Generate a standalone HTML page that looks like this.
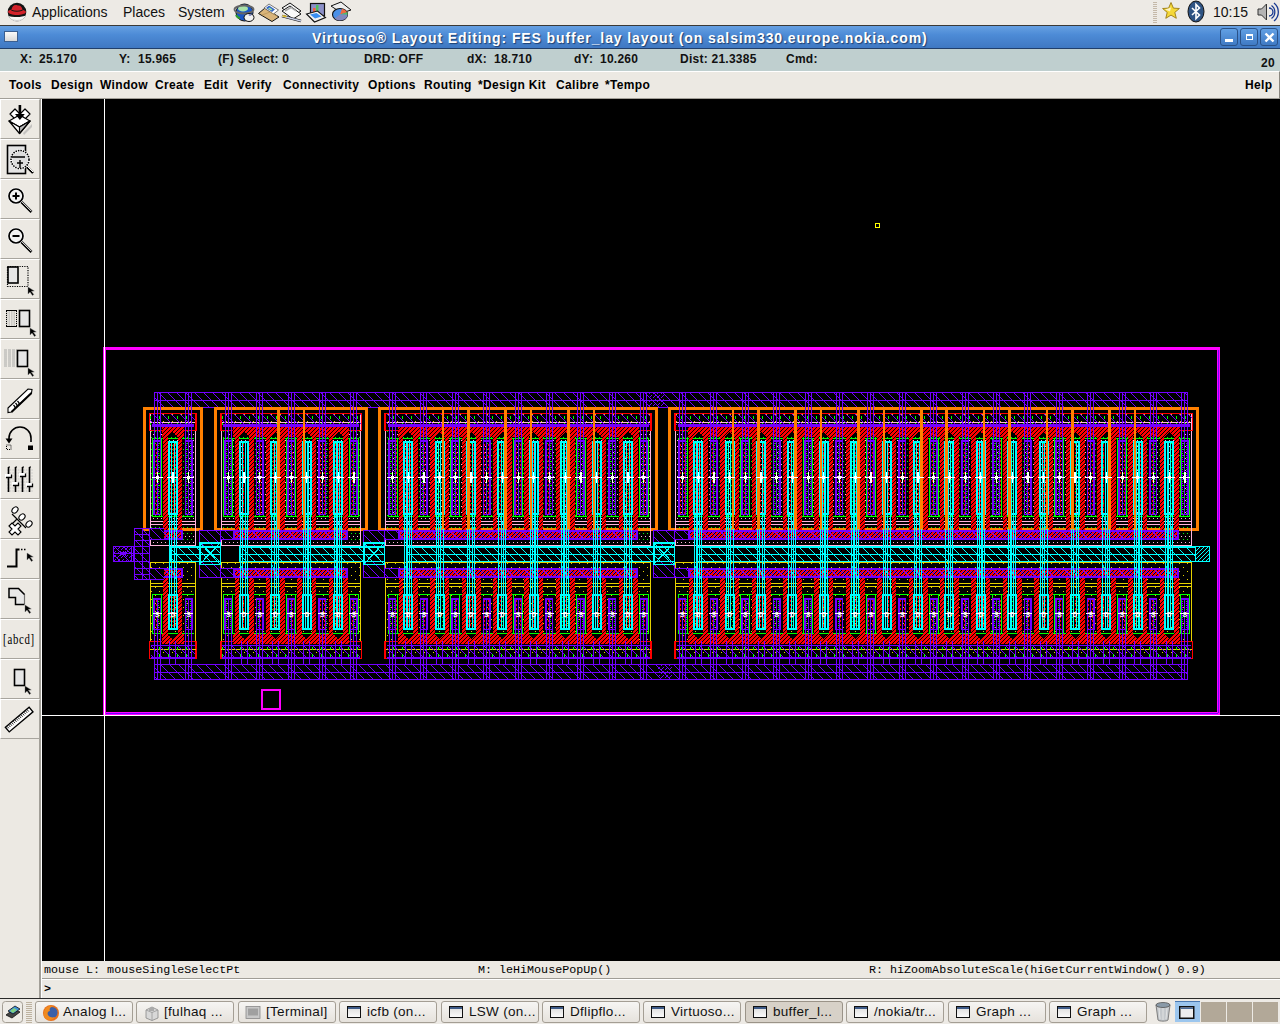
<!DOCTYPE html><html><head><meta charset="utf-8"><style>*{margin:0;padding:0;box-sizing:border-box}
html,body{width:1280px;height:1024px;overflow:hidden;background:#000;font-family:"Liberation Sans",sans-serif}
.a{position:absolute;white-space:pre}
#panel{position:absolute;left:0;top:0;width:1280px;height:26px;background:#edeae5;border-bottom:1px solid #3a3936}
#title{position:absolute;left:0;top:26px;width:1280px;height:23px;background:linear-gradient(#66a0e2,#4d8bd6 40%,#3f78c2);border-bottom:1px solid #213f6a}
#status{position:absolute;left:0;top:49px;width:1280px;height:22px;background:#bfcfcf}
#menu{position:absolute;left:0;top:71px;width:1280px;height:28px;background:#ece9e3;border-top:1px solid #fff;border-bottom:1px solid #a29f98;border-right:1px solid #8a8780}
.st{font:bold 12px "Liberation Sans",sans-serif;color:#111;top:3px;letter-spacing:0.25px}
.mn{font:bold 12px "Liberation Sans",sans-serif;color:#000;top:6px;letter-spacing:0.35px}
#tools{position:absolute;left:0;top:99px;width:42px;height:899px;background:#ece9e3;border-right:1px solid #fff;box-shadow:inset -2px 0 0 #a29f98}
.tb{position:absolute;left:0;width:40px;height:40px;border-top:1px solid #fff;border-left:1px solid #fff;border-right:1px solid #a8a59e;border-bottom:1px solid #a8a59e}
.tb svg{position:absolute;left:0;top:0}
#canvas{position:absolute;left:42px;top:99px;width:1238px;height:862px;background:#000;overflow:hidden}
#minfo{position:absolute;left:42px;top:961px;width:1238px;height:18px;background:#ece9e3;border-bottom:1px solid #a09d96}
#cmdl{position:absolute;left:42px;top:979px;width:1238px;height:19px;background:#ece9e3;border-top:1px solid #fff}
.mono{font:11.7px "Liberation Mono",monospace;color:#000}
#task{position:absolute;left:0;top:998px;width:1280px;height:26px;background:#edeae5;border-top:1px solid #2a2a2a}
.btn{position:absolute;top:2px;height:22px;width:98px;border:1px solid #a49e94;border-radius:3px;background:linear-gradient(#f6f5f3,#e6e2dc)}
.btn.act{background:#d7d1c8;border-color:#9a9388}
.btn span{position:absolute;left:27px;top:2px;font:13.5px "Liberation Sans",sans-serif;color:#111;white-space:pre;letter-spacing:0.3px}
.wi{position:absolute;left:7px;top:4px;width:14px;height:12px;border:1.5px solid #111;background:linear-gradient(#dcdcdc,#fafafa)}
.wi:before{content:"";position:absolute;left:0;top:0;right:0;height:2px;background:#3d5a88}
.tbtn{top:3px;width:18px;height:18px;border:1px solid #2a5288;border-radius:3px;background:linear-gradient(#62a0e4,#3f7ac4)}
</style></head><body><div id="panel">
<svg class="a" style="left:0;top:0" width="1280" height="25" viewBox="0 0 1280 25">
 <!-- red hat -->
 <defs><clipPath id="rhc"><circle cx="17" cy="12" r="9.3"/></clipPath></defs>
 <circle cx="17" cy="12" r="9.3" fill="#141414"/>
 <g clip-path="url(#rhc)">
 <path d="M5 14.5c3 2 8 2.5 12 2.5s8-0.8 12-3V24H5z" fill="#f6f6f6"/>
 <path d="M9 18.5c3 1.5 6 2 8 2s5.5-0.5 8-2" stroke="#cfcfcf" stroke-width="1.2" fill="none"/>
 </g>
 <path d="M11.5 9.5c0.5-2.6 2-4.5 4.2-4.5c1.3 0 1.8 0.6 3 0.6c2 0 3.3 1.6 3.8 4.2c1.8 0.5 3.3 1.3 3.5 2.2c-0.3 1.6-4.5 3-9 3c-4.5 0-8.8-1.4-9-3.3c0-0.9 1.3-1.7 3.5-2.2z" fill="#d3222b"/>
 <path d="M11.3 10.2c3.5 1.4 8 1.4 11.5-0.2" stroke="#141414" stroke-width="1" fill="none"/>
 <!-- globe + mouse -->
 <ellipse cx="244.5" cy="12.5" rx="8.5" ry="8.5" fill="#1a56c4" stroke="#111" stroke-width="1"/>
 <ellipse cx="243" cy="8.5" rx="5" ry="3" fill="#a8e0a8"/>
 <path d="M236 15c1 2 3 3 4 3" stroke="#2e9a2e" stroke-width="2" fill="none"/>
 <ellipse cx="244" cy="9.5" rx="9.5" ry="4" fill="none" stroke="#666" stroke-width="1.8"/>
 <ellipse cx="249" cy="17.5" rx="5" ry="4" fill="#f2f2f2" stroke="#111" stroke-width="1"/>
 <ellipse cx="250" cy="15" rx="1.5" ry="0.7" fill="#5560b0"/>
 <!-- envelope -->
 <path d="M258.5 13.5l6.5 -5.5l14 9l-7 4.5z" fill="#d9b47a" stroke="#111" stroke-width="1"/>
 <path d="M264 8l5 -4l9.5 6l-5 4z" fill="#fff" stroke="#555" stroke-width="0.8"/>
 <path d="M266 8l3 -2.5l6 4l-3 2.5z" fill="#3466c4"/>
 <path d="M268 8.5l1.5 -1l3 2l-1.5 1z" fill="#a0e0a0"/>
 <path d="M262 15l8 -3l7 4" stroke="#b8965a" stroke-width="0.8" fill="none"/>
 <!-- document + pen -->
 <path d="M282 8l8 -5l11 8l-8 5z" fill="#f4f4f4" stroke="#111" stroke-width="1"/>
 <path d="M282 11l8 -5l11 8l-8 5z" fill="#fafafa" stroke="#111" stroke-width="1"/>
 <path d="M285 11l6 -3.5l5 3.5" stroke="#aaa" stroke-width="1.5" fill="none"/>
 <path d="M282 16l19 5" stroke="#111" stroke-width="2.6"/>
 <path d="M282 16l19 5" stroke="#c8d0e8" stroke-width="1.4"/>
 <path d="M282.5 15.8l4 1" stroke="#e8c020" stroke-width="1.6"/>
 <!-- chart -->
 <rect x="310.5" y="3.5" width="14" height="12" fill="#8c90c8" stroke="#111" stroke-width="1.2"/>
 <rect x="313" y="8" width="2.5" height="4" fill="#f06040"/>
 <rect x="316" y="5" width="2.5" height="7" fill="#50c060"/>
 <path d="M306.5 14l11 -3l8 6.5l-11 4.5z" fill="#f2f2f2" stroke="#111" stroke-width="1.1"/>
 <path d="M310 14.5l6.5 -1.5l5 3.5l-6.5 2z" fill="#3a8ef0"/>
 <!-- pie -->
 <path d="M331 6l10 -4l10 8l-9.5 3z" fill="#eee" stroke="#111" stroke-width="1"/>
 <ellipse cx="340" cy="14.5" rx="7.5" ry="6" fill="#4a90e8" stroke="#111" stroke-width="1.1"/>
 <path d="M340 14.5l2-5.8a7.5 6 0 0 1 5.2 3.5z" fill="#f06a40"/>
 <path d="M340 14.5l7.2-2.3a7.5 6 0 0 1 0.3 2.8z" fill="#50c060"/>
 <path d="M340 14.5h7.5a7.5 6 0 0 1-13 4z" fill="#8088c0"/>
 <!-- handle -->
 <path d="M1153 2.5h4M1153 4.5h4M1153 6.5h4M1153 8.5h4M1153 10.5h4M1153 12.5h4M1153 14.5h4M1153 16.5h4M1153 18.5h4M1153 20.5h4M1153 22.5h4" stroke="#c4b8a8" stroke-width="1"/>
 <!-- star -->
 <path d="M1171 2.5l2.4 5.6l6 0.4l-4.6 3.9l1.5 5.9l-5.3-3.2l-5.2 3.2l1.4-5.9l-4.6-3.9l6-0.4z" fill="#f5d838" stroke="#9a7a10" stroke-width="0.9"/>
 <path d="M1165 9.5l5 2l1 -4" fill="#fff" opacity="0.7"/>
 <!-- bluetooth -->
 <ellipse cx="1196" cy="11.5" rx="8" ry="10.5" fill="#2e5383" stroke="#111" stroke-width="1"/>
 <path d="M1192 8l7.5 7l-3.5 3.5v-14l3.5 3.5l-7.5 7" stroke="#fff" stroke-width="1.6" fill="none"/>
 <!-- speaker -->
 <path d="M1258 9h3.5l5-5v16l-5-5h-3.5z" fill="#b4b4b4" stroke="#333" stroke-width="1"/>
 <path d="M1269 8a4 4 0 0 1 0 8M1271.5 5.5a8 8 0 0 1 0 13M1274 3a11.5 11.5 0 0 1 0 18" stroke="#1a3a90" stroke-width="1.3" fill="none"/>
</svg>
 <span class="a" style="left:32px;top:4px;font:14px 'Liberation Sans',sans-serif;color:#111">Applications</span>
 <span class="a" style="left:123px;top:4px;font:14px 'Liberation Sans',sans-serif;color:#111">Places</span>
 <span class="a" style="left:178px;top:4px;font:14px 'Liberation Sans',sans-serif;color:#111">System</span>
 <span class="a" style="left:1213px;top:4px;font:14px 'Liberation Sans',sans-serif;color:#111">10:15</span>
</div>
<div id="title">
 <div class="a" style="left:4px;top:5px;width:14px;height:11px;background:linear-gradient(#fafafa,#d8d8d8);border:1px solid #3b5f90"></div>
 <div class="a tbtn" style="left:1220px;top:2px"><div style="position:absolute;left:4px;top:10px;width:8px;height:3px;background:#fff"></div></div>
 <div class="a tbtn" style="left:1240px;top:2px"><div style="position:absolute;left:5px;top:5px;width:7px;height:6px;border:1.5px solid #fff;border-top-width:2.5px"></div></div>
 <div class="a tbtn" style="left:1260px;top:2px"><svg width="17" height="17" style="position:absolute;left:0;top:0"><path d="M4.5 4.5l8 8M12.5 4.5l-8 8" stroke="#fff" stroke-width="2.4"/></svg></div>
 <span class="a" style="left:312px;top:4px;font:bold 14px 'Liberation Sans',sans-serif;color:#fff;letter-spacing:0.9px;text-shadow:1px 1px 1px #1d3f70">Virtuoso® Layout Editing: FES buffer_lay layout (on salsim330.europe.nokia.com)</span>
</div>
<div id="status">
 <span class="a st" style="left:20px">X:</span><span class="a st" style="left:39px">25.170</span>
 <span class="a st" style="left:119px">Y:</span><span class="a st" style="left:138px">15.965</span>
 <span class="a st" style="left:218px">(F) Select: 0</span>
 <span class="a st" style="left:364px">DRD: OFF</span>
 <span class="a st" style="left:467px">dX:</span><span class="a st" style="left:494px">18.710</span>
 <span class="a st" style="left:574px">dY:</span><span class="a st" style="left:600px">10.260</span>
 <span class="a st" style="left:680px">Dist: 21.3385</span>
 <span class="a st" style="left:786px">Cmd:</span>
 <span class="a st" style="left:1261px;top:7px">20</span>
</div>
<div id="menu">
 <span class="a mn" style="left:9px">Tools</span>
 <span class="a mn" style="left:51px">Design</span>
 <span class="a mn" style="left:100px">Window</span>
 <span class="a mn" style="left:155px">Create</span>
 <span class="a mn" style="left:204px">Edit</span>
 <span class="a mn" style="left:237px">Verify</span>
 <span class="a mn" style="left:283px">Connectivity</span>
 <span class="a mn" style="left:368px">Options</span>
 <span class="a mn" style="left:424px">Routing</span>
 <span class="a mn" style="left:478px">*Design Kit</span>
 <span class="a mn" style="left:556px">Calibre</span>
 <span class="a mn" style="left:605px">*Tempo</span>
 <span class="a mn" style="left:1245px">Help</span>
</div>
<div id="tools"></div>
<div id="minfo">
 <span class="a mono" style="left:2px;top:2px">mouse L: mouseSingleSelectPt</span>
 <span class="a mono" style="left:436px;top:2px">M: leHiMousePopUp()</span>
 <span class="a mono" style="left:827px;top:2px">R: hiZoomAbsoluteScale(hiGetCurrentWindow() 0.9)</span>
</div>
<div id="cmdl"><span class="a mono" style="left:2px;top:2px;font-weight:bold">&gt;</span></div>
<div id="task">
 <svg class="a" style="left:0;top:0" width="35" height="26"><rect x="2.5" y="2.5" width="20" height="21" rx="3" fill="#efece7" stroke="#a49e94"/>
<path d="M6 16l8 -6l6 3l-8 6z" fill="#444" stroke="#111" stroke-width="0.8"/><path d="M8 12l7 -5l5 3l-7 5z" fill="#3c8ed8" stroke="#111" stroke-width="0.8"/><path d="M10 12l4 -3l3 2l-4 3z" fill="#80d080"/>
<path d="M26 3.5h6M26 5.5h6M26 7.5h6M26 9.5h6M26 11.5h6M26 13.5h6M26 15.5h6M26 17.5h6M26 19.5h6M26 21.5h6M26 23.5h6" stroke="#bdb2a0" stroke-width="1"/></svg>
 <div class="btn" style="left:35px"><svg class="a" style="left:6px;top:2px" width="18" height="18"><circle cx="9" cy="9" r="8" fill="#e8701a"/><circle cx="10" cy="8.5" r="5.5" fill="#3a5fa8"/><path d="M2 8c1-5 5-7 9-6c-3 1-4 3-3 5c-2 0-3 2-2 4c1 2 4 3 7 2c-2 3-6 4-9 2c-1.5-1-2.5-3-2-7z" fill="#f08a20"/></svg><span>Analog l...</span></div>
 <div class="btn" style="left:136px"><svg class="a" style="left:7px;top:3px" width="16" height="16"><path d="M2 5l6 -3l6 3v8l-6 2.5l-6 -2.5z" fill="#d8d8d8" stroke="#888" stroke-width="0.8"/><path d="M8 7v8.5M2 5l6 2.5l6 -2.5" stroke="#999" stroke-width="0.8" fill="none"/><rect x="5" y="3" width="5" height="3" fill="#aaa"/></svg><span>[fulhaq ...</span></div>
 <div class="btn" style="left:238px"><svg class="a" style="left:6px;top:3px" width="16" height="16"><rect x="1" y="1.5" width="14" height="12" fill="#c8c8c8" stroke="#888" stroke-width="0.8"/><rect x="3" y="3.5" width="10" height="7" fill="#a0a0a0"/></svg><span>[Terminal]</span></div>
 <div class="btn" style="left:339px"><div class="wi"></div><span>icfb (on...</span></div>
 <div class="btn" style="left:441px"><div class="wi"></div><span>LSW (on...</span></div>
 <div class="btn" style="left:542px"><div class="wi"></div><span>Dflipflo...</span></div>
 <div class="btn" style="left:643px"><div class="wi"></div><span>Virtuoso...</span></div>
 <div class="btn act" style="left:745px"><div class="wi"></div><span>buffer_l...</span></div>
 <div class="btn" style="left:846px"><div class="wi"></div><span>/nokia/tr...</span></div>
 <div class="btn" style="left:948px"><div class="wi"></div><span>Graph ...</span></div>
 <div class="btn" style="left:1049px"><div class="wi"></div><span>Graph ...</span></div>
<svg class="a" style="left:1150px;top:0" width="130" height="26">
<path d="M6 6h14l-2 15c-1 1.5-9 1.5-10 0z" fill="#c4c8cc" stroke="#666" stroke-width="0.8"/>
<ellipse cx="13" cy="6" rx="7" ry="2.5" fill="#8a9aa8" stroke="#555" stroke-width="0.8"/>
<path d="M9 9l1 11M13 9v12M17 9l-1 11" stroke="#e8e8e8" stroke-width="0.8"/>
<rect x="25" y="3" width="25" height="20" fill="#9cc6ee"/><rect x="25" y="2" width="25" height="1" fill="#4a78b0"/>
<rect x="29.75" y="7.75" width="14" height="11.5" fill="#eee" stroke="#111" stroke-width="1.5"/><rect x="30.5" y="8.5" width="12.5" height="1.5" fill="#4a6a98"/>
<rect x="51" y="3" width="25" height="20" fill="#b2a898"/><rect x="77" y="3" width="25" height="20" fill="#b2a898"/><rect x="103" y="3" width="25" height="20" fill="#b2a898"/>
</svg>
</div>
<div class="tb" style="top:99px"><svg width="40" height="40" viewBox="0 0 40 40"><g stroke="#000" stroke-width="1.2" fill="#fff" stroke-linejoin="round">
<path d="M9 14l5 -5l5 5l-5 5z"/><path d="M19 14l5 -5l5 5l-5 5z"/>
<path d="M8 21l10.5 -6l10.5 6l-10.5 6z"/>
<path d="M8 21l10.5 12.5l10.5 -12.5l-10.5 6z" fill="#fff"/>
<path d="M18.5 27v6.5l10.5 -12.5z" fill="#bbb"/>
</g>
<path d="M22 33l9 -9v3l-8 8z" fill="#aaa" opacity="0.6"/>
<path d="M17.6 5h2.6v9h3.6l-4.9 6l-4.9 -6h3.6z" fill="#000"/></svg></div><div class="tb" style="top:139px"><svg width="40" height="40" viewBox="0 0 40 40"><rect x="6.5" y="5.5" width="18" height="28" fill="#e4e4e4" stroke="#000" stroke-width="1.6"/>
<circle cx="19" cy="19.5" r="9" fill="#ddd" stroke="#fff" stroke-width="2.5"/>
<circle cx="19" cy="19.5" r="9" fill="none" stroke="#000" stroke-width="1.6" stroke-dasharray="1.5 1"/>
<path d="M11 17h13M19 20v8M16 23h6" stroke="#000" stroke-width="1.4"/>
<path d="M26 27l6 6" stroke="#000" stroke-width="2.4"/><path d="M26 26l6 6" stroke="#fff" stroke-width="1"/></svg></div><div class="tb" style="top:179px"><svg width="40" height="40" viewBox="0 0 40 40"><circle cx="15" cy="16" r="7" fill="#f2f2f2" stroke="#fff" stroke-width="3"/>
<circle cx="15" cy="16" r="7" fill="none" stroke="#000" stroke-width="1.7"/>
<path d="M11.5 16h7M15 12.5v7" stroke="#000" stroke-width="2"/>
<path d="M20.5 22l10 10" stroke="#000" stroke-width="2.6"/><path d="M20.5 21.3l10 10" stroke="#fff" stroke-width="1"/></svg></div><div class="tb" style="top:219px"><svg width="40" height="40" viewBox="0 0 40 40"><circle cx="15" cy="16" r="7" fill="#f2f2f2" stroke="#fff" stroke-width="3"/>
<circle cx="15" cy="16" r="7" fill="none" stroke="#000" stroke-width="1.7"/>
<path d="M11.5 16h7" stroke="#000" stroke-width="2"/>
<path d="M20.5 22l10 10" stroke="#000" stroke-width="2.6"/><path d="M20.5 21.3l10 10" stroke="#fff" stroke-width="1"/></svg></div><div class="tb" style="top:259px"><svg width="40" height="40" viewBox="0 0 40 40"><rect x="7" y="7" width="10" height="16" fill="#e6e6e6" stroke="#000" stroke-width="1.6"/>
<rect x="6.5" y="6.5" width="20.5" height="20" fill="none" stroke="#000" stroke-width="1.2" stroke-dasharray="1.2 1.2"/><path d="M27 27l0 7l2 -2l2.5 3.5l1.3 -1l-2.5 -3.3l3 -0.3z" fill="#000" stroke="#777" stroke-width="0.4"/></svg></div><div class="tb" style="top:299px"><svg width="40" height="40" viewBox="0 0 40 40"><path d="M5 11h11M5 13h11M5 15h11M5 17h11M5 19h11M5 21h11M5 23h11M5 25h11" stroke="#888" stroke-width="0.6" stroke-dasharray="1.5 1"/>
<path d="M5 10.5h11M5 26.5h11" stroke="#000" stroke-width="1.2"/><path d="M5.5 11v15M15.5 11v15" stroke="#000" stroke-width="1" stroke-dasharray="1 1"/>
<rect x="18.5" y="10.5" width="10" height="16" fill="#e6e6e6" stroke="#000" stroke-width="1.6"/><path d="M29 28l0 7l2 -2l2.5 3.5l1.3 -1l-2.5 -3.3l3 -0.3z" fill="#000" stroke="#777" stroke-width="0.4"/></svg></div><div class="tb" style="top:339px"><svg width="40" height="40" viewBox="0 0 40 40"><path d="M3 10h13M3 12h13M3 14h13M3 16h13M3 18h13M3 20h13M3 22h13M3 24h13M3 26h13" stroke="#999" stroke-width="0.8" stroke-dasharray="3 1"/>
<rect x="16.5" y="10.5" width="10" height="16" fill="#e6e6e6" stroke="#000" stroke-width="1.6"/><path d="M27 28l0 7l2 -2l2.5 3.5l1.3 -1l-2.5 -3.3l3 -0.3z" fill="#000" stroke="#777" stroke-width="0.4"/></svg></div><div class="tb" style="top:379px"><svg width="40" height="40" viewBox="0 0 40 40"><path d="M7 28l20 -19l4 0.5l-0.5 3.5l-20 19l-3.5 0.5z" fill="#fff" stroke="#000" stroke-width="1.1"/>
<path d="M10.5 32l20 -19" stroke="#000" stroke-width="2"/>
<path d="M12.5 25c1 1 2 2 1.5 3M14.5 23c1 1 2 2 1.5 3M16.5 21c1 1 2 2 1.5 3" stroke="#000" stroke-width="1.4" fill="none"/></svg></div><div class="tb" style="top:419px"><svg width="40" height="40" viewBox="0 0 40 40"><path d="M30 22V18A10.5 10.5 0 0 0 8 18v2" fill="none" stroke="#000" stroke-width="1.6"/>
<path d="M4.5 18.5h7l-3.5 5z" fill="#000"/>
<rect x="5.5" y="25" width="4.5" height="4.5" fill="none" stroke="#000" stroke-width="1" stroke-dasharray="1 1"/>
<rect x="27" y="25.5" width="5" height="4.5" fill="#000"/></svg></div><div class="tb" style="top:459px"><svg width="40" height="40" viewBox="0 0 40 40"><path d="M6 10h27M6 13h27M6 16h27M6 19h27M6 22h27M6 25h27M6 28h27M6 31h27" stroke="#b8b8b8" stroke-width="0.7" stroke-dasharray="1.5 1.2"/>
<path d="M7.5 7v25M14.5 7v25M21.5 7v25M28.5 7v25" stroke="#000" stroke-width="1.6"/>
<path d="M7.5 7h1.5M14.5 7h1.5M21.5 7h1.5M28.5 7h1.5" stroke="#000" stroke-width="1.2"/>
<g fill="#fff"><rect x="4" y="14" width="6" height="3"/><rect x="11" y="22" width="6" height="3"/><rect x="18" y="13" width="6" height="3"/><rect x="25" y="23" width="6" height="3"/></g>
<path d="M5 17.5h5.5v-3M12 25.5h5.5v-3M19 16.5h5.5v-3M26 26.5h5.5v-3" stroke="#000" stroke-width="1.3" fill="none"/></svg></div><div class="tb" style="top:499px"><svg width="40" height="40" viewBox="0 0 40 40"><path d="M11 14l14 14M16 19l-7 7" stroke="#000" stroke-width="1.2"/>
<g fill="#fff" stroke="#000" stroke-width="1.1"><ellipse cx="14" cy="10" rx="3.5" ry="2.5" transform="rotate(-45 14 10)"/><ellipse cx="21" cy="17" rx="3.5" ry="2.5" transform="rotate(-45 21 17)"/><ellipse cx="28" cy="24" rx="3.5" ry="2.5" transform="rotate(-45 28 24)"/>
<path d="M8 26l3 -3l3 3l3 -3l3 3l-3 3l3 3l-3 3l-3 -3l-3 3l-3 -3l3 -3z"/></g></svg></div><div class="tb" style="top:539px"><svg width="40" height="40" viewBox="0 0 40 40"><path d="M6 26.5h9.5v-17h3" fill="none" stroke="#000" stroke-width="2"/>
<path d="M20 9.5h6" stroke="#000" stroke-width="1.6" stroke-dasharray="1.5 1.5"/><path d="M26 13l0 7l2 -2l2.5 3.5l1.3 -1l-2.5 -3.3l3 -0.3z" fill="#000" stroke="#777" stroke-width="0.4"/></svg></div><div class="tb" style="top:579px"><svg width="40" height="40" viewBox="0 0 40 40"><path d="M23.5 14.5l-6 -6h-9.5v9h6.5v7h9" fill="#e8e8e8" stroke="#000" stroke-width="1.5"/>
<path d="M23.5 14.5v10" stroke="#000" stroke-width="1.2" stroke-dasharray="1 1"/><path d="M24 25l0 7l2 -2l2.5 3.5l1.3 -1l-2.5 -3.3l3 -0.3z" fill="#000" stroke="#777" stroke-width="0.4"/></svg></div><div class="tb" style="top:619px"><svg width="40" height="40" viewBox="0 0 40 40"><text x="18" y="24.5" font-family="Liberation Serif" font-size="15" text-anchor="middle" transform="translate(18 0) scale(0.72 1) translate(-18 0)" fill="#000" letter-spacing="1">[abcd]</text></svg></div><div class="tb" style="top:659px"><svg width="40" height="40" viewBox="0 0 40 40"><rect x="13.5" y="9.5" width="10" height="16" fill="#e6e6e6" stroke="#000" stroke-width="1.6"/><path d="M24 26l0 7l2 -2l2.5 3.5l1.3 -1l-2.5 -3.3l3 -0.3z" fill="#000" stroke="#777" stroke-width="0.4"/></svg></div><div class="tb" style="top:699px"><svg width="40" height="40" viewBox="0 0 40 40"><g transform="rotate(-40 18.5 20)"><rect x="3" y="16.5" width="31" height="6" fill="#fff" stroke="#000" stroke-width="1.4"/>
<path d="M5 17v2.5M7 17v2.5M9 17v2.5M11 17v2.5M13 17v2.5M15 17v2.5M17 17v2.5M19 17v2.5M21 17v2.5M23 17v2.5M25 17v2.5M27 17v2.5M29 17v2.5M31 17v2.5" stroke="#000" stroke-width="0.8"/></g></svg></div><div id="canvas"><svg width="1238" height="862" viewBox="42 99 1238 862" style="position:absolute;left:0;top:0" shape-rendering="crispEdges">
<defs>
<pattern id="hp" patternUnits="userSpaceOnUse" width="9" height="9"><rect x="0" y="0" width="1" height="1" fill="#7300ff"/><rect x="1" y="1" width="1" height="1" fill="#7300ff"/><rect x="2" y="2" width="1" height="1" fill="#7300ff"/><rect x="3" y="3" width="1" height="1" fill="#7300ff"/><rect x="4" y="4" width="1" height="1" fill="#7300ff"/><rect x="5" y="5" width="1" height="1" fill="#7300ff"/><rect x="6" y="6" width="1" height="1" fill="#7300ff"/><rect x="7" y="7" width="1" height="1" fill="#7300ff"/><rect x="8" y="8" width="1" height="1" fill="#7300ff"/></pattern>
<pattern id="hc" patternUnits="userSpaceOnUse" width="9" height="9"><rect x="0" y="0" width="1" height="1" fill="#00ffff"/><rect x="1" y="1" width="1" height="1" fill="#00ffff"/><rect x="2" y="2" width="1" height="1" fill="#00ffff"/><rect x="3" y="3" width="1" height="1" fill="#00ffff"/><rect x="4" y="4" width="1" height="1" fill="#00ffff"/><rect x="5" y="5" width="1" height="1" fill="#00ffff"/><rect x="6" y="6" width="1" height="1" fill="#00ffff"/><rect x="7" y="7" width="1" height="1" fill="#00ffff"/><rect x="8" y="8" width="1" height="1" fill="#00ffff"/></pattern>
<pattern id="hr" patternUnits="userSpaceOnUse" width="4" height="4"><rect width="4" height="4" fill="#ff0000"/><rect x="3" y="0" width="1" height="1" fill="#000"/><rect x="2" y="1" width="1" height="1" fill="#000"/><rect x="1" y="2" width="1" height="1" fill="#000"/><rect x="0" y="3" width="1" height="1" fill="#000"/></pattern>
<pattern id="ty" patternUnits="userSpaceOnUse" width="9" height="7"><rect x="1" y="1" width="1" height="1" fill="#e6d200"/><rect x="6" y="3" width="1" height="1" fill="#00ff00"/><rect x="6" y="4" width="1" height="1" fill="#00ff00"/><rect x="6" y="5" width="1" height="1" fill="#00ff00"/></pattern>
<pattern id="pp" patternUnits="userSpaceOnUse" width="4" height="4"><rect width="4" height="4" fill="#ff0000"/><rect x="0" y="0" width="1" height="1" fill="#7300ff"/><rect x="1" y="0" width="1" height="1" fill="#7300ff"/><rect x="2" y="0" width="1" height="1" fill="#7300ff"/><rect x="3" y="0" width="1" height="1" fill="#7300ff"/><rect x="2" y="1" width="1" height="1" fill="#000"/><rect x="1" y="2" width="1" height="1" fill="#000"/><rect x="0" y="3" width="1" height="1" fill="#000"/></pattern>
<pattern id="dpu" patternUnits="userSpaceOnUse" width="4" height="4"><rect x="2" y="0" width="1" height="1" fill="#7300ff"/><rect x="1" y="1" width="1" height="1" fill="#7300ff"/><rect x="3" y="3" width="1" height="1" fill="#7300ff"/></pattern>
<pattern id="dcy" patternUnits="userSpaceOnUse" width="4" height="4"><rect x="2" y="0" width="1" height="1" fill="#00ffff"/><rect x="1" y="1" width="1" height="1" fill="#00ffff"/><rect x="0" y="2" width="1" height="1" fill="#00ffff"/><rect x="3" y="3" width="1" height="1" fill="#00ffff"/></pattern>
<pattern id="dw" patternUnits="userSpaceOnUse" width="8" height="8"><rect x="3" y="3" width="1" height="1" fill="#ffffff"/><rect x="7" y="7" width="1" height="1" fill="#ffffff"/></pattern>
<pattern id="dy" patternUnits="userSpaceOnUse" width="8" height="8"><rect x="3" y="3" width="1" height="1" fill="#e6d200"/><rect x="7" y="7" width="1" height="1" fill="#e6d200"/></pattern>
<pattern id="pd" patternUnits="userSpaceOnUse" width="4" height="6"><rect x="1" y="2" width="1" height="1" fill="#ffb4dc"/><rect x="3" y="5" width="1" height="1" fill="#00ff00"/></pattern>
<pattern id="fi" patternUnits="userSpaceOnUse" width="4" height="4"><rect x="0" y="0" width="1" height="1" fill="#ff0000"/><rect x="0" y="1" width="1" height="1" fill="#ff0000"/><rect x="2" y="1" width="1" height="1" fill="#00ff00"/><rect x="2" y="3" width="1" height="1" fill="#7300ff"/></pattern>
<pattern id="fd" patternUnits="userSpaceOnUse" width="5" height="4"><rect x="0" y="0" width="1" height="1" fill="#ff0000"/><rect x="3" y="0" width="1" height="1" fill="#ff0000"/><rect x="0" y="1" width="1" height="1" fill="#ff0000"/><rect x="2" y="1" width="1" height="1" fill="#00ff00"/><rect x="3" y="1" width="1" height="1" fill="#ff0000"/><rect x="3" y="2" width="1" height="1" fill="#ff0000"/></pattern>
</defs>
<line x1="42" y1="715.5" x2="1280" y2="715.5" stroke="#ffffff" stroke-width="1"/>
<rect x="104.5" y="348.5" width="1114" height="365" fill="none" stroke="#ff00ff" stroke-width="3"/>
<line x1="106" y1="713.5" x2="1218" y2="713.5" stroke="#7300ff" stroke-width="1"/>
<line x1="1218.5" y1="350" x2="1218.5" y2="713" stroke="#7300ff" stroke-width="1"/>
<line x1="104.5" y1="99" x2="104.5" y2="961" stroke="#ffffff" stroke-width="1"/>
<rect x="262.0" y="690.0" width="18" height="19" fill="none" stroke="#ff00ff" stroke-width="2"/>
<rect x="875.6" y="223.6" width="3.8" height="3.8" fill="none" stroke="#ffff00" stroke-width="1.2"/>
<rect x="154" y="392" width="1034" height="16" fill="url(#hp)"/>
<rect x="154.6" y="392.6" width="1032.8" height="14.8" fill="none" stroke="#7300ff" stroke-width="1.2"/>
<line x1="154" y1="400.0" x2="1188" y2="400.0" stroke="#7300ff" stroke-width="1"/>
<rect x="154" y="664" width="1034" height="16" fill="url(#hp)"/>
<rect x="154.6" y="664.6" width="1032.8" height="14.8" fill="none" stroke="#7300ff" stroke-width="1.2"/>
<line x1="154" y1="672.0" x2="1188" y2="672.0" stroke="#7300ff" stroke-width="1"/>
<rect x="648" y="393" width="16" height="14" fill="url(#dpu)"/>
<rect x="658" y="665" width="14" height="14" fill="url(#dpu)"/>
<rect x="150.2" y="431" width="45.4" height="115" fill="url(#pd)"/>
<rect x="150.2" y="563" width="45.4" height="78" fill="url(#dy)"/>
<rect x="144.5" y="408.5" width="56.6" height="121" fill="none" stroke="#ff8000" stroke-width="3"/>
<rect x="150.2" y="413.5" width="45.4" height="132" fill="none" stroke="#ffb4dc" stroke-width="1"/>
<line x1="150.2" y1="422.5" x2="195.6" y2="422.5" stroke="#ffb4dc" stroke-width="1"/>
<line x1="150.2" y1="521.5" x2="195.6" y2="521.5" stroke="#ffb4dc" stroke-width="1"/>
<line x1="150.2" y1="524.5" x2="195.6" y2="524.5" stroke="#ffb4dc" stroke-width="1"/>
<rect x="150.2" y="414" width="45.4" height="11" fill="url(#hp)"/>
<rect x="150.2" y="414" width="45.4" height="11" fill="url(#ty)"/>
<rect x="149.8" y="413.6" width="46.1" height="16.7" fill="none" stroke="#ff0000" stroke-width="1.3"/>
<line x1="152.2" y1="425.5" x2="193.6" y2="425.5" stroke="#7300ff" stroke-width="3"/>
<rect x="150.2" y="562.5" width="45.4" height="79" fill="none" stroke="#e6d200" stroke-width="1"/>
<line x1="150.2" y1="583.5" x2="195.6" y2="583.5" stroke="#e6d200" stroke-width="1"/>
<line x1="150.2" y1="586.5" x2="195.6" y2="586.5" stroke="#e6d200" stroke-width="1"/>
<rect x="149.8" y="641.6" width="46.1" height="16.7" fill="none" stroke="#ff0000" stroke-width="1.3"/>
<line x1="150.2" y1="649.5" x2="195.6" y2="649.5" stroke="#e6d200" stroke-width="1"/>
<rect x="151.2" y="645" width="43.4" height="14" fill="url(#hp)"/>
<rect x="151.2" y="645" width="43.4" height="14" fill="url(#ty)"/>
<line x1="151.2" y1="645.5" x2="194.6" y2="645.5" stroke="#7300ff" stroke-width="1.5"/>
<line x1="151.2" y1="658" x2="194.6" y2="658" stroke="#7300ff" stroke-width="1.2"/>
<line x1="152.2" y1="438.5" x2="193.6" y2="438.5" stroke="#00ff00" stroke-width="1"/>
<line x1="152.2" y1="516.5" x2="193.6" y2="516.5" stroke="#00ff00" stroke-width="1"/>
<line x1="152.2" y1="594.5" x2="193.6" y2="594.5" stroke="#00ff00" stroke-width="1"/>
<line x1="152.2" y1="633.5" x2="193.6" y2="633.5" stroke="#00ff00" stroke-width="1"/>
<line x1="164.0" y1="431" x2="164.0" y2="528" stroke="#ffb4dc" stroke-width="0.8"/>
<line x1="164.0" y1="578" x2="164.0" y2="641" stroke="#e6d200" stroke-width="0.8"/>
<line x1="179.8" y1="431" x2="179.8" y2="528" stroke="#ffb4dc" stroke-width="0.8"/>
<line x1="179.8" y1="578" x2="179.8" y2="641" stroke="#e6d200" stroke-width="0.8"/>
<rect x="162.2" y="427" width="21.4" height="10" fill="url(#hr)"/>
<rect x="162.2" y="634" width="21.4" height="10" fill="url(#hr)"/>
<path d="M163.4 540V427H182.4V540H177.9V437H167.9V540Z" fill="url(#hr)"/>
<path d="M167.9 437L172.9 432L177.9 437Z" fill="#000"/>
<path d="M163.4 568V644H182.4V568H177.9V634H167.9V568Z" fill="url(#hr)"/>
<path d="M167.9 634L172.9 639L177.9 634Z" fill="#000"/>
<rect x="162.2" y="530" width="20.4" height="10" fill="url(#hr)"/>
<rect x="162.2" y="530" width="20.4" height="10" fill="url(#hp)"/>
<rect x="162.2" y="530" width="20.4" height="10" fill="url(#dpu)"/>
<rect x="163.2" y="531.0" width="18.4" height="8" fill="none" stroke="#7300ff" stroke-width="2"/>
<rect x="162.2" y="568" width="20.4" height="10" fill="url(#hr)"/>
<rect x="162.2" y="568" width="20.4" height="10" fill="url(#hp)"/>
<rect x="162.2" y="568" width="20.4" height="10" fill="url(#dpu)"/>
<rect x="163.2" y="569.0" width="18.4" height="8" fill="none" stroke="#7300ff" stroke-width="2"/>
<rect x="134" y="528" width="16" height="52" fill="url(#hp)"/>
<rect x="134.7" y="528.6" width="14.7" height="50.7" fill="none" stroke="#7300ff" stroke-width="1.3"/>
<line x1="134" y1="534" x2="150" y2="534" stroke="#7300ff" stroke-width="1"/>
<line x1="134" y1="540" x2="150" y2="540" stroke="#7300ff" stroke-width="1"/>
<line x1="134" y1="546" x2="150" y2="546" stroke="#7300ff" stroke-width="1"/>
<line x1="134" y1="553.5" x2="150" y2="553.5" stroke="#7300ff" stroke-width="1"/>
<line x1="134" y1="561" x2="150" y2="561" stroke="#7300ff" stroke-width="1"/>
<line x1="134" y1="568" x2="150" y2="568" stroke="#7300ff" stroke-width="1"/>
<line x1="134" y1="574" x2="150" y2="574" stroke="#7300ff" stroke-width="1"/>
<line x1="142" y1="528" x2="142" y2="580" stroke="#7300ff" stroke-width="1"/>
<rect x="150" y="528" width="14" height="12" fill="#000"/>
<rect x="150" y="528" width="14" height="12" fill="url(#hp)"/>
<line x1="150" y1="528.5" x2="164" y2="528.5" stroke="#7300ff" stroke-width="1"/>
<line x1="150" y1="539.5" x2="164" y2="539.5" stroke="#7300ff" stroke-width="1"/>
<rect x="150" y="568" width="14" height="12" fill="#000"/>
<rect x="150" y="568" width="14" height="12" fill="url(#hp)"/>
<line x1="150" y1="568.5" x2="164" y2="568.5" stroke="#7300ff" stroke-width="1"/>
<line x1="150" y1="579.5" x2="164" y2="579.5" stroke="#7300ff" stroke-width="1"/>
<rect x="152.7" y="438.5" width="9.0" height="78" fill="none" stroke="#00ff00" stroke-width="1"/>
<rect x="152.7" y="594.5" width="9.0" height="39" fill="none" stroke="#00ff00" stroke-width="1"/>
<rect x="153.2" y="440" width="8.0" height="75" fill="url(#fi)"/>
<rect x="153.9" y="440.8" width="6.5" height="73.5" fill="none" stroke="#7300ff" stroke-width="1.5"/>
<line x1="157.2" y1="440" x2="157.2" y2="515" stroke="#7300ff" stroke-width="1"/>
<line x1="154.2" y1="392" x2="154.2" y2="440" stroke="#7300ff" stroke-width="1.1"/>
<line x1="157.2" y1="392" x2="157.2" y2="440" stroke="#7300ff" stroke-width="1.1"/>
<line x1="160.2" y1="392" x2="160.2" y2="440" stroke="#7300ff" stroke-width="1.1"/>
<rect x="153.2" y="598" width="8.0" height="32" fill="url(#fi)"/>
<rect x="153.9" y="598.8" width="6.5" height="30.5" fill="none" stroke="#7300ff" stroke-width="1.5"/>
<line x1="157.2" y1="598" x2="157.2" y2="630" stroke="#7300ff" stroke-width="1"/>
<line x1="154.2" y1="630" x2="154.2" y2="680" stroke="#7300ff" stroke-width="1.1"/>
<line x1="157.2" y1="630" x2="157.2" y2="680" stroke="#7300ff" stroke-width="1.1"/>
<line x1="160.2" y1="630" x2="160.2" y2="680" stroke="#7300ff" stroke-width="1.1"/>
<rect x="167.9" y="441" width="10.0" height="74" fill="url(#fd)"/>
<rect x="168.9" y="442.0" width="8.0" height="72" fill="none" stroke="#00ffff" stroke-width="2"/>
<rect x="167.9" y="594" width="10.0" height="36" fill="url(#fd)"/>
<rect x="168.9" y="595.0" width="8.0" height="34" fill="none" stroke="#00ffff" stroke-width="2"/>
<line x1="169.4" y1="441" x2="169.4" y2="630" stroke="#00ffff" stroke-width="1.1"/>
<line x1="171.7" y1="441" x2="171.7" y2="630" stroke="#00ffff" stroke-width="1.1"/>
<line x1="174.1" y1="441" x2="174.1" y2="630" stroke="#00ffff" stroke-width="1.1"/>
<line x1="176.4" y1="441" x2="176.4" y2="630" stroke="#00ffff" stroke-width="1.1"/>
<line x1="169.4" y1="515" x2="176.4" y2="530" stroke="#00ffff" stroke-width="0.8"/>
<line x1="169.4" y1="565" x2="176.4" y2="580" stroke="#00ffff" stroke-width="0.8"/>
<line x1="169.9" y1="641" x2="169.9" y2="664" stroke="#7300ff" stroke-width="1"/>
<line x1="175.9" y1="641" x2="175.9" y2="664" stroke="#7300ff" stroke-width="1"/>
<rect x="184.6" y="440" width="8.0" height="75" fill="url(#fi)"/>
<rect x="185.3" y="440.8" width="6.5" height="73.5" fill="none" stroke="#7300ff" stroke-width="1.5"/>
<line x1="188.6" y1="440" x2="188.6" y2="515" stroke="#7300ff" stroke-width="1"/>
<line x1="185.6" y1="392" x2="185.6" y2="440" stroke="#7300ff" stroke-width="1.1"/>
<line x1="188.6" y1="392" x2="188.6" y2="440" stroke="#7300ff" stroke-width="1.1"/>
<line x1="191.6" y1="392" x2="191.6" y2="440" stroke="#7300ff" stroke-width="1.1"/>
<rect x="184.6" y="598" width="8.0" height="32" fill="url(#fi)"/>
<rect x="185.3" y="598.8" width="6.5" height="30.5" fill="none" stroke="#7300ff" stroke-width="1.5"/>
<line x1="188.6" y1="598" x2="188.6" y2="630" stroke="#7300ff" stroke-width="1"/>
<line x1="185.6" y1="630" x2="185.6" y2="680" stroke="#7300ff" stroke-width="1.1"/>
<line x1="188.6" y1="630" x2="188.6" y2="680" stroke="#7300ff" stroke-width="1.1"/>
<line x1="191.6" y1="630" x2="191.6" y2="680" stroke="#7300ff" stroke-width="1.1"/>
<line x1="151.7" y1="477.5" x2="162.7" y2="477.5" stroke="#ffffff" stroke-width="1.2"/>
<line x1="157.2" y1="472.0" x2="157.2" y2="483.0" stroke="#ffffff" stroke-width="1.2"/>
<rect x="155.7" y="476.0" width="3.0" height="3.0" fill="#ffffff"/>
<line x1="152.7" y1="613.5" x2="161.7" y2="613.5" stroke="#ffffff" stroke-width="1.2"/>
<text x="157.2" y="616.5" font-family="Liberation Mono" font-weight="bold" font-size="8" fill="#fff" text-anchor="middle">S</text>
<line x1="167.4" y1="477.5" x2="178.4" y2="477.5" stroke="#ffffff" stroke-width="1.2"/>
<line x1="172.9" y1="472.0" x2="172.9" y2="483.0" stroke="#ffffff" stroke-width="1.2"/>
<rect x="171.4" y="476.0" width="3.0" height="3.0" fill="#ffffff"/>
<line x1="168.4" y1="613.5" x2="177.4" y2="613.5" stroke="#ffffff" stroke-width="1.2"/>
<text x="172.9" y="616.5" font-family="Liberation Mono" font-weight="bold" font-size="8" fill="#fff" text-anchor="middle">D</text>
<line x1="183.1" y1="477.5" x2="194.1" y2="477.5" stroke="#ffffff" stroke-width="1.2"/>
<line x1="188.6" y1="472.0" x2="188.6" y2="483.0" stroke="#ffffff" stroke-width="1.2"/>
<rect x="187.1" y="476.0" width="3.0" height="3.0" fill="#ffffff"/>
<line x1="184.1" y1="613.5" x2="193.1" y2="613.5" stroke="#ffffff" stroke-width="1.2"/>
<text x="188.6" y="616.5" font-family="Liberation Mono" font-weight="bold" font-size="8" fill="#fff" text-anchor="middle">S</text>
<rect x="221.3" y="431" width="139.6" height="115" fill="url(#pd)"/>
<rect x="221.3" y="563" width="139.6" height="78" fill="url(#dy)"/>
<rect x="215.6" y="408.5" width="150.8" height="121" fill="none" stroke="#ff8000" stroke-width="3"/>
<rect x="221.3" y="413.5" width="139.6" height="132" fill="none" stroke="#ffb4dc" stroke-width="1"/>
<line x1="221.3" y1="422.5" x2="360.9" y2="422.5" stroke="#ffb4dc" stroke-width="1"/>
<line x1="221.3" y1="521.5" x2="360.9" y2="521.5" stroke="#ffb4dc" stroke-width="1"/>
<line x1="221.3" y1="524.5" x2="360.9" y2="524.5" stroke="#ffb4dc" stroke-width="1"/>
<rect x="221.3" y="414" width="139.6" height="11" fill="url(#hp)"/>
<rect x="221.3" y="414" width="139.6" height="11" fill="url(#ty)"/>
<rect x="221.0" y="413.6" width="140.3" height="16.7" fill="none" stroke="#ff0000" stroke-width="1.3"/>
<line x1="223.3" y1="425.5" x2="358.9" y2="425.5" stroke="#7300ff" stroke-width="3"/>
<rect x="221.3" y="562.5" width="139.6" height="79" fill="none" stroke="#e6d200" stroke-width="1"/>
<line x1="221.3" y1="583.5" x2="360.9" y2="583.5" stroke="#e6d200" stroke-width="1"/>
<line x1="221.3" y1="586.5" x2="360.9" y2="586.5" stroke="#e6d200" stroke-width="1"/>
<rect x="221.0" y="641.6" width="140.3" height="16.7" fill="none" stroke="#ff0000" stroke-width="1.3"/>
<line x1="221.3" y1="649.5" x2="360.9" y2="649.5" stroke="#e6d200" stroke-width="1"/>
<rect x="222.3" y="645" width="137.6" height="14" fill="url(#hp)"/>
<rect x="222.3" y="645" width="137.6" height="14" fill="url(#ty)"/>
<line x1="222.3" y1="645.5" x2="359.9" y2="645.5" stroke="#7300ff" stroke-width="1.5"/>
<line x1="222.3" y1="658" x2="359.9" y2="658" stroke="#7300ff" stroke-width="1.2"/>
<line x1="223.3" y1="438.5" x2="358.9" y2="438.5" stroke="#00ff00" stroke-width="1"/>
<line x1="223.3" y1="516.5" x2="358.9" y2="516.5" stroke="#00ff00" stroke-width="1"/>
<line x1="223.3" y1="594.5" x2="358.9" y2="594.5" stroke="#00ff00" stroke-width="1"/>
<line x1="223.3" y1="633.5" x2="358.9" y2="633.5" stroke="#00ff00" stroke-width="1"/>
<line x1="235.2" y1="431" x2="235.2" y2="528" stroke="#ffb4dc" stroke-width="0.8"/>
<line x1="235.2" y1="578" x2="235.2" y2="641" stroke="#e6d200" stroke-width="0.8"/>
<line x1="250.9" y1="431" x2="250.9" y2="528" stroke="#ffb4dc" stroke-width="0.8"/>
<line x1="250.9" y1="578" x2="250.9" y2="641" stroke="#e6d200" stroke-width="0.8"/>
<line x1="266.6" y1="431" x2="266.6" y2="528" stroke="#ffb4dc" stroke-width="0.8"/>
<line x1="266.6" y1="578" x2="266.6" y2="641" stroke="#e6d200" stroke-width="0.8"/>
<line x1="282.2" y1="431" x2="282.2" y2="528" stroke="#ffb4dc" stroke-width="0.8"/>
<line x1="282.2" y1="578" x2="282.2" y2="641" stroke="#e6d200" stroke-width="0.8"/>
<line x1="297.9" y1="431" x2="297.9" y2="528" stroke="#ffb4dc" stroke-width="0.8"/>
<line x1="297.9" y1="578" x2="297.9" y2="641" stroke="#e6d200" stroke-width="0.8"/>
<line x1="313.6" y1="431" x2="313.6" y2="528" stroke="#ffb4dc" stroke-width="0.8"/>
<line x1="313.6" y1="578" x2="313.6" y2="641" stroke="#e6d200" stroke-width="0.8"/>
<line x1="329.4" y1="431" x2="329.4" y2="528" stroke="#ffb4dc" stroke-width="0.8"/>
<line x1="329.4" y1="578" x2="329.4" y2="641" stroke="#e6d200" stroke-width="0.8"/>
<line x1="345.1" y1="431" x2="345.1" y2="528" stroke="#ffb4dc" stroke-width="0.8"/>
<line x1="345.1" y1="578" x2="345.1" y2="641" stroke="#e6d200" stroke-width="0.8"/>
<rect x="233.3" y="427" width="115.6" height="10" fill="url(#hr)"/>
<rect x="233.3" y="634" width="115.6" height="10" fill="url(#hr)"/>
<path d="M234.5 540V427H253.5V540H249.0V437H239.0V540Z" fill="url(#hr)"/>
<path d="M239.0 437L244.0 432L249.0 437Z" fill="#000"/>
<path d="M234.5 568V644H253.5V568H249.0V634H239.0V568Z" fill="url(#hr)"/>
<path d="M239.0 634L244.0 639L249.0 634Z" fill="#000"/>
<path d="M265.9 540V427H284.9V540H280.4V437H270.4V540Z" fill="url(#hr)"/>
<path d="M270.4 437L275.4 432L280.4 437Z" fill="#000"/>
<path d="M265.9 568V644H284.9V568H280.4V634H270.4V568Z" fill="url(#hr)"/>
<path d="M270.4 634L275.4 639L280.4 634Z" fill="#000"/>
<path d="M297.3 540V427H316.3V540H311.8V437H301.8V540Z" fill="url(#hr)"/>
<path d="M301.8 437L306.8 432L311.8 437Z" fill="#000"/>
<path d="M297.3 568V644H316.3V568H311.8V634H301.8V568Z" fill="url(#hr)"/>
<path d="M301.8 634L306.8 639L311.8 634Z" fill="#000"/>
<path d="M328.7 540V427H347.7V540H343.2V437H333.2V540Z" fill="url(#hr)"/>
<path d="M333.2 437L338.2 432L343.2 437Z" fill="#000"/>
<path d="M328.7 568V644H347.7V568H343.2V634H333.2V568Z" fill="url(#hr)"/>
<path d="M333.2 634L338.2 639L343.2 634Z" fill="#000"/>
<rect x="221" y="530" width="12.3" height="10" fill="#000"/>
<rect x="221" y="530" width="12.3" height="10" fill="url(#hp)"/>
<line x1="221" y1="530.5" x2="233.3" y2="530.5" stroke="#7300ff" stroke-width="1"/>
<line x1="221" y1="539.5" x2="233.3" y2="539.5" stroke="#7300ff" stroke-width="1"/>
<rect x="233.3" y="530" width="114.6" height="10" fill="url(#hr)"/>
<rect x="233.3" y="530" width="114.6" height="10" fill="url(#hp)"/>
<rect x="233.3" y="530" width="114.6" height="10" fill="url(#dpu)"/>
<rect x="234.3" y="531.0" width="112.6" height="8" fill="none" stroke="#7300ff" stroke-width="2"/>
<rect x="221" y="568" width="12.3" height="10" fill="#000"/>
<rect x="221" y="568" width="12.3" height="10" fill="url(#hp)"/>
<line x1="221" y1="568.5" x2="233.3" y2="568.5" stroke="#7300ff" stroke-width="1"/>
<line x1="221" y1="577.5" x2="233.3" y2="577.5" stroke="#7300ff" stroke-width="1"/>
<rect x="233.3" y="568" width="114.6" height="10" fill="url(#hr)"/>
<rect x="233.3" y="568" width="114.6" height="10" fill="url(#hp)"/>
<rect x="233.3" y="568" width="114.6" height="10" fill="url(#dpu)"/>
<rect x="234.3" y="569.0" width="112.6" height="8" fill="none" stroke="#7300ff" stroke-width="2"/>
<rect x="199" y="530" width="22" height="48" fill="url(#hp)"/>
<rect x="199.7" y="530.6" width="20.7" height="46.7" fill="none" stroke="#7300ff" stroke-width="1.3"/>
<rect x="223.8" y="438.5" width="9.0" height="78" fill="none" stroke="#00ff00" stroke-width="1"/>
<rect x="223.8" y="594.5" width="9.0" height="39" fill="none" stroke="#00ff00" stroke-width="1"/>
<rect x="224.3" y="440" width="8.0" height="75" fill="url(#fi)"/>
<rect x="225.1" y="440.8" width="6.5" height="73.5" fill="none" stroke="#7300ff" stroke-width="1.5"/>
<line x1="228.3" y1="440" x2="228.3" y2="515" stroke="#7300ff" stroke-width="1"/>
<line x1="225.3" y1="392" x2="225.3" y2="440" stroke="#7300ff" stroke-width="1.1"/>
<line x1="228.3" y1="392" x2="228.3" y2="440" stroke="#7300ff" stroke-width="1.1"/>
<line x1="231.3" y1="392" x2="231.3" y2="440" stroke="#7300ff" stroke-width="1.1"/>
<rect x="224.3" y="598" width="8.0" height="32" fill="url(#fi)"/>
<rect x="225.1" y="598.8" width="6.5" height="30.5" fill="none" stroke="#7300ff" stroke-width="1.5"/>
<line x1="228.3" y1="598" x2="228.3" y2="630" stroke="#7300ff" stroke-width="1"/>
<line x1="225.3" y1="630" x2="225.3" y2="680" stroke="#7300ff" stroke-width="1.1"/>
<line x1="228.3" y1="630" x2="228.3" y2="680" stroke="#7300ff" stroke-width="1.1"/>
<line x1="231.3" y1="630" x2="231.3" y2="680" stroke="#7300ff" stroke-width="1.1"/>
<rect x="239.0" y="441" width="10.0" height="74" fill="url(#fd)"/>
<rect x="240.0" y="442.0" width="8.0" height="72" fill="none" stroke="#00ffff" stroke-width="2"/>
<rect x="239.0" y="594" width="10.0" height="36" fill="url(#fd)"/>
<rect x="240.0" y="595.0" width="8.0" height="34" fill="none" stroke="#00ffff" stroke-width="2"/>
<line x1="240.5" y1="441" x2="240.5" y2="630" stroke="#00ffff" stroke-width="1.1"/>
<line x1="242.8" y1="441" x2="242.8" y2="630" stroke="#00ffff" stroke-width="1.1"/>
<line x1="245.2" y1="441" x2="245.2" y2="630" stroke="#00ffff" stroke-width="1.1"/>
<line x1="247.5" y1="441" x2="247.5" y2="630" stroke="#00ffff" stroke-width="1.1"/>
<line x1="240.5" y1="515" x2="247.5" y2="530" stroke="#00ffff" stroke-width="0.8"/>
<line x1="240.5" y1="565" x2="247.5" y2="580" stroke="#00ffff" stroke-width="0.8"/>
<line x1="241.0" y1="641" x2="241.0" y2="664" stroke="#7300ff" stroke-width="1"/>
<line x1="247.0" y1="641" x2="247.0" y2="664" stroke="#7300ff" stroke-width="1"/>
<rect x="255.7" y="440" width="8.0" height="75" fill="url(#fi)"/>
<rect x="256.4" y="440.8" width="6.5" height="73.5" fill="none" stroke="#7300ff" stroke-width="1.5"/>
<line x1="259.7" y1="440" x2="259.7" y2="515" stroke="#7300ff" stroke-width="1"/>
<line x1="256.7" y1="392" x2="256.7" y2="440" stroke="#7300ff" stroke-width="1.1"/>
<line x1="259.7" y1="392" x2="259.7" y2="440" stroke="#7300ff" stroke-width="1.1"/>
<line x1="262.7" y1="392" x2="262.7" y2="440" stroke="#7300ff" stroke-width="1.1"/>
<rect x="255.7" y="598" width="8.0" height="32" fill="url(#fi)"/>
<rect x="256.4" y="598.8" width="6.5" height="30.5" fill="none" stroke="#7300ff" stroke-width="1.5"/>
<line x1="259.7" y1="598" x2="259.7" y2="630" stroke="#7300ff" stroke-width="1"/>
<line x1="256.7" y1="630" x2="256.7" y2="680" stroke="#7300ff" stroke-width="1.1"/>
<line x1="259.7" y1="630" x2="259.7" y2="680" stroke="#7300ff" stroke-width="1.1"/>
<line x1="262.7" y1="630" x2="262.7" y2="680" stroke="#7300ff" stroke-width="1.1"/>
<rect x="270.4" y="441" width="10.0" height="74" fill="url(#fd)"/>
<rect x="271.4" y="442.0" width="8.0" height="72" fill="none" stroke="#00ffff" stroke-width="2"/>
<rect x="270.4" y="594" width="10.0" height="36" fill="url(#fd)"/>
<rect x="271.4" y="595.0" width="8.0" height="34" fill="none" stroke="#00ffff" stroke-width="2"/>
<line x1="271.9" y1="441" x2="271.9" y2="630" stroke="#00ffff" stroke-width="1.1"/>
<line x1="274.2" y1="441" x2="274.2" y2="630" stroke="#00ffff" stroke-width="1.1"/>
<line x1="276.6" y1="441" x2="276.6" y2="630" stroke="#00ffff" stroke-width="1.1"/>
<line x1="278.9" y1="441" x2="278.9" y2="630" stroke="#00ffff" stroke-width="1.1"/>
<line x1="271.9" y1="515" x2="278.9" y2="530" stroke="#00ffff" stroke-width="0.8"/>
<line x1="271.9" y1="565" x2="278.9" y2="580" stroke="#00ffff" stroke-width="0.8"/>
<line x1="272.4" y1="641" x2="272.4" y2="664" stroke="#7300ff" stroke-width="1"/>
<line x1="278.4" y1="641" x2="278.4" y2="664" stroke="#7300ff" stroke-width="1"/>
<rect x="286.6" y="438.5" width="9.0" height="78" fill="none" stroke="#00ff00" stroke-width="1"/>
<rect x="286.6" y="594.5" width="9.0" height="39" fill="none" stroke="#00ff00" stroke-width="1"/>
<rect x="287.1" y="440" width="8.0" height="75" fill="url(#fi)"/>
<rect x="287.9" y="440.8" width="6.5" height="73.5" fill="none" stroke="#7300ff" stroke-width="1.5"/>
<line x1="291.1" y1="440" x2="291.1" y2="515" stroke="#7300ff" stroke-width="1"/>
<line x1="288.1" y1="392" x2="288.1" y2="440" stroke="#7300ff" stroke-width="1.1"/>
<line x1="291.1" y1="392" x2="291.1" y2="440" stroke="#7300ff" stroke-width="1.1"/>
<line x1="294.1" y1="392" x2="294.1" y2="440" stroke="#7300ff" stroke-width="1.1"/>
<rect x="287.1" y="598" width="8.0" height="32" fill="url(#fi)"/>
<rect x="287.9" y="598.8" width="6.5" height="30.5" fill="none" stroke="#7300ff" stroke-width="1.5"/>
<line x1="291.1" y1="598" x2="291.1" y2="630" stroke="#7300ff" stroke-width="1"/>
<line x1="288.1" y1="630" x2="288.1" y2="680" stroke="#7300ff" stroke-width="1.1"/>
<line x1="291.1" y1="630" x2="291.1" y2="680" stroke="#7300ff" stroke-width="1.1"/>
<line x1="294.1" y1="630" x2="294.1" y2="680" stroke="#7300ff" stroke-width="1.1"/>
<rect x="301.8" y="441" width="10.0" height="74" fill="url(#fd)"/>
<rect x="302.8" y="442.0" width="8.0" height="72" fill="none" stroke="#00ffff" stroke-width="2"/>
<rect x="301.8" y="594" width="10.0" height="36" fill="url(#fd)"/>
<rect x="302.8" y="595.0" width="8.0" height="34" fill="none" stroke="#00ffff" stroke-width="2"/>
<line x1="303.3" y1="441" x2="303.3" y2="630" stroke="#00ffff" stroke-width="1.1"/>
<line x1="305.6" y1="441" x2="305.6" y2="630" stroke="#00ffff" stroke-width="1.1"/>
<line x1="308.0" y1="441" x2="308.0" y2="630" stroke="#00ffff" stroke-width="1.1"/>
<line x1="310.3" y1="441" x2="310.3" y2="630" stroke="#00ffff" stroke-width="1.1"/>
<line x1="303.3" y1="515" x2="310.3" y2="530" stroke="#00ffff" stroke-width="0.8"/>
<line x1="303.3" y1="565" x2="310.3" y2="580" stroke="#00ffff" stroke-width="0.8"/>
<line x1="303.8" y1="641" x2="303.8" y2="664" stroke="#7300ff" stroke-width="1"/>
<line x1="309.8" y1="641" x2="309.8" y2="664" stroke="#7300ff" stroke-width="1"/>
<rect x="318.5" y="440" width="8.0" height="75" fill="url(#fi)"/>
<rect x="319.2" y="440.8" width="6.5" height="73.5" fill="none" stroke="#7300ff" stroke-width="1.5"/>
<line x1="322.5" y1="440" x2="322.5" y2="515" stroke="#7300ff" stroke-width="1"/>
<line x1="319.5" y1="392" x2="319.5" y2="440" stroke="#7300ff" stroke-width="1.1"/>
<line x1="322.5" y1="392" x2="322.5" y2="440" stroke="#7300ff" stroke-width="1.1"/>
<line x1="325.5" y1="392" x2="325.5" y2="440" stroke="#7300ff" stroke-width="1.1"/>
<rect x="318.5" y="598" width="8.0" height="32" fill="url(#fi)"/>
<rect x="319.2" y="598.8" width="6.5" height="30.5" fill="none" stroke="#7300ff" stroke-width="1.5"/>
<line x1="322.5" y1="598" x2="322.5" y2="630" stroke="#7300ff" stroke-width="1"/>
<line x1="319.5" y1="630" x2="319.5" y2="680" stroke="#7300ff" stroke-width="1.1"/>
<line x1="322.5" y1="630" x2="322.5" y2="680" stroke="#7300ff" stroke-width="1.1"/>
<line x1="325.5" y1="630" x2="325.5" y2="680" stroke="#7300ff" stroke-width="1.1"/>
<rect x="333.2" y="441" width="10.0" height="74" fill="url(#fd)"/>
<rect x="334.2" y="442.0" width="8.0" height="72" fill="none" stroke="#00ffff" stroke-width="2"/>
<rect x="333.2" y="594" width="10.0" height="36" fill="url(#fd)"/>
<rect x="334.2" y="595.0" width="8.0" height="34" fill="none" stroke="#00ffff" stroke-width="2"/>
<line x1="334.7" y1="441" x2="334.7" y2="630" stroke="#00ffff" stroke-width="1.1"/>
<line x1="337.0" y1="441" x2="337.0" y2="630" stroke="#00ffff" stroke-width="1.1"/>
<line x1="339.4" y1="441" x2="339.4" y2="630" stroke="#00ffff" stroke-width="1.1"/>
<line x1="341.7" y1="441" x2="341.7" y2="630" stroke="#00ffff" stroke-width="1.1"/>
<line x1="334.7" y1="515" x2="341.7" y2="530" stroke="#00ffff" stroke-width="0.8"/>
<line x1="334.7" y1="565" x2="341.7" y2="580" stroke="#00ffff" stroke-width="0.8"/>
<line x1="335.2" y1="641" x2="335.2" y2="664" stroke="#7300ff" stroke-width="1"/>
<line x1="341.2" y1="641" x2="341.2" y2="664" stroke="#7300ff" stroke-width="1"/>
<rect x="349.4" y="438.5" width="9.0" height="78" fill="none" stroke="#00ff00" stroke-width="1"/>
<rect x="349.4" y="594.5" width="9.0" height="39" fill="none" stroke="#00ff00" stroke-width="1"/>
<rect x="349.9" y="440" width="8.0" height="75" fill="url(#fi)"/>
<rect x="350.6" y="440.8" width="6.5" height="73.5" fill="none" stroke="#7300ff" stroke-width="1.5"/>
<line x1="353.9" y1="440" x2="353.9" y2="515" stroke="#7300ff" stroke-width="1"/>
<line x1="350.9" y1="392" x2="350.9" y2="440" stroke="#7300ff" stroke-width="1.1"/>
<line x1="353.9" y1="392" x2="353.9" y2="440" stroke="#7300ff" stroke-width="1.1"/>
<line x1="356.9" y1="392" x2="356.9" y2="440" stroke="#7300ff" stroke-width="1.1"/>
<rect x="349.9" y="598" width="8.0" height="32" fill="url(#fi)"/>
<rect x="350.6" y="598.8" width="6.5" height="30.5" fill="none" stroke="#7300ff" stroke-width="1.5"/>
<line x1="353.9" y1="598" x2="353.9" y2="630" stroke="#7300ff" stroke-width="1"/>
<line x1="350.9" y1="630" x2="350.9" y2="680" stroke="#7300ff" stroke-width="1.1"/>
<line x1="353.9" y1="630" x2="353.9" y2="680" stroke="#7300ff" stroke-width="1.1"/>
<line x1="356.9" y1="630" x2="356.9" y2="680" stroke="#7300ff" stroke-width="1.1"/>
<rect x="277.4" y="408" width="2.5" height="121" fill="#ff8000"/>
<rect x="302.8" y="408" width="2.5" height="121" fill="#ff8000"/>
<line x1="222.8" y1="477.5" x2="233.8" y2="477.5" stroke="#ffffff" stroke-width="1.2"/>
<line x1="228.3" y1="472.0" x2="228.3" y2="483.0" stroke="#ffffff" stroke-width="1.2"/>
<rect x="226.8" y="476.0" width="3.0" height="3.0" fill="#ffffff"/>
<line x1="223.8" y1="613.5" x2="232.8" y2="613.5" stroke="#ffffff" stroke-width="1.2"/>
<text x="228.3" y="616.5" font-family="Liberation Mono" font-weight="bold" font-size="8" fill="#fff" text-anchor="middle">S</text>
<line x1="238.5" y1="477.5" x2="249.5" y2="477.5" stroke="#ffffff" stroke-width="1.2"/>
<line x1="244.0" y1="472.0" x2="244.0" y2="483.0" stroke="#ffffff" stroke-width="1.2"/>
<rect x="242.5" y="476.0" width="3.0" height="3.0" fill="#ffffff"/>
<line x1="239.5" y1="613.5" x2="248.5" y2="613.5" stroke="#ffffff" stroke-width="1.2"/>
<text x="244.0" y="616.5" font-family="Liberation Mono" font-weight="bold" font-size="8" fill="#fff" text-anchor="middle">D</text>
<line x1="254.2" y1="477.5" x2="265.2" y2="477.5" stroke="#ffffff" stroke-width="1.2"/>
<line x1="259.7" y1="472.0" x2="259.7" y2="483.0" stroke="#ffffff" stroke-width="1.2"/>
<rect x="258.2" y="476.0" width="3.0" height="3.0" fill="#ffffff"/>
<line x1="255.2" y1="613.5" x2="264.2" y2="613.5" stroke="#ffffff" stroke-width="1.2"/>
<text x="259.7" y="616.5" font-family="Liberation Mono" font-weight="bold" font-size="8" fill="#fff" text-anchor="middle">S</text>
<line x1="269.9" y1="477.5" x2="280.9" y2="477.5" stroke="#ffffff" stroke-width="1.2"/>
<line x1="275.4" y1="472.0" x2="275.4" y2="483.0" stroke="#ffffff" stroke-width="1.2"/>
<rect x="273.9" y="476.0" width="3.0" height="3.0" fill="#ffffff"/>
<line x1="270.9" y1="613.5" x2="279.9" y2="613.5" stroke="#ffffff" stroke-width="1.2"/>
<text x="275.4" y="616.5" font-family="Liberation Mono" font-weight="bold" font-size="8" fill="#fff" text-anchor="middle">D</text>
<line x1="285.6" y1="477.5" x2="296.6" y2="477.5" stroke="#ffffff" stroke-width="1.2"/>
<line x1="291.1" y1="472.0" x2="291.1" y2="483.0" stroke="#ffffff" stroke-width="1.2"/>
<rect x="289.6" y="476.0" width="3.0" height="3.0" fill="#ffffff"/>
<line x1="286.6" y1="613.5" x2="295.6" y2="613.5" stroke="#ffffff" stroke-width="1.2"/>
<text x="291.1" y="616.5" font-family="Liberation Mono" font-weight="bold" font-size="8" fill="#fff" text-anchor="middle">S</text>
<line x1="301.3" y1="477.5" x2="312.3" y2="477.5" stroke="#ffffff" stroke-width="1.2"/>
<line x1="306.8" y1="472.0" x2="306.8" y2="483.0" stroke="#ffffff" stroke-width="1.2"/>
<rect x="305.3" y="476.0" width="3.0" height="3.0" fill="#ffffff"/>
<line x1="302.3" y1="613.5" x2="311.3" y2="613.5" stroke="#ffffff" stroke-width="1.2"/>
<text x="306.8" y="616.5" font-family="Liberation Mono" font-weight="bold" font-size="8" fill="#fff" text-anchor="middle">D</text>
<line x1="317.0" y1="477.5" x2="328.0" y2="477.5" stroke="#ffffff" stroke-width="1.2"/>
<line x1="322.5" y1="472.0" x2="322.5" y2="483.0" stroke="#ffffff" stroke-width="1.2"/>
<rect x="321.0" y="476.0" width="3.0" height="3.0" fill="#ffffff"/>
<line x1="318.0" y1="613.5" x2="327.0" y2="613.5" stroke="#ffffff" stroke-width="1.2"/>
<text x="322.5" y="616.5" font-family="Liberation Mono" font-weight="bold" font-size="8" fill="#fff" text-anchor="middle">S</text>
<line x1="332.7" y1="477.5" x2="343.7" y2="477.5" stroke="#ffffff" stroke-width="1.2"/>
<line x1="338.2" y1="472.0" x2="338.2" y2="483.0" stroke="#ffffff" stroke-width="1.2"/>
<rect x="336.7" y="476.0" width="3.0" height="3.0" fill="#ffffff"/>
<line x1="333.7" y1="613.5" x2="342.7" y2="613.5" stroke="#ffffff" stroke-width="1.2"/>
<text x="338.2" y="616.5" font-family="Liberation Mono" font-weight="bold" font-size="8" fill="#fff" text-anchor="middle">D</text>
<line x1="348.4" y1="477.5" x2="359.4" y2="477.5" stroke="#ffffff" stroke-width="1.2"/>
<line x1="353.9" y1="472.0" x2="353.9" y2="483.0" stroke="#ffffff" stroke-width="1.2"/>
<rect x="352.4" y="476.0" width="3.0" height="3.0" fill="#ffffff"/>
<line x1="349.4" y1="613.5" x2="358.4" y2="613.5" stroke="#ffffff" stroke-width="1.2"/>
<text x="353.9" y="616.5" font-family="Liberation Mono" font-weight="bold" font-size="8" fill="#fff" text-anchor="middle">S</text>
<rect x="385.5" y="431" width="265.2" height="115" fill="url(#pd)"/>
<rect x="385.5" y="563" width="265.2" height="78" fill="url(#dy)"/>
<rect x="379.8" y="408.5" width="276.4" height="121" fill="none" stroke="#ff8000" stroke-width="3"/>
<rect x="385.5" y="413.5" width="265.2" height="132" fill="none" stroke="#ffb4dc" stroke-width="1"/>
<line x1="385.5" y1="422.5" x2="650.7" y2="422.5" stroke="#ffb4dc" stroke-width="1"/>
<line x1="385.5" y1="521.5" x2="650.7" y2="521.5" stroke="#ffb4dc" stroke-width="1"/>
<line x1="385.5" y1="524.5" x2="650.7" y2="524.5" stroke="#ffb4dc" stroke-width="1"/>
<rect x="385.5" y="414" width="265.2" height="11" fill="url(#hp)"/>
<rect x="385.5" y="414" width="265.2" height="11" fill="url(#ty)"/>
<rect x="385.1" y="413.6" width="265.9" height="16.7" fill="none" stroke="#ff0000" stroke-width="1.3"/>
<line x1="387.5" y1="425.5" x2="648.7" y2="425.5" stroke="#7300ff" stroke-width="3"/>
<rect x="385.5" y="562.5" width="265.2" height="79" fill="none" stroke="#e6d200" stroke-width="1"/>
<line x1="385.5" y1="583.5" x2="650.7" y2="583.5" stroke="#e6d200" stroke-width="1"/>
<line x1="385.5" y1="586.5" x2="650.7" y2="586.5" stroke="#e6d200" stroke-width="1"/>
<rect x="385.1" y="641.6" width="265.9" height="16.7" fill="none" stroke="#ff0000" stroke-width="1.3"/>
<line x1="385.5" y1="649.5" x2="650.7" y2="649.5" stroke="#e6d200" stroke-width="1"/>
<rect x="386.5" y="645" width="263.2" height="14" fill="url(#hp)"/>
<rect x="386.5" y="645" width="263.2" height="14" fill="url(#ty)"/>
<line x1="386.5" y1="645.5" x2="649.7" y2="645.5" stroke="#7300ff" stroke-width="1.5"/>
<line x1="386.5" y1="658" x2="649.7" y2="658" stroke="#7300ff" stroke-width="1.2"/>
<line x1="387.5" y1="438.5" x2="648.7" y2="438.5" stroke="#00ff00" stroke-width="1"/>
<line x1="387.5" y1="516.5" x2="648.7" y2="516.5" stroke="#00ff00" stroke-width="1"/>
<line x1="387.5" y1="594.5" x2="648.7" y2="594.5" stroke="#00ff00" stroke-width="1"/>
<line x1="387.5" y1="633.5" x2="648.7" y2="633.5" stroke="#00ff00" stroke-width="1"/>
<line x1="399.4" y1="431" x2="399.4" y2="528" stroke="#ffb4dc" stroke-width="0.8"/>
<line x1="399.4" y1="578" x2="399.4" y2="641" stroke="#e6d200" stroke-width="0.8"/>
<line x1="415.1" y1="431" x2="415.1" y2="528" stroke="#ffb4dc" stroke-width="0.8"/>
<line x1="415.1" y1="578" x2="415.1" y2="641" stroke="#e6d200" stroke-width="0.8"/>
<line x1="430.8" y1="431" x2="430.8" y2="528" stroke="#ffb4dc" stroke-width="0.8"/>
<line x1="430.8" y1="578" x2="430.8" y2="641" stroke="#e6d200" stroke-width="0.8"/>
<line x1="446.4" y1="431" x2="446.4" y2="528" stroke="#ffb4dc" stroke-width="0.8"/>
<line x1="446.4" y1="578" x2="446.4" y2="641" stroke="#e6d200" stroke-width="0.8"/>
<line x1="462.1" y1="431" x2="462.1" y2="528" stroke="#ffb4dc" stroke-width="0.8"/>
<line x1="462.1" y1="578" x2="462.1" y2="641" stroke="#e6d200" stroke-width="0.8"/>
<line x1="477.9" y1="431" x2="477.9" y2="528" stroke="#ffb4dc" stroke-width="0.8"/>
<line x1="477.9" y1="578" x2="477.9" y2="641" stroke="#e6d200" stroke-width="0.8"/>
<line x1="493.6" y1="431" x2="493.6" y2="528" stroke="#ffb4dc" stroke-width="0.8"/>
<line x1="493.6" y1="578" x2="493.6" y2="641" stroke="#e6d200" stroke-width="0.8"/>
<line x1="509.2" y1="431" x2="509.2" y2="528" stroke="#ffb4dc" stroke-width="0.8"/>
<line x1="509.2" y1="578" x2="509.2" y2="641" stroke="#e6d200" stroke-width="0.8"/>
<line x1="525.0" y1="431" x2="525.0" y2="528" stroke="#ffb4dc" stroke-width="0.8"/>
<line x1="525.0" y1="578" x2="525.0" y2="641" stroke="#e6d200" stroke-width="0.8"/>
<line x1="540.6" y1="431" x2="540.6" y2="528" stroke="#ffb4dc" stroke-width="0.8"/>
<line x1="540.6" y1="578" x2="540.6" y2="641" stroke="#e6d200" stroke-width="0.8"/>
<line x1="556.4" y1="431" x2="556.4" y2="528" stroke="#ffb4dc" stroke-width="0.8"/>
<line x1="556.4" y1="578" x2="556.4" y2="641" stroke="#e6d200" stroke-width="0.8"/>
<line x1="572.0" y1="431" x2="572.0" y2="528" stroke="#ffb4dc" stroke-width="0.8"/>
<line x1="572.0" y1="578" x2="572.0" y2="641" stroke="#e6d200" stroke-width="0.8"/>
<line x1="587.8" y1="431" x2="587.8" y2="528" stroke="#ffb4dc" stroke-width="0.8"/>
<line x1="587.8" y1="578" x2="587.8" y2="641" stroke="#e6d200" stroke-width="0.8"/>
<line x1="603.5" y1="431" x2="603.5" y2="528" stroke="#ffb4dc" stroke-width="0.8"/>
<line x1="603.5" y1="578" x2="603.5" y2="641" stroke="#e6d200" stroke-width="0.8"/>
<line x1="619.1" y1="431" x2="619.1" y2="528" stroke="#ffb4dc" stroke-width="0.8"/>
<line x1="619.1" y1="578" x2="619.1" y2="641" stroke="#e6d200" stroke-width="0.8"/>
<line x1="634.9" y1="431" x2="634.9" y2="528" stroke="#ffb4dc" stroke-width="0.8"/>
<line x1="634.9" y1="578" x2="634.9" y2="641" stroke="#e6d200" stroke-width="0.8"/>
<rect x="397.5" y="427" width="241.2" height="10" fill="url(#hr)"/>
<rect x="397.5" y="634" width="241.2" height="10" fill="url(#hr)"/>
<path d="M398.7 540V427H417.7V540H413.2V437H403.2V540Z" fill="url(#hr)"/>
<path d="M403.2 437L408.2 432L413.2 437Z" fill="#000"/>
<path d="M398.7 568V644H417.7V568H413.2V634H403.2V568Z" fill="url(#hr)"/>
<path d="M403.2 634L408.2 639L413.2 634Z" fill="#000"/>
<path d="M430.1 540V427H449.1V540H444.6V437H434.6V540Z" fill="url(#hr)"/>
<path d="M434.6 437L439.6 432L444.6 437Z" fill="#000"/>
<path d="M430.1 568V644H449.1V568H444.6V634H434.6V568Z" fill="url(#hr)"/>
<path d="M434.6 634L439.6 639L444.6 634Z" fill="#000"/>
<path d="M461.5 540V427H480.5V540H476.0V437H466.0V540Z" fill="url(#hr)"/>
<path d="M466.0 437L471.0 432L476.0 437Z" fill="#000"/>
<path d="M461.5 568V644H480.5V568H476.0V634H466.0V568Z" fill="url(#hr)"/>
<path d="M466.0 634L471.0 639L476.0 634Z" fill="#000"/>
<path d="M492.9 540V427H511.9V540H507.4V437H497.4V540Z" fill="url(#hr)"/>
<path d="M497.4 437L502.4 432L507.4 437Z" fill="#000"/>
<path d="M492.9 568V644H511.9V568H507.4V634H497.4V568Z" fill="url(#hr)"/>
<path d="M497.4 634L502.4 639L507.4 634Z" fill="#000"/>
<path d="M524.3 540V427H543.3V540H538.8V437H528.8V540Z" fill="url(#hr)"/>
<path d="M528.8 437L533.8 432L538.8 437Z" fill="#000"/>
<path d="M524.3 568V644H543.3V568H538.8V634H528.8V568Z" fill="url(#hr)"/>
<path d="M528.8 634L533.8 639L538.8 634Z" fill="#000"/>
<path d="M555.7 540V427H574.7V540H570.2V437H560.2V540Z" fill="url(#hr)"/>
<path d="M560.2 437L565.2 432L570.2 437Z" fill="#000"/>
<path d="M555.7 568V644H574.7V568H570.2V634H560.2V568Z" fill="url(#hr)"/>
<path d="M560.2 634L565.2 639L570.2 634Z" fill="#000"/>
<path d="M587.1 540V427H606.1V540H601.6V437H591.6V540Z" fill="url(#hr)"/>
<path d="M591.6 437L596.6 432L601.6 437Z" fill="#000"/>
<path d="M587.1 568V644H606.1V568H601.6V634H591.6V568Z" fill="url(#hr)"/>
<path d="M591.6 634L596.6 639L601.6 634Z" fill="#000"/>
<path d="M618.5 540V427H637.5V540H633.0V437H623.0V540Z" fill="url(#hr)"/>
<path d="M623.0 437L628.0 432L633.0 437Z" fill="#000"/>
<path d="M618.5 568V644H637.5V568H633.0V634H623.0V568Z" fill="url(#hr)"/>
<path d="M623.0 634L628.0 639L633.0 634Z" fill="#000"/>
<rect x="385" y="530" width="12.5" height="10" fill="#000"/>
<rect x="385" y="530" width="12.5" height="10" fill="url(#hp)"/>
<line x1="385" y1="530.5" x2="397.5" y2="530.5" stroke="#7300ff" stroke-width="1"/>
<line x1="385" y1="539.5" x2="397.5" y2="539.5" stroke="#7300ff" stroke-width="1"/>
<rect x="397.5" y="530" width="240.2" height="10" fill="url(#hr)"/>
<rect x="397.5" y="530" width="240.2" height="10" fill="url(#hp)"/>
<rect x="397.5" y="530" width="240.2" height="10" fill="url(#dpu)"/>
<rect x="398.5" y="531.0" width="238.2" height="8" fill="none" stroke="#7300ff" stroke-width="2"/>
<rect x="385" y="568" width="12.5" height="10" fill="#000"/>
<rect x="385" y="568" width="12.5" height="10" fill="url(#hp)"/>
<line x1="385" y1="568.5" x2="397.5" y2="568.5" stroke="#7300ff" stroke-width="1"/>
<line x1="385" y1="577.5" x2="397.5" y2="577.5" stroke="#7300ff" stroke-width="1"/>
<rect x="397.5" y="568" width="240.2" height="10" fill="url(#hr)"/>
<rect x="397.5" y="568" width="240.2" height="10" fill="url(#hp)"/>
<rect x="397.5" y="568" width="240.2" height="10" fill="url(#dpu)"/>
<rect x="398.5" y="569.0" width="238.2" height="8" fill="none" stroke="#7300ff" stroke-width="2"/>
<rect x="363" y="530" width="22" height="48" fill="url(#hp)"/>
<rect x="363.6" y="530.6" width="20.7" height="46.7" fill="none" stroke="#7300ff" stroke-width="1.3"/>
<rect x="388.0" y="438.5" width="9.0" height="78" fill="none" stroke="#00ff00" stroke-width="1"/>
<rect x="388.0" y="594.5" width="9.0" height="39" fill="none" stroke="#00ff00" stroke-width="1"/>
<rect x="388.5" y="440" width="8.0" height="75" fill="url(#fi)"/>
<rect x="389.2" y="440.8" width="6.5" height="73.5" fill="none" stroke="#7300ff" stroke-width="1.5"/>
<line x1="392.5" y1="440" x2="392.5" y2="515" stroke="#7300ff" stroke-width="1"/>
<line x1="389.5" y1="392" x2="389.5" y2="440" stroke="#7300ff" stroke-width="1.1"/>
<line x1="392.5" y1="392" x2="392.5" y2="440" stroke="#7300ff" stroke-width="1.1"/>
<line x1="395.5" y1="392" x2="395.5" y2="440" stroke="#7300ff" stroke-width="1.1"/>
<rect x="388.5" y="598" width="8.0" height="32" fill="url(#fi)"/>
<rect x="389.2" y="598.8" width="6.5" height="30.5" fill="none" stroke="#7300ff" stroke-width="1.5"/>
<line x1="392.5" y1="598" x2="392.5" y2="630" stroke="#7300ff" stroke-width="1"/>
<line x1="389.5" y1="630" x2="389.5" y2="680" stroke="#7300ff" stroke-width="1.1"/>
<line x1="392.5" y1="630" x2="392.5" y2="680" stroke="#7300ff" stroke-width="1.1"/>
<line x1="395.5" y1="630" x2="395.5" y2="680" stroke="#7300ff" stroke-width="1.1"/>
<rect x="403.2" y="441" width="10.0" height="74" fill="url(#fd)"/>
<rect x="404.2" y="442.0" width="8.0" height="72" fill="none" stroke="#00ffff" stroke-width="2"/>
<rect x="403.2" y="594" width="10.0" height="36" fill="url(#fd)"/>
<rect x="404.2" y="595.0" width="8.0" height="34" fill="none" stroke="#00ffff" stroke-width="2"/>
<line x1="404.7" y1="441" x2="404.7" y2="630" stroke="#00ffff" stroke-width="1.1"/>
<line x1="407.0" y1="441" x2="407.0" y2="630" stroke="#00ffff" stroke-width="1.1"/>
<line x1="409.4" y1="441" x2="409.4" y2="630" stroke="#00ffff" stroke-width="1.1"/>
<line x1="411.7" y1="441" x2="411.7" y2="630" stroke="#00ffff" stroke-width="1.1"/>
<line x1="404.7" y1="515" x2="411.7" y2="530" stroke="#00ffff" stroke-width="0.8"/>
<line x1="404.7" y1="565" x2="411.7" y2="580" stroke="#00ffff" stroke-width="0.8"/>
<line x1="405.2" y1="641" x2="405.2" y2="664" stroke="#7300ff" stroke-width="1"/>
<line x1="411.2" y1="641" x2="411.2" y2="664" stroke="#7300ff" stroke-width="1"/>
<rect x="419.9" y="440" width="8.0" height="75" fill="url(#fi)"/>
<rect x="420.6" y="440.8" width="6.5" height="73.5" fill="none" stroke="#7300ff" stroke-width="1.5"/>
<line x1="423.9" y1="440" x2="423.9" y2="515" stroke="#7300ff" stroke-width="1"/>
<line x1="420.9" y1="392" x2="420.9" y2="440" stroke="#7300ff" stroke-width="1.1"/>
<line x1="423.9" y1="392" x2="423.9" y2="440" stroke="#7300ff" stroke-width="1.1"/>
<line x1="426.9" y1="392" x2="426.9" y2="440" stroke="#7300ff" stroke-width="1.1"/>
<rect x="419.9" y="598" width="8.0" height="32" fill="url(#fi)"/>
<rect x="420.6" y="598.8" width="6.5" height="30.5" fill="none" stroke="#7300ff" stroke-width="1.5"/>
<line x1="423.9" y1="598" x2="423.9" y2="630" stroke="#7300ff" stroke-width="1"/>
<line x1="420.9" y1="630" x2="420.9" y2="680" stroke="#7300ff" stroke-width="1.1"/>
<line x1="423.9" y1="630" x2="423.9" y2="680" stroke="#7300ff" stroke-width="1.1"/>
<line x1="426.9" y1="630" x2="426.9" y2="680" stroke="#7300ff" stroke-width="1.1"/>
<rect x="434.6" y="441" width="10.0" height="74" fill="url(#fd)"/>
<rect x="435.6" y="442.0" width="8.0" height="72" fill="none" stroke="#00ffff" stroke-width="2"/>
<rect x="434.6" y="594" width="10.0" height="36" fill="url(#fd)"/>
<rect x="435.6" y="595.0" width="8.0" height="34" fill="none" stroke="#00ffff" stroke-width="2"/>
<line x1="436.1" y1="441" x2="436.1" y2="630" stroke="#00ffff" stroke-width="1.1"/>
<line x1="438.4" y1="441" x2="438.4" y2="630" stroke="#00ffff" stroke-width="1.1"/>
<line x1="440.8" y1="441" x2="440.8" y2="630" stroke="#00ffff" stroke-width="1.1"/>
<line x1="443.1" y1="441" x2="443.1" y2="630" stroke="#00ffff" stroke-width="1.1"/>
<line x1="436.1" y1="515" x2="443.1" y2="530" stroke="#00ffff" stroke-width="0.8"/>
<line x1="436.1" y1="565" x2="443.1" y2="580" stroke="#00ffff" stroke-width="0.8"/>
<line x1="436.6" y1="641" x2="436.6" y2="664" stroke="#7300ff" stroke-width="1"/>
<line x1="442.6" y1="641" x2="442.6" y2="664" stroke="#7300ff" stroke-width="1"/>
<rect x="450.8" y="438.5" width="9.0" height="78" fill="none" stroke="#00ff00" stroke-width="1"/>
<rect x="450.8" y="594.5" width="9.0" height="39" fill="none" stroke="#00ff00" stroke-width="1"/>
<rect x="451.3" y="440" width="8.0" height="75" fill="url(#fi)"/>
<rect x="452.1" y="440.8" width="6.5" height="73.5" fill="none" stroke="#7300ff" stroke-width="1.5"/>
<line x1="455.3" y1="440" x2="455.3" y2="515" stroke="#7300ff" stroke-width="1"/>
<line x1="452.3" y1="392" x2="452.3" y2="440" stroke="#7300ff" stroke-width="1.1"/>
<line x1="455.3" y1="392" x2="455.3" y2="440" stroke="#7300ff" stroke-width="1.1"/>
<line x1="458.3" y1="392" x2="458.3" y2="440" stroke="#7300ff" stroke-width="1.1"/>
<rect x="451.3" y="598" width="8.0" height="32" fill="url(#fi)"/>
<rect x="452.1" y="598.8" width="6.5" height="30.5" fill="none" stroke="#7300ff" stroke-width="1.5"/>
<line x1="455.3" y1="598" x2="455.3" y2="630" stroke="#7300ff" stroke-width="1"/>
<line x1="452.3" y1="630" x2="452.3" y2="680" stroke="#7300ff" stroke-width="1.1"/>
<line x1="455.3" y1="630" x2="455.3" y2="680" stroke="#7300ff" stroke-width="1.1"/>
<line x1="458.3" y1="630" x2="458.3" y2="680" stroke="#7300ff" stroke-width="1.1"/>
<rect x="466.0" y="441" width="10.0" height="74" fill="url(#fd)"/>
<rect x="467.0" y="442.0" width="8.0" height="72" fill="none" stroke="#00ffff" stroke-width="2"/>
<rect x="466.0" y="594" width="10.0" height="36" fill="url(#fd)"/>
<rect x="467.0" y="595.0" width="8.0" height="34" fill="none" stroke="#00ffff" stroke-width="2"/>
<line x1="467.5" y1="441" x2="467.5" y2="630" stroke="#00ffff" stroke-width="1.1"/>
<line x1="469.8" y1="441" x2="469.8" y2="630" stroke="#00ffff" stroke-width="1.1"/>
<line x1="472.2" y1="441" x2="472.2" y2="630" stroke="#00ffff" stroke-width="1.1"/>
<line x1="474.5" y1="441" x2="474.5" y2="630" stroke="#00ffff" stroke-width="1.1"/>
<line x1="467.5" y1="515" x2="474.5" y2="530" stroke="#00ffff" stroke-width="0.8"/>
<line x1="467.5" y1="565" x2="474.5" y2="580" stroke="#00ffff" stroke-width="0.8"/>
<line x1="468.0" y1="641" x2="468.0" y2="664" stroke="#7300ff" stroke-width="1"/>
<line x1="474.0" y1="641" x2="474.0" y2="664" stroke="#7300ff" stroke-width="1"/>
<rect x="482.7" y="440" width="8.0" height="75" fill="url(#fi)"/>
<rect x="483.4" y="440.8" width="6.5" height="73.5" fill="none" stroke="#7300ff" stroke-width="1.5"/>
<line x1="486.7" y1="440" x2="486.7" y2="515" stroke="#7300ff" stroke-width="1"/>
<line x1="483.7" y1="392" x2="483.7" y2="440" stroke="#7300ff" stroke-width="1.1"/>
<line x1="486.7" y1="392" x2="486.7" y2="440" stroke="#7300ff" stroke-width="1.1"/>
<line x1="489.7" y1="392" x2="489.7" y2="440" stroke="#7300ff" stroke-width="1.1"/>
<rect x="482.7" y="598" width="8.0" height="32" fill="url(#fi)"/>
<rect x="483.4" y="598.8" width="6.5" height="30.5" fill="none" stroke="#7300ff" stroke-width="1.5"/>
<line x1="486.7" y1="598" x2="486.7" y2="630" stroke="#7300ff" stroke-width="1"/>
<line x1="483.7" y1="630" x2="483.7" y2="680" stroke="#7300ff" stroke-width="1.1"/>
<line x1="486.7" y1="630" x2="486.7" y2="680" stroke="#7300ff" stroke-width="1.1"/>
<line x1="489.7" y1="630" x2="489.7" y2="680" stroke="#7300ff" stroke-width="1.1"/>
<rect x="497.4" y="441" width="10.0" height="74" fill="url(#fd)"/>
<rect x="498.4" y="442.0" width="8.0" height="72" fill="none" stroke="#00ffff" stroke-width="2"/>
<rect x="497.4" y="594" width="10.0" height="36" fill="url(#fd)"/>
<rect x="498.4" y="595.0" width="8.0" height="34" fill="none" stroke="#00ffff" stroke-width="2"/>
<line x1="498.9" y1="441" x2="498.9" y2="630" stroke="#00ffff" stroke-width="1.1"/>
<line x1="501.2" y1="441" x2="501.2" y2="630" stroke="#00ffff" stroke-width="1.1"/>
<line x1="503.6" y1="441" x2="503.6" y2="630" stroke="#00ffff" stroke-width="1.1"/>
<line x1="505.9" y1="441" x2="505.9" y2="630" stroke="#00ffff" stroke-width="1.1"/>
<line x1="498.9" y1="515" x2="505.9" y2="530" stroke="#00ffff" stroke-width="0.8"/>
<line x1="498.9" y1="565" x2="505.9" y2="580" stroke="#00ffff" stroke-width="0.8"/>
<line x1="499.4" y1="641" x2="499.4" y2="664" stroke="#7300ff" stroke-width="1"/>
<line x1="505.4" y1="641" x2="505.4" y2="664" stroke="#7300ff" stroke-width="1"/>
<rect x="513.6" y="438.5" width="9.0" height="78" fill="none" stroke="#00ff00" stroke-width="1"/>
<rect x="513.6" y="594.5" width="9.0" height="39" fill="none" stroke="#00ff00" stroke-width="1"/>
<rect x="514.1" y="440" width="8.0" height="75" fill="url(#fi)"/>
<rect x="514.9" y="440.8" width="6.5" height="73.5" fill="none" stroke="#7300ff" stroke-width="1.5"/>
<line x1="518.1" y1="440" x2="518.1" y2="515" stroke="#7300ff" stroke-width="1"/>
<line x1="515.1" y1="392" x2="515.1" y2="440" stroke="#7300ff" stroke-width="1.1"/>
<line x1="518.1" y1="392" x2="518.1" y2="440" stroke="#7300ff" stroke-width="1.1"/>
<line x1="521.1" y1="392" x2="521.1" y2="440" stroke="#7300ff" stroke-width="1.1"/>
<rect x="514.1" y="598" width="8.0" height="32" fill="url(#fi)"/>
<rect x="514.9" y="598.8" width="6.5" height="30.5" fill="none" stroke="#7300ff" stroke-width="1.5"/>
<line x1="518.1" y1="598" x2="518.1" y2="630" stroke="#7300ff" stroke-width="1"/>
<line x1="515.1" y1="630" x2="515.1" y2="680" stroke="#7300ff" stroke-width="1.1"/>
<line x1="518.1" y1="630" x2="518.1" y2="680" stroke="#7300ff" stroke-width="1.1"/>
<line x1="521.1" y1="630" x2="521.1" y2="680" stroke="#7300ff" stroke-width="1.1"/>
<rect x="528.8" y="441" width="10.0" height="74" fill="url(#fd)"/>
<rect x="529.8" y="442.0" width="8.0" height="72" fill="none" stroke="#00ffff" stroke-width="2"/>
<rect x="528.8" y="594" width="10.0" height="36" fill="url(#fd)"/>
<rect x="529.8" y="595.0" width="8.0" height="34" fill="none" stroke="#00ffff" stroke-width="2"/>
<line x1="530.3" y1="441" x2="530.3" y2="630" stroke="#00ffff" stroke-width="1.1"/>
<line x1="532.6" y1="441" x2="532.6" y2="630" stroke="#00ffff" stroke-width="1.1"/>
<line x1="535.0" y1="441" x2="535.0" y2="630" stroke="#00ffff" stroke-width="1.1"/>
<line x1="537.3" y1="441" x2="537.3" y2="630" stroke="#00ffff" stroke-width="1.1"/>
<line x1="530.3" y1="515" x2="537.3" y2="530" stroke="#00ffff" stroke-width="0.8"/>
<line x1="530.3" y1="565" x2="537.3" y2="580" stroke="#00ffff" stroke-width="0.8"/>
<line x1="530.8" y1="641" x2="530.8" y2="664" stroke="#7300ff" stroke-width="1"/>
<line x1="536.8" y1="641" x2="536.8" y2="664" stroke="#7300ff" stroke-width="1"/>
<rect x="545.5" y="440" width="8.0" height="75" fill="url(#fi)"/>
<rect x="546.2" y="440.8" width="6.5" height="73.5" fill="none" stroke="#7300ff" stroke-width="1.5"/>
<line x1="549.5" y1="440" x2="549.5" y2="515" stroke="#7300ff" stroke-width="1"/>
<line x1="546.5" y1="392" x2="546.5" y2="440" stroke="#7300ff" stroke-width="1.1"/>
<line x1="549.5" y1="392" x2="549.5" y2="440" stroke="#7300ff" stroke-width="1.1"/>
<line x1="552.5" y1="392" x2="552.5" y2="440" stroke="#7300ff" stroke-width="1.1"/>
<rect x="545.5" y="598" width="8.0" height="32" fill="url(#fi)"/>
<rect x="546.2" y="598.8" width="6.5" height="30.5" fill="none" stroke="#7300ff" stroke-width="1.5"/>
<line x1="549.5" y1="598" x2="549.5" y2="630" stroke="#7300ff" stroke-width="1"/>
<line x1="546.5" y1="630" x2="546.5" y2="680" stroke="#7300ff" stroke-width="1.1"/>
<line x1="549.5" y1="630" x2="549.5" y2="680" stroke="#7300ff" stroke-width="1.1"/>
<line x1="552.5" y1="630" x2="552.5" y2="680" stroke="#7300ff" stroke-width="1.1"/>
<rect x="560.2" y="441" width="10.0" height="74" fill="url(#fd)"/>
<rect x="561.2" y="442.0" width="8.0" height="72" fill="none" stroke="#00ffff" stroke-width="2"/>
<rect x="560.2" y="594" width="10.0" height="36" fill="url(#fd)"/>
<rect x="561.2" y="595.0" width="8.0" height="34" fill="none" stroke="#00ffff" stroke-width="2"/>
<line x1="561.7" y1="441" x2="561.7" y2="630" stroke="#00ffff" stroke-width="1.1"/>
<line x1="564.0" y1="441" x2="564.0" y2="630" stroke="#00ffff" stroke-width="1.1"/>
<line x1="566.4" y1="441" x2="566.4" y2="630" stroke="#00ffff" stroke-width="1.1"/>
<line x1="568.7" y1="441" x2="568.7" y2="630" stroke="#00ffff" stroke-width="1.1"/>
<line x1="561.7" y1="515" x2="568.7" y2="530" stroke="#00ffff" stroke-width="0.8"/>
<line x1="561.7" y1="565" x2="568.7" y2="580" stroke="#00ffff" stroke-width="0.8"/>
<line x1="562.2" y1="641" x2="562.2" y2="664" stroke="#7300ff" stroke-width="1"/>
<line x1="568.2" y1="641" x2="568.2" y2="664" stroke="#7300ff" stroke-width="1"/>
<rect x="576.4" y="438.5" width="9.0" height="78" fill="none" stroke="#00ff00" stroke-width="1"/>
<rect x="576.4" y="594.5" width="9.0" height="39" fill="none" stroke="#00ff00" stroke-width="1"/>
<rect x="576.9" y="440" width="8.0" height="75" fill="url(#fi)"/>
<rect x="577.6" y="440.8" width="6.5" height="73.5" fill="none" stroke="#7300ff" stroke-width="1.5"/>
<line x1="580.9" y1="440" x2="580.9" y2="515" stroke="#7300ff" stroke-width="1"/>
<line x1="577.9" y1="392" x2="577.9" y2="440" stroke="#7300ff" stroke-width="1.1"/>
<line x1="580.9" y1="392" x2="580.9" y2="440" stroke="#7300ff" stroke-width="1.1"/>
<line x1="583.9" y1="392" x2="583.9" y2="440" stroke="#7300ff" stroke-width="1.1"/>
<rect x="576.9" y="598" width="8.0" height="32" fill="url(#fi)"/>
<rect x="577.6" y="598.8" width="6.5" height="30.5" fill="none" stroke="#7300ff" stroke-width="1.5"/>
<line x1="580.9" y1="598" x2="580.9" y2="630" stroke="#7300ff" stroke-width="1"/>
<line x1="577.9" y1="630" x2="577.9" y2="680" stroke="#7300ff" stroke-width="1.1"/>
<line x1="580.9" y1="630" x2="580.9" y2="680" stroke="#7300ff" stroke-width="1.1"/>
<line x1="583.9" y1="630" x2="583.9" y2="680" stroke="#7300ff" stroke-width="1.1"/>
<rect x="591.6" y="441" width="10.0" height="74" fill="url(#fd)"/>
<rect x="592.6" y="442.0" width="8.0" height="72" fill="none" stroke="#00ffff" stroke-width="2"/>
<rect x="591.6" y="594" width="10.0" height="36" fill="url(#fd)"/>
<rect x="592.6" y="595.0" width="8.0" height="34" fill="none" stroke="#00ffff" stroke-width="2"/>
<line x1="593.1" y1="441" x2="593.1" y2="630" stroke="#00ffff" stroke-width="1.1"/>
<line x1="595.4" y1="441" x2="595.4" y2="630" stroke="#00ffff" stroke-width="1.1"/>
<line x1="597.8" y1="441" x2="597.8" y2="630" stroke="#00ffff" stroke-width="1.1"/>
<line x1="600.1" y1="441" x2="600.1" y2="630" stroke="#00ffff" stroke-width="1.1"/>
<line x1="593.1" y1="515" x2="600.1" y2="530" stroke="#00ffff" stroke-width="0.8"/>
<line x1="593.1" y1="565" x2="600.1" y2="580" stroke="#00ffff" stroke-width="0.8"/>
<line x1="593.6" y1="641" x2="593.6" y2="664" stroke="#7300ff" stroke-width="1"/>
<line x1="599.6" y1="641" x2="599.6" y2="664" stroke="#7300ff" stroke-width="1"/>
<rect x="608.3" y="440" width="8.0" height="75" fill="url(#fi)"/>
<rect x="609.0" y="440.8" width="6.5" height="73.5" fill="none" stroke="#7300ff" stroke-width="1.5"/>
<line x1="612.3" y1="440" x2="612.3" y2="515" stroke="#7300ff" stroke-width="1"/>
<line x1="609.3" y1="392" x2="609.3" y2="440" stroke="#7300ff" stroke-width="1.1"/>
<line x1="612.3" y1="392" x2="612.3" y2="440" stroke="#7300ff" stroke-width="1.1"/>
<line x1="615.3" y1="392" x2="615.3" y2="440" stroke="#7300ff" stroke-width="1.1"/>
<rect x="608.3" y="598" width="8.0" height="32" fill="url(#fi)"/>
<rect x="609.0" y="598.8" width="6.5" height="30.5" fill="none" stroke="#7300ff" stroke-width="1.5"/>
<line x1="612.3" y1="598" x2="612.3" y2="630" stroke="#7300ff" stroke-width="1"/>
<line x1="609.3" y1="630" x2="609.3" y2="680" stroke="#7300ff" stroke-width="1.1"/>
<line x1="612.3" y1="630" x2="612.3" y2="680" stroke="#7300ff" stroke-width="1.1"/>
<line x1="615.3" y1="630" x2="615.3" y2="680" stroke="#7300ff" stroke-width="1.1"/>
<rect x="623.0" y="441" width="10.0" height="74" fill="url(#fd)"/>
<rect x="624.0" y="442.0" width="8.0" height="72" fill="none" stroke="#00ffff" stroke-width="2"/>
<rect x="623.0" y="594" width="10.0" height="36" fill="url(#fd)"/>
<rect x="624.0" y="595.0" width="8.0" height="34" fill="none" stroke="#00ffff" stroke-width="2"/>
<line x1="624.5" y1="441" x2="624.5" y2="630" stroke="#00ffff" stroke-width="1.1"/>
<line x1="626.8" y1="441" x2="626.8" y2="630" stroke="#00ffff" stroke-width="1.1"/>
<line x1="629.2" y1="441" x2="629.2" y2="630" stroke="#00ffff" stroke-width="1.1"/>
<line x1="631.5" y1="441" x2="631.5" y2="630" stroke="#00ffff" stroke-width="1.1"/>
<line x1="624.5" y1="515" x2="631.5" y2="530" stroke="#00ffff" stroke-width="0.8"/>
<line x1="624.5" y1="565" x2="631.5" y2="580" stroke="#00ffff" stroke-width="0.8"/>
<line x1="625.0" y1="641" x2="625.0" y2="664" stroke="#7300ff" stroke-width="1"/>
<line x1="631.0" y1="641" x2="631.0" y2="664" stroke="#7300ff" stroke-width="1"/>
<rect x="639.2" y="438.5" width="9.0" height="78" fill="none" stroke="#00ff00" stroke-width="1"/>
<rect x="639.2" y="594.5" width="9.0" height="39" fill="none" stroke="#00ff00" stroke-width="1"/>
<rect x="639.7" y="440" width="8.0" height="75" fill="url(#fi)"/>
<rect x="640.5" y="440.8" width="6.5" height="73.5" fill="none" stroke="#7300ff" stroke-width="1.5"/>
<line x1="643.7" y1="440" x2="643.7" y2="515" stroke="#7300ff" stroke-width="1"/>
<line x1="640.7" y1="392" x2="640.7" y2="440" stroke="#7300ff" stroke-width="1.1"/>
<line x1="643.7" y1="392" x2="643.7" y2="440" stroke="#7300ff" stroke-width="1.1"/>
<line x1="646.7" y1="392" x2="646.7" y2="440" stroke="#7300ff" stroke-width="1.1"/>
<rect x="639.7" y="598" width="8.0" height="32" fill="url(#fi)"/>
<rect x="640.5" y="598.8" width="6.5" height="30.5" fill="none" stroke="#7300ff" stroke-width="1.5"/>
<line x1="643.7" y1="598" x2="643.7" y2="630" stroke="#7300ff" stroke-width="1"/>
<line x1="640.7" y1="630" x2="640.7" y2="680" stroke="#7300ff" stroke-width="1.1"/>
<line x1="643.7" y1="630" x2="643.7" y2="680" stroke="#7300ff" stroke-width="1.1"/>
<line x1="646.7" y1="630" x2="646.7" y2="680" stroke="#7300ff" stroke-width="1.1"/>
<rect x="441.6" y="408" width="2.5" height="121" fill="#ff8000"/>
<rect x="467.0" y="408" width="2.5" height="121" fill="#ff8000"/>
<rect x="504.4" y="408" width="2.5" height="121" fill="#ff8000"/>
<rect x="529.8" y="408" width="2.5" height="121" fill="#ff8000"/>
<rect x="567.2" y="408" width="2.5" height="121" fill="#ff8000"/>
<rect x="592.6" y="408" width="2.5" height="121" fill="#ff8000"/>
<line x1="387.0" y1="477.5" x2="398.0" y2="477.5" stroke="#ffffff" stroke-width="1.2"/>
<line x1="392.5" y1="472.0" x2="392.5" y2="483.0" stroke="#ffffff" stroke-width="1.2"/>
<rect x="391.0" y="476.0" width="3.0" height="3.0" fill="#ffffff"/>
<line x1="388.0" y1="613.5" x2="397.0" y2="613.5" stroke="#ffffff" stroke-width="1.2"/>
<text x="392.5" y="616.5" font-family="Liberation Mono" font-weight="bold" font-size="8" fill="#fff" text-anchor="middle">S</text>
<line x1="402.7" y1="477.5" x2="413.7" y2="477.5" stroke="#ffffff" stroke-width="1.2"/>
<line x1="408.2" y1="472.0" x2="408.2" y2="483.0" stroke="#ffffff" stroke-width="1.2"/>
<rect x="406.7" y="476.0" width="3.0" height="3.0" fill="#ffffff"/>
<line x1="403.7" y1="613.5" x2="412.7" y2="613.5" stroke="#ffffff" stroke-width="1.2"/>
<text x="408.2" y="616.5" font-family="Liberation Mono" font-weight="bold" font-size="8" fill="#fff" text-anchor="middle">D</text>
<line x1="418.4" y1="477.5" x2="429.4" y2="477.5" stroke="#ffffff" stroke-width="1.2"/>
<line x1="423.9" y1="472.0" x2="423.9" y2="483.0" stroke="#ffffff" stroke-width="1.2"/>
<rect x="422.4" y="476.0" width="3.0" height="3.0" fill="#ffffff"/>
<line x1="419.4" y1="613.5" x2="428.4" y2="613.5" stroke="#ffffff" stroke-width="1.2"/>
<text x="423.9" y="616.5" font-family="Liberation Mono" font-weight="bold" font-size="8" fill="#fff" text-anchor="middle">S</text>
<line x1="434.1" y1="477.5" x2="445.1" y2="477.5" stroke="#ffffff" stroke-width="1.2"/>
<line x1="439.6" y1="472.0" x2="439.6" y2="483.0" stroke="#ffffff" stroke-width="1.2"/>
<rect x="438.1" y="476.0" width="3.0" height="3.0" fill="#ffffff"/>
<line x1="435.1" y1="613.5" x2="444.1" y2="613.5" stroke="#ffffff" stroke-width="1.2"/>
<text x="439.6" y="616.5" font-family="Liberation Mono" font-weight="bold" font-size="8" fill="#fff" text-anchor="middle">D</text>
<line x1="449.8" y1="477.5" x2="460.8" y2="477.5" stroke="#ffffff" stroke-width="1.2"/>
<line x1="455.3" y1="472.0" x2="455.3" y2="483.0" stroke="#ffffff" stroke-width="1.2"/>
<rect x="453.8" y="476.0" width="3.0" height="3.0" fill="#ffffff"/>
<line x1="450.8" y1="613.5" x2="459.8" y2="613.5" stroke="#ffffff" stroke-width="1.2"/>
<text x="455.3" y="616.5" font-family="Liberation Mono" font-weight="bold" font-size="8" fill="#fff" text-anchor="middle">S</text>
<line x1="465.5" y1="477.5" x2="476.5" y2="477.5" stroke="#ffffff" stroke-width="1.2"/>
<line x1="471.0" y1="472.0" x2="471.0" y2="483.0" stroke="#ffffff" stroke-width="1.2"/>
<rect x="469.5" y="476.0" width="3.0" height="3.0" fill="#ffffff"/>
<line x1="466.5" y1="613.5" x2="475.5" y2="613.5" stroke="#ffffff" stroke-width="1.2"/>
<text x="471.0" y="616.5" font-family="Liberation Mono" font-weight="bold" font-size="8" fill="#fff" text-anchor="middle">D</text>
<line x1="481.2" y1="477.5" x2="492.2" y2="477.5" stroke="#ffffff" stroke-width="1.2"/>
<line x1="486.7" y1="472.0" x2="486.7" y2="483.0" stroke="#ffffff" stroke-width="1.2"/>
<rect x="485.2" y="476.0" width="3.0" height="3.0" fill="#ffffff"/>
<line x1="482.2" y1="613.5" x2="491.2" y2="613.5" stroke="#ffffff" stroke-width="1.2"/>
<text x="486.7" y="616.5" font-family="Liberation Mono" font-weight="bold" font-size="8" fill="#fff" text-anchor="middle">S</text>
<line x1="496.9" y1="477.5" x2="507.9" y2="477.5" stroke="#ffffff" stroke-width="1.2"/>
<line x1="502.4" y1="472.0" x2="502.4" y2="483.0" stroke="#ffffff" stroke-width="1.2"/>
<rect x="500.9" y="476.0" width="3.0" height="3.0" fill="#ffffff"/>
<line x1="497.9" y1="613.5" x2="506.9" y2="613.5" stroke="#ffffff" stroke-width="1.2"/>
<text x="502.4" y="616.5" font-family="Liberation Mono" font-weight="bold" font-size="8" fill="#fff" text-anchor="middle">D</text>
<line x1="512.6" y1="477.5" x2="523.6" y2="477.5" stroke="#ffffff" stroke-width="1.2"/>
<line x1="518.1" y1="472.0" x2="518.1" y2="483.0" stroke="#ffffff" stroke-width="1.2"/>
<rect x="516.6" y="476.0" width="3.0" height="3.0" fill="#ffffff"/>
<line x1="513.6" y1="613.5" x2="522.6" y2="613.5" stroke="#ffffff" stroke-width="1.2"/>
<text x="518.1" y="616.5" font-family="Liberation Mono" font-weight="bold" font-size="8" fill="#fff" text-anchor="middle">S</text>
<line x1="528.3" y1="477.5" x2="539.3" y2="477.5" stroke="#ffffff" stroke-width="1.2"/>
<line x1="533.8" y1="472.0" x2="533.8" y2="483.0" stroke="#ffffff" stroke-width="1.2"/>
<rect x="532.3" y="476.0" width="3.0" height="3.0" fill="#ffffff"/>
<line x1="529.3" y1="613.5" x2="538.3" y2="613.5" stroke="#ffffff" stroke-width="1.2"/>
<text x="533.8" y="616.5" font-family="Liberation Mono" font-weight="bold" font-size="8" fill="#fff" text-anchor="middle">D</text>
<line x1="544.0" y1="477.5" x2="555.0" y2="477.5" stroke="#ffffff" stroke-width="1.2"/>
<line x1="549.5" y1="472.0" x2="549.5" y2="483.0" stroke="#ffffff" stroke-width="1.2"/>
<rect x="548.0" y="476.0" width="3.0" height="3.0" fill="#ffffff"/>
<line x1="545.0" y1="613.5" x2="554.0" y2="613.5" stroke="#ffffff" stroke-width="1.2"/>
<text x="549.5" y="616.5" font-family="Liberation Mono" font-weight="bold" font-size="8" fill="#fff" text-anchor="middle">S</text>
<line x1="559.7" y1="477.5" x2="570.7" y2="477.5" stroke="#ffffff" stroke-width="1.2"/>
<line x1="565.2" y1="472.0" x2="565.2" y2="483.0" stroke="#ffffff" stroke-width="1.2"/>
<rect x="563.7" y="476.0" width="3.0" height="3.0" fill="#ffffff"/>
<line x1="560.7" y1="613.5" x2="569.7" y2="613.5" stroke="#ffffff" stroke-width="1.2"/>
<text x="565.2" y="616.5" font-family="Liberation Mono" font-weight="bold" font-size="8" fill="#fff" text-anchor="middle">D</text>
<line x1="575.4" y1="477.5" x2="586.4" y2="477.5" stroke="#ffffff" stroke-width="1.2"/>
<line x1="580.9" y1="472.0" x2="580.9" y2="483.0" stroke="#ffffff" stroke-width="1.2"/>
<rect x="579.4" y="476.0" width="3.0" height="3.0" fill="#ffffff"/>
<line x1="576.4" y1="613.5" x2="585.4" y2="613.5" stroke="#ffffff" stroke-width="1.2"/>
<text x="580.9" y="616.5" font-family="Liberation Mono" font-weight="bold" font-size="8" fill="#fff" text-anchor="middle">S</text>
<line x1="591.1" y1="477.5" x2="602.1" y2="477.5" stroke="#ffffff" stroke-width="1.2"/>
<line x1="596.6" y1="472.0" x2="596.6" y2="483.0" stroke="#ffffff" stroke-width="1.2"/>
<rect x="595.1" y="476.0" width="3.0" height="3.0" fill="#ffffff"/>
<line x1="592.1" y1="613.5" x2="601.1" y2="613.5" stroke="#ffffff" stroke-width="1.2"/>
<text x="596.6" y="616.5" font-family="Liberation Mono" font-weight="bold" font-size="8" fill="#fff" text-anchor="middle">D</text>
<line x1="606.8" y1="477.5" x2="617.8" y2="477.5" stroke="#ffffff" stroke-width="1.2"/>
<line x1="612.3" y1="472.0" x2="612.3" y2="483.0" stroke="#ffffff" stroke-width="1.2"/>
<rect x="610.8" y="476.0" width="3.0" height="3.0" fill="#ffffff"/>
<line x1="607.8" y1="613.5" x2="616.8" y2="613.5" stroke="#ffffff" stroke-width="1.2"/>
<text x="612.3" y="616.5" font-family="Liberation Mono" font-weight="bold" font-size="8" fill="#fff" text-anchor="middle">S</text>
<line x1="622.5" y1="477.5" x2="633.5" y2="477.5" stroke="#ffffff" stroke-width="1.2"/>
<line x1="628.0" y1="472.0" x2="628.0" y2="483.0" stroke="#ffffff" stroke-width="1.2"/>
<rect x="626.5" y="476.0" width="3.0" height="3.0" fill="#ffffff"/>
<line x1="623.5" y1="613.5" x2="632.5" y2="613.5" stroke="#ffffff" stroke-width="1.2"/>
<text x="628.0" y="616.5" font-family="Liberation Mono" font-weight="bold" font-size="8" fill="#fff" text-anchor="middle">D</text>
<line x1="638.2" y1="477.5" x2="649.2" y2="477.5" stroke="#ffffff" stroke-width="1.2"/>
<line x1="643.7" y1="472.0" x2="643.7" y2="483.0" stroke="#ffffff" stroke-width="1.2"/>
<rect x="642.2" y="476.0" width="3.0" height="3.0" fill="#ffffff"/>
<line x1="639.2" y1="613.5" x2="648.2" y2="613.5" stroke="#ffffff" stroke-width="1.2"/>
<text x="643.7" y="616.5" font-family="Liberation Mono" font-weight="bold" font-size="8" fill="#fff" text-anchor="middle">S</text>
<rect x="675.5" y="431" width="516.4" height="115" fill="url(#pd)"/>
<rect x="675.5" y="563" width="516.4" height="78" fill="url(#dy)"/>
<rect x="669.8" y="408.5" width="527.6" height="121" fill="none" stroke="#ff8000" stroke-width="3"/>
<rect x="675.5" y="413.5" width="516.4" height="132" fill="none" stroke="#ffb4dc" stroke-width="1"/>
<line x1="675.5" y1="422.5" x2="1191.9" y2="422.5" stroke="#ffb4dc" stroke-width="1"/>
<line x1="675.5" y1="521.5" x2="1191.9" y2="521.5" stroke="#ffb4dc" stroke-width="1"/>
<line x1="675.5" y1="524.5" x2="1191.9" y2="524.5" stroke="#ffb4dc" stroke-width="1"/>
<rect x="675.5" y="414" width="516.4" height="11" fill="url(#hp)"/>
<rect x="675.5" y="414" width="516.4" height="11" fill="url(#ty)"/>
<rect x="675.1" y="413.6" width="517.1" height="16.7" fill="none" stroke="#ff0000" stroke-width="1.3"/>
<line x1="677.5" y1="425.5" x2="1189.9" y2="425.5" stroke="#7300ff" stroke-width="3"/>
<rect x="675.5" y="562.5" width="516.4" height="79" fill="none" stroke="#e6d200" stroke-width="1"/>
<line x1="675.5" y1="583.5" x2="1191.9" y2="583.5" stroke="#e6d200" stroke-width="1"/>
<line x1="675.5" y1="586.5" x2="1191.9" y2="586.5" stroke="#e6d200" stroke-width="1"/>
<rect x="675.1" y="641.6" width="517.1" height="16.7" fill="none" stroke="#ff0000" stroke-width="1.3"/>
<line x1="675.5" y1="649.5" x2="1191.9" y2="649.5" stroke="#e6d200" stroke-width="1"/>
<rect x="676.5" y="645" width="514.4" height="14" fill="url(#hp)"/>
<rect x="676.5" y="645" width="514.4" height="14" fill="url(#ty)"/>
<line x1="676.5" y1="645.5" x2="1190.9" y2="645.5" stroke="#7300ff" stroke-width="1.5"/>
<line x1="676.5" y1="658" x2="1190.9" y2="658" stroke="#7300ff" stroke-width="1.2"/>
<line x1="677.5" y1="438.5" x2="1189.9" y2="438.5" stroke="#00ff00" stroke-width="1"/>
<line x1="677.5" y1="516.5" x2="1189.9" y2="516.5" stroke="#00ff00" stroke-width="1"/>
<line x1="677.5" y1="594.5" x2="1189.9" y2="594.5" stroke="#00ff00" stroke-width="1"/>
<line x1="677.5" y1="633.5" x2="1189.9" y2="633.5" stroke="#00ff00" stroke-width="1"/>
<line x1="689.4" y1="431" x2="689.4" y2="528" stroke="#ffb4dc" stroke-width="0.8"/>
<line x1="689.4" y1="578" x2="689.4" y2="641" stroke="#e6d200" stroke-width="0.8"/>
<line x1="705.0" y1="431" x2="705.0" y2="528" stroke="#ffb4dc" stroke-width="0.8"/>
<line x1="705.0" y1="578" x2="705.0" y2="641" stroke="#e6d200" stroke-width="0.8"/>
<line x1="720.8" y1="431" x2="720.8" y2="528" stroke="#ffb4dc" stroke-width="0.8"/>
<line x1="720.8" y1="578" x2="720.8" y2="641" stroke="#e6d200" stroke-width="0.8"/>
<line x1="736.5" y1="431" x2="736.5" y2="528" stroke="#ffb4dc" stroke-width="0.8"/>
<line x1="736.5" y1="578" x2="736.5" y2="641" stroke="#e6d200" stroke-width="0.8"/>
<line x1="752.1" y1="431" x2="752.1" y2="528" stroke="#ffb4dc" stroke-width="0.8"/>
<line x1="752.1" y1="578" x2="752.1" y2="641" stroke="#e6d200" stroke-width="0.8"/>
<line x1="767.9" y1="431" x2="767.9" y2="528" stroke="#ffb4dc" stroke-width="0.8"/>
<line x1="767.9" y1="578" x2="767.9" y2="641" stroke="#e6d200" stroke-width="0.8"/>
<line x1="783.5" y1="431" x2="783.5" y2="528" stroke="#ffb4dc" stroke-width="0.8"/>
<line x1="783.5" y1="578" x2="783.5" y2="641" stroke="#e6d200" stroke-width="0.8"/>
<line x1="799.2" y1="431" x2="799.2" y2="528" stroke="#ffb4dc" stroke-width="0.8"/>
<line x1="799.2" y1="578" x2="799.2" y2="641" stroke="#e6d200" stroke-width="0.8"/>
<line x1="815.0" y1="431" x2="815.0" y2="528" stroke="#ffb4dc" stroke-width="0.8"/>
<line x1="815.0" y1="578" x2="815.0" y2="641" stroke="#e6d200" stroke-width="0.8"/>
<line x1="830.6" y1="431" x2="830.6" y2="528" stroke="#ffb4dc" stroke-width="0.8"/>
<line x1="830.6" y1="578" x2="830.6" y2="641" stroke="#e6d200" stroke-width="0.8"/>
<line x1="846.4" y1="431" x2="846.4" y2="528" stroke="#ffb4dc" stroke-width="0.8"/>
<line x1="846.4" y1="578" x2="846.4" y2="641" stroke="#e6d200" stroke-width="0.8"/>
<line x1="862.0" y1="431" x2="862.0" y2="528" stroke="#ffb4dc" stroke-width="0.8"/>
<line x1="862.0" y1="578" x2="862.0" y2="641" stroke="#e6d200" stroke-width="0.8"/>
<line x1="877.8" y1="431" x2="877.8" y2="528" stroke="#ffb4dc" stroke-width="0.8"/>
<line x1="877.8" y1="578" x2="877.8" y2="641" stroke="#e6d200" stroke-width="0.8"/>
<line x1="893.5" y1="431" x2="893.5" y2="528" stroke="#ffb4dc" stroke-width="0.8"/>
<line x1="893.5" y1="578" x2="893.5" y2="641" stroke="#e6d200" stroke-width="0.8"/>
<line x1="909.1" y1="431" x2="909.1" y2="528" stroke="#ffb4dc" stroke-width="0.8"/>
<line x1="909.1" y1="578" x2="909.1" y2="641" stroke="#e6d200" stroke-width="0.8"/>
<line x1="924.9" y1="431" x2="924.9" y2="528" stroke="#ffb4dc" stroke-width="0.8"/>
<line x1="924.9" y1="578" x2="924.9" y2="641" stroke="#e6d200" stroke-width="0.8"/>
<line x1="940.5" y1="431" x2="940.5" y2="528" stroke="#ffb4dc" stroke-width="0.8"/>
<line x1="940.5" y1="578" x2="940.5" y2="641" stroke="#e6d200" stroke-width="0.8"/>
<line x1="956.2" y1="431" x2="956.2" y2="528" stroke="#ffb4dc" stroke-width="0.8"/>
<line x1="956.2" y1="578" x2="956.2" y2="641" stroke="#e6d200" stroke-width="0.8"/>
<line x1="972.0" y1="431" x2="972.0" y2="528" stroke="#ffb4dc" stroke-width="0.8"/>
<line x1="972.0" y1="578" x2="972.0" y2="641" stroke="#e6d200" stroke-width="0.8"/>
<line x1="987.6" y1="431" x2="987.6" y2="528" stroke="#ffb4dc" stroke-width="0.8"/>
<line x1="987.6" y1="578" x2="987.6" y2="641" stroke="#e6d200" stroke-width="0.8"/>
<line x1="1003.3" y1="431" x2="1003.3" y2="528" stroke="#ffb4dc" stroke-width="0.8"/>
<line x1="1003.3" y1="578" x2="1003.3" y2="641" stroke="#e6d200" stroke-width="0.8"/>
<line x1="1019.0" y1="431" x2="1019.0" y2="528" stroke="#ffb4dc" stroke-width="0.8"/>
<line x1="1019.0" y1="578" x2="1019.0" y2="641" stroke="#e6d200" stroke-width="0.8"/>
<line x1="1034.8" y1="431" x2="1034.8" y2="528" stroke="#ffb4dc" stroke-width="0.8"/>
<line x1="1034.8" y1="578" x2="1034.8" y2="641" stroke="#e6d200" stroke-width="0.8"/>
<line x1="1050.5" y1="431" x2="1050.5" y2="528" stroke="#ffb4dc" stroke-width="0.8"/>
<line x1="1050.5" y1="578" x2="1050.5" y2="641" stroke="#e6d200" stroke-width="0.8"/>
<line x1="1066.2" y1="431" x2="1066.2" y2="528" stroke="#ffb4dc" stroke-width="0.8"/>
<line x1="1066.2" y1="578" x2="1066.2" y2="641" stroke="#e6d200" stroke-width="0.8"/>
<line x1="1081.8" y1="431" x2="1081.8" y2="528" stroke="#ffb4dc" stroke-width="0.8"/>
<line x1="1081.8" y1="578" x2="1081.8" y2="641" stroke="#e6d200" stroke-width="0.8"/>
<line x1="1097.5" y1="431" x2="1097.5" y2="528" stroke="#ffb4dc" stroke-width="0.8"/>
<line x1="1097.5" y1="578" x2="1097.5" y2="641" stroke="#e6d200" stroke-width="0.8"/>
<line x1="1113.2" y1="431" x2="1113.2" y2="528" stroke="#ffb4dc" stroke-width="0.8"/>
<line x1="1113.2" y1="578" x2="1113.2" y2="641" stroke="#e6d200" stroke-width="0.8"/>
<line x1="1129.0" y1="431" x2="1129.0" y2="528" stroke="#ffb4dc" stroke-width="0.8"/>
<line x1="1129.0" y1="578" x2="1129.0" y2="641" stroke="#e6d200" stroke-width="0.8"/>
<line x1="1144.7" y1="431" x2="1144.7" y2="528" stroke="#ffb4dc" stroke-width="0.8"/>
<line x1="1144.7" y1="578" x2="1144.7" y2="641" stroke="#e6d200" stroke-width="0.8"/>
<line x1="1160.3" y1="431" x2="1160.3" y2="528" stroke="#ffb4dc" stroke-width="0.8"/>
<line x1="1160.3" y1="578" x2="1160.3" y2="641" stroke="#e6d200" stroke-width="0.8"/>
<line x1="1176.0" y1="431" x2="1176.0" y2="528" stroke="#ffb4dc" stroke-width="0.8"/>
<line x1="1176.0" y1="578" x2="1176.0" y2="641" stroke="#e6d200" stroke-width="0.8"/>
<rect x="687.5" y="427" width="492.4" height="10" fill="url(#hr)"/>
<rect x="687.5" y="634" width="492.4" height="10" fill="url(#hr)"/>
<path d="M688.7 540V427H707.7V540H703.2V437H693.2V540Z" fill="url(#hr)"/>
<path d="M693.2 437L698.2 432L703.2 437Z" fill="#000"/>
<path d="M688.7 568V644H707.7V568H703.2V634H693.2V568Z" fill="url(#hr)"/>
<path d="M693.2 634L698.2 639L703.2 634Z" fill="#000"/>
<path d="M720.1 540V427H739.1V540H734.6V437H724.6V540Z" fill="url(#hr)"/>
<path d="M724.6 437L729.6 432L734.6 437Z" fill="#000"/>
<path d="M720.1 568V644H739.1V568H734.6V634H724.6V568Z" fill="url(#hr)"/>
<path d="M724.6 634L729.6 639L734.6 634Z" fill="#000"/>
<path d="M751.5 540V427H770.5V540H766.0V437H756.0V540Z" fill="url(#hr)"/>
<path d="M756.0 437L761.0 432L766.0 437Z" fill="#000"/>
<path d="M751.5 568V644H770.5V568H766.0V634H756.0V568Z" fill="url(#hr)"/>
<path d="M756.0 634L761.0 639L766.0 634Z" fill="#000"/>
<path d="M782.9 540V427H801.9V540H797.4V437H787.4V540Z" fill="url(#hr)"/>
<path d="M787.4 437L792.4 432L797.4 437Z" fill="#000"/>
<path d="M782.9 568V644H801.9V568H797.4V634H787.4V568Z" fill="url(#hr)"/>
<path d="M787.4 634L792.4 639L797.4 634Z" fill="#000"/>
<path d="M814.3 540V427H833.3V540H828.8V437H818.8V540Z" fill="url(#hr)"/>
<path d="M818.8 437L823.8 432L828.8 437Z" fill="#000"/>
<path d="M814.3 568V644H833.3V568H828.8V634H818.8V568Z" fill="url(#hr)"/>
<path d="M818.8 634L823.8 639L828.8 634Z" fill="#000"/>
<path d="M845.7 540V427H864.7V540H860.2V437H850.2V540Z" fill="url(#hr)"/>
<path d="M850.2 437L855.2 432L860.2 437Z" fill="#000"/>
<path d="M845.7 568V644H864.7V568H860.2V634H850.2V568Z" fill="url(#hr)"/>
<path d="M850.2 634L855.2 639L860.2 634Z" fill="#000"/>
<path d="M877.1 540V427H896.1V540H891.6V437H881.6V540Z" fill="url(#hr)"/>
<path d="M881.6 437L886.6 432L891.6 437Z" fill="#000"/>
<path d="M877.1 568V644H896.1V568H891.6V634H881.6V568Z" fill="url(#hr)"/>
<path d="M881.6 634L886.6 639L891.6 634Z" fill="#000"/>
<path d="M908.5 540V427H927.5V540H923.0V437H913.0V540Z" fill="url(#hr)"/>
<path d="M913.0 437L918.0 432L923.0 437Z" fill="#000"/>
<path d="M908.5 568V644H927.5V568H923.0V634H913.0V568Z" fill="url(#hr)"/>
<path d="M913.0 634L918.0 639L923.0 634Z" fill="#000"/>
<path d="M939.9 540V427H958.9V540H954.4V437H944.4V540Z" fill="url(#hr)"/>
<path d="M944.4 437L949.4 432L954.4 437Z" fill="#000"/>
<path d="M939.9 568V644H958.9V568H954.4V634H944.4V568Z" fill="url(#hr)"/>
<path d="M944.4 634L949.4 639L954.4 634Z" fill="#000"/>
<path d="M971.3 540V427H990.3V540H985.8V437H975.8V540Z" fill="url(#hr)"/>
<path d="M975.8 437L980.8 432L985.8 437Z" fill="#000"/>
<path d="M971.3 568V644H990.3V568H985.8V634H975.8V568Z" fill="url(#hr)"/>
<path d="M975.8 634L980.8 639L985.8 634Z" fill="#000"/>
<path d="M1002.7 540V427H1021.7V540H1017.2V437H1007.2V540Z" fill="url(#hr)"/>
<path d="M1007.2 437L1012.2 432L1017.2 437Z" fill="#000"/>
<path d="M1002.7 568V644H1021.7V568H1017.2V634H1007.2V568Z" fill="url(#hr)"/>
<path d="M1007.2 634L1012.2 639L1017.2 634Z" fill="#000"/>
<path d="M1034.1 540V427H1053.1V540H1048.6V437H1038.6V540Z" fill="url(#hr)"/>
<path d="M1038.6 437L1043.6 432L1048.6 437Z" fill="#000"/>
<path d="M1034.1 568V644H1053.1V568H1048.6V634H1038.6V568Z" fill="url(#hr)"/>
<path d="M1038.6 634L1043.6 639L1048.6 634Z" fill="#000"/>
<path d="M1065.5 540V427H1084.5V540H1080.0V437H1070.0V540Z" fill="url(#hr)"/>
<path d="M1070.0 437L1075.0 432L1080.0 437Z" fill="#000"/>
<path d="M1065.5 568V644H1084.5V568H1080.0V634H1070.0V568Z" fill="url(#hr)"/>
<path d="M1070.0 634L1075.0 639L1080.0 634Z" fill="#000"/>
<path d="M1096.9 540V427H1115.9V540H1111.4V437H1101.4V540Z" fill="url(#hr)"/>
<path d="M1101.4 437L1106.4 432L1111.4 437Z" fill="#000"/>
<path d="M1096.9 568V644H1115.9V568H1111.4V634H1101.4V568Z" fill="url(#hr)"/>
<path d="M1101.4 634L1106.4 639L1111.4 634Z" fill="#000"/>
<path d="M1128.3 540V427H1147.3V540H1142.8V437H1132.8V540Z" fill="url(#hr)"/>
<path d="M1132.8 437L1137.8 432L1142.8 437Z" fill="#000"/>
<path d="M1128.3 568V644H1147.3V568H1142.8V634H1132.8V568Z" fill="url(#hr)"/>
<path d="M1132.8 634L1137.8 639L1142.8 634Z" fill="#000"/>
<path d="M1159.7 540V427H1178.7V540H1174.2V437H1164.2V540Z" fill="url(#hr)"/>
<path d="M1164.2 437L1169.2 432L1174.2 437Z" fill="#000"/>
<path d="M1159.7 568V644H1178.7V568H1174.2V634H1164.2V568Z" fill="url(#hr)"/>
<path d="M1164.2 634L1169.2 639L1174.2 634Z" fill="#000"/>
<rect x="675" y="530" width="12.5" height="10" fill="#000"/>
<rect x="675" y="530" width="12.5" height="10" fill="url(#hp)"/>
<line x1="675" y1="530.5" x2="687.5" y2="530.5" stroke="#7300ff" stroke-width="1"/>
<line x1="675" y1="539.5" x2="687.5" y2="539.5" stroke="#7300ff" stroke-width="1"/>
<rect x="687.5" y="530" width="491.4" height="10" fill="url(#hr)"/>
<rect x="687.5" y="530" width="491.4" height="10" fill="url(#hp)"/>
<rect x="687.5" y="530" width="491.4" height="10" fill="url(#dpu)"/>
<rect x="688.5" y="531.0" width="489.4" height="8" fill="none" stroke="#7300ff" stroke-width="2"/>
<rect x="675" y="568" width="12.5" height="10" fill="#000"/>
<rect x="675" y="568" width="12.5" height="10" fill="url(#hp)"/>
<line x1="675" y1="568.5" x2="687.5" y2="568.5" stroke="#7300ff" stroke-width="1"/>
<line x1="675" y1="577.5" x2="687.5" y2="577.5" stroke="#7300ff" stroke-width="1"/>
<rect x="687.5" y="568" width="491.4" height="10" fill="url(#hr)"/>
<rect x="687.5" y="568" width="491.4" height="10" fill="url(#hp)"/>
<rect x="687.5" y="568" width="491.4" height="10" fill="url(#dpu)"/>
<rect x="688.5" y="569.0" width="489.4" height="8" fill="none" stroke="#7300ff" stroke-width="2"/>
<rect x="653" y="530" width="22" height="48" fill="url(#hp)"/>
<rect x="653.6" y="530.6" width="20.7" height="46.7" fill="none" stroke="#7300ff" stroke-width="1.3"/>
<rect x="678.0" y="438.5" width="9.0" height="78" fill="none" stroke="#00ff00" stroke-width="1"/>
<rect x="678.0" y="594.5" width="9.0" height="39" fill="none" stroke="#00ff00" stroke-width="1"/>
<rect x="678.5" y="440" width="8.0" height="75" fill="url(#fi)"/>
<rect x="679.2" y="440.8" width="6.5" height="73.5" fill="none" stroke="#7300ff" stroke-width="1.5"/>
<line x1="682.5" y1="440" x2="682.5" y2="515" stroke="#7300ff" stroke-width="1"/>
<line x1="679.5" y1="392" x2="679.5" y2="440" stroke="#7300ff" stroke-width="1.1"/>
<line x1="682.5" y1="392" x2="682.5" y2="440" stroke="#7300ff" stroke-width="1.1"/>
<line x1="685.5" y1="392" x2="685.5" y2="440" stroke="#7300ff" stroke-width="1.1"/>
<rect x="678.5" y="598" width="8.0" height="32" fill="url(#fi)"/>
<rect x="679.2" y="598.8" width="6.5" height="30.5" fill="none" stroke="#7300ff" stroke-width="1.5"/>
<line x1="682.5" y1="598" x2="682.5" y2="630" stroke="#7300ff" stroke-width="1"/>
<line x1="679.5" y1="630" x2="679.5" y2="680" stroke="#7300ff" stroke-width="1.1"/>
<line x1="682.5" y1="630" x2="682.5" y2="680" stroke="#7300ff" stroke-width="1.1"/>
<line x1="685.5" y1="630" x2="685.5" y2="680" stroke="#7300ff" stroke-width="1.1"/>
<rect x="693.2" y="441" width="10.0" height="74" fill="url(#fd)"/>
<rect x="694.2" y="442.0" width="8.0" height="72" fill="none" stroke="#00ffff" stroke-width="2"/>
<rect x="693.2" y="594" width="10.0" height="36" fill="url(#fd)"/>
<rect x="694.2" y="595.0" width="8.0" height="34" fill="none" stroke="#00ffff" stroke-width="2"/>
<line x1="694.7" y1="441" x2="694.7" y2="630" stroke="#00ffff" stroke-width="1.1"/>
<line x1="697.0" y1="441" x2="697.0" y2="630" stroke="#00ffff" stroke-width="1.1"/>
<line x1="699.4" y1="441" x2="699.4" y2="630" stroke="#00ffff" stroke-width="1.1"/>
<line x1="701.7" y1="441" x2="701.7" y2="630" stroke="#00ffff" stroke-width="1.1"/>
<line x1="694.7" y1="515" x2="701.7" y2="530" stroke="#00ffff" stroke-width="0.8"/>
<line x1="694.7" y1="565" x2="701.7" y2="580" stroke="#00ffff" stroke-width="0.8"/>
<line x1="695.2" y1="641" x2="695.2" y2="664" stroke="#7300ff" stroke-width="1"/>
<line x1="701.2" y1="641" x2="701.2" y2="664" stroke="#7300ff" stroke-width="1"/>
<rect x="709.9" y="440" width="8.0" height="75" fill="url(#fi)"/>
<rect x="710.6" y="440.8" width="6.5" height="73.5" fill="none" stroke="#7300ff" stroke-width="1.5"/>
<line x1="713.9" y1="440" x2="713.9" y2="515" stroke="#7300ff" stroke-width="1"/>
<line x1="710.9" y1="392" x2="710.9" y2="440" stroke="#7300ff" stroke-width="1.1"/>
<line x1="713.9" y1="392" x2="713.9" y2="440" stroke="#7300ff" stroke-width="1.1"/>
<line x1="716.9" y1="392" x2="716.9" y2="440" stroke="#7300ff" stroke-width="1.1"/>
<rect x="709.9" y="598" width="8.0" height="32" fill="url(#fi)"/>
<rect x="710.6" y="598.8" width="6.5" height="30.5" fill="none" stroke="#7300ff" stroke-width="1.5"/>
<line x1="713.9" y1="598" x2="713.9" y2="630" stroke="#7300ff" stroke-width="1"/>
<line x1="710.9" y1="630" x2="710.9" y2="680" stroke="#7300ff" stroke-width="1.1"/>
<line x1="713.9" y1="630" x2="713.9" y2="680" stroke="#7300ff" stroke-width="1.1"/>
<line x1="716.9" y1="630" x2="716.9" y2="680" stroke="#7300ff" stroke-width="1.1"/>
<rect x="724.6" y="441" width="10.0" height="74" fill="url(#fd)"/>
<rect x="725.6" y="442.0" width="8.0" height="72" fill="none" stroke="#00ffff" stroke-width="2"/>
<rect x="724.6" y="594" width="10.0" height="36" fill="url(#fd)"/>
<rect x="725.6" y="595.0" width="8.0" height="34" fill="none" stroke="#00ffff" stroke-width="2"/>
<line x1="726.1" y1="441" x2="726.1" y2="630" stroke="#00ffff" stroke-width="1.1"/>
<line x1="728.4" y1="441" x2="728.4" y2="630" stroke="#00ffff" stroke-width="1.1"/>
<line x1="730.8" y1="441" x2="730.8" y2="630" stroke="#00ffff" stroke-width="1.1"/>
<line x1="733.1" y1="441" x2="733.1" y2="630" stroke="#00ffff" stroke-width="1.1"/>
<line x1="726.1" y1="515" x2="733.1" y2="530" stroke="#00ffff" stroke-width="0.8"/>
<line x1="726.1" y1="565" x2="733.1" y2="580" stroke="#00ffff" stroke-width="0.8"/>
<line x1="726.6" y1="641" x2="726.6" y2="664" stroke="#7300ff" stroke-width="1"/>
<line x1="732.6" y1="641" x2="732.6" y2="664" stroke="#7300ff" stroke-width="1"/>
<rect x="740.8" y="438.5" width="9.0" height="78" fill="none" stroke="#00ff00" stroke-width="1"/>
<rect x="740.8" y="594.5" width="9.0" height="39" fill="none" stroke="#00ff00" stroke-width="1"/>
<rect x="741.3" y="440" width="8.0" height="75" fill="url(#fi)"/>
<rect x="742.0" y="440.8" width="6.5" height="73.5" fill="none" stroke="#7300ff" stroke-width="1.5"/>
<line x1="745.3" y1="440" x2="745.3" y2="515" stroke="#7300ff" stroke-width="1"/>
<line x1="742.3" y1="392" x2="742.3" y2="440" stroke="#7300ff" stroke-width="1.1"/>
<line x1="745.3" y1="392" x2="745.3" y2="440" stroke="#7300ff" stroke-width="1.1"/>
<line x1="748.3" y1="392" x2="748.3" y2="440" stroke="#7300ff" stroke-width="1.1"/>
<rect x="741.3" y="598" width="8.0" height="32" fill="url(#fi)"/>
<rect x="742.0" y="598.8" width="6.5" height="30.5" fill="none" stroke="#7300ff" stroke-width="1.5"/>
<line x1="745.3" y1="598" x2="745.3" y2="630" stroke="#7300ff" stroke-width="1"/>
<line x1="742.3" y1="630" x2="742.3" y2="680" stroke="#7300ff" stroke-width="1.1"/>
<line x1="745.3" y1="630" x2="745.3" y2="680" stroke="#7300ff" stroke-width="1.1"/>
<line x1="748.3" y1="630" x2="748.3" y2="680" stroke="#7300ff" stroke-width="1.1"/>
<rect x="756.0" y="441" width="10.0" height="74" fill="url(#fd)"/>
<rect x="757.0" y="442.0" width="8.0" height="72" fill="none" stroke="#00ffff" stroke-width="2"/>
<rect x="756.0" y="594" width="10.0" height="36" fill="url(#fd)"/>
<rect x="757.0" y="595.0" width="8.0" height="34" fill="none" stroke="#00ffff" stroke-width="2"/>
<line x1="757.5" y1="441" x2="757.5" y2="630" stroke="#00ffff" stroke-width="1.1"/>
<line x1="759.8" y1="441" x2="759.8" y2="630" stroke="#00ffff" stroke-width="1.1"/>
<line x1="762.2" y1="441" x2="762.2" y2="630" stroke="#00ffff" stroke-width="1.1"/>
<line x1="764.5" y1="441" x2="764.5" y2="630" stroke="#00ffff" stroke-width="1.1"/>
<line x1="757.5" y1="515" x2="764.5" y2="530" stroke="#00ffff" stroke-width="0.8"/>
<line x1="757.5" y1="565" x2="764.5" y2="580" stroke="#00ffff" stroke-width="0.8"/>
<line x1="758.0" y1="641" x2="758.0" y2="664" stroke="#7300ff" stroke-width="1"/>
<line x1="764.0" y1="641" x2="764.0" y2="664" stroke="#7300ff" stroke-width="1"/>
<rect x="772.7" y="440" width="8.0" height="75" fill="url(#fi)"/>
<rect x="773.5" y="440.8" width="6.5" height="73.5" fill="none" stroke="#7300ff" stroke-width="1.5"/>
<line x1="776.7" y1="440" x2="776.7" y2="515" stroke="#7300ff" stroke-width="1"/>
<line x1="773.7" y1="392" x2="773.7" y2="440" stroke="#7300ff" stroke-width="1.1"/>
<line x1="776.7" y1="392" x2="776.7" y2="440" stroke="#7300ff" stroke-width="1.1"/>
<line x1="779.7" y1="392" x2="779.7" y2="440" stroke="#7300ff" stroke-width="1.1"/>
<rect x="772.7" y="598" width="8.0" height="32" fill="url(#fi)"/>
<rect x="773.5" y="598.8" width="6.5" height="30.5" fill="none" stroke="#7300ff" stroke-width="1.5"/>
<line x1="776.7" y1="598" x2="776.7" y2="630" stroke="#7300ff" stroke-width="1"/>
<line x1="773.7" y1="630" x2="773.7" y2="680" stroke="#7300ff" stroke-width="1.1"/>
<line x1="776.7" y1="630" x2="776.7" y2="680" stroke="#7300ff" stroke-width="1.1"/>
<line x1="779.7" y1="630" x2="779.7" y2="680" stroke="#7300ff" stroke-width="1.1"/>
<rect x="787.4" y="441" width="10.0" height="74" fill="url(#fd)"/>
<rect x="788.4" y="442.0" width="8.0" height="72" fill="none" stroke="#00ffff" stroke-width="2"/>
<rect x="787.4" y="594" width="10.0" height="36" fill="url(#fd)"/>
<rect x="788.4" y="595.0" width="8.0" height="34" fill="none" stroke="#00ffff" stroke-width="2"/>
<line x1="788.9" y1="441" x2="788.9" y2="630" stroke="#00ffff" stroke-width="1.1"/>
<line x1="791.2" y1="441" x2="791.2" y2="630" stroke="#00ffff" stroke-width="1.1"/>
<line x1="793.6" y1="441" x2="793.6" y2="630" stroke="#00ffff" stroke-width="1.1"/>
<line x1="795.9" y1="441" x2="795.9" y2="630" stroke="#00ffff" stroke-width="1.1"/>
<line x1="788.9" y1="515" x2="795.9" y2="530" stroke="#00ffff" stroke-width="0.8"/>
<line x1="788.9" y1="565" x2="795.9" y2="580" stroke="#00ffff" stroke-width="0.8"/>
<line x1="789.4" y1="641" x2="789.4" y2="664" stroke="#7300ff" stroke-width="1"/>
<line x1="795.4" y1="641" x2="795.4" y2="664" stroke="#7300ff" stroke-width="1"/>
<rect x="803.6" y="438.5" width="9.0" height="78" fill="none" stroke="#00ff00" stroke-width="1"/>
<rect x="803.6" y="594.5" width="9.0" height="39" fill="none" stroke="#00ff00" stroke-width="1"/>
<rect x="804.1" y="440" width="8.0" height="75" fill="url(#fi)"/>
<rect x="804.9" y="440.8" width="6.5" height="73.5" fill="none" stroke="#7300ff" stroke-width="1.5"/>
<line x1="808.1" y1="440" x2="808.1" y2="515" stroke="#7300ff" stroke-width="1"/>
<line x1="805.1" y1="392" x2="805.1" y2="440" stroke="#7300ff" stroke-width="1.1"/>
<line x1="808.1" y1="392" x2="808.1" y2="440" stroke="#7300ff" stroke-width="1.1"/>
<line x1="811.1" y1="392" x2="811.1" y2="440" stroke="#7300ff" stroke-width="1.1"/>
<rect x="804.1" y="598" width="8.0" height="32" fill="url(#fi)"/>
<rect x="804.9" y="598.8" width="6.5" height="30.5" fill="none" stroke="#7300ff" stroke-width="1.5"/>
<line x1="808.1" y1="598" x2="808.1" y2="630" stroke="#7300ff" stroke-width="1"/>
<line x1="805.1" y1="630" x2="805.1" y2="680" stroke="#7300ff" stroke-width="1.1"/>
<line x1="808.1" y1="630" x2="808.1" y2="680" stroke="#7300ff" stroke-width="1.1"/>
<line x1="811.1" y1="630" x2="811.1" y2="680" stroke="#7300ff" stroke-width="1.1"/>
<rect x="818.8" y="441" width="10.0" height="74" fill="url(#fd)"/>
<rect x="819.8" y="442.0" width="8.0" height="72" fill="none" stroke="#00ffff" stroke-width="2"/>
<rect x="818.8" y="594" width="10.0" height="36" fill="url(#fd)"/>
<rect x="819.8" y="595.0" width="8.0" height="34" fill="none" stroke="#00ffff" stroke-width="2"/>
<line x1="820.3" y1="441" x2="820.3" y2="630" stroke="#00ffff" stroke-width="1.1"/>
<line x1="822.6" y1="441" x2="822.6" y2="630" stroke="#00ffff" stroke-width="1.1"/>
<line x1="825.0" y1="441" x2="825.0" y2="630" stroke="#00ffff" stroke-width="1.1"/>
<line x1="827.3" y1="441" x2="827.3" y2="630" stroke="#00ffff" stroke-width="1.1"/>
<line x1="820.3" y1="515" x2="827.3" y2="530" stroke="#00ffff" stroke-width="0.8"/>
<line x1="820.3" y1="565" x2="827.3" y2="580" stroke="#00ffff" stroke-width="0.8"/>
<line x1="820.8" y1="641" x2="820.8" y2="664" stroke="#7300ff" stroke-width="1"/>
<line x1="826.8" y1="641" x2="826.8" y2="664" stroke="#7300ff" stroke-width="1"/>
<rect x="835.5" y="440" width="8.0" height="75" fill="url(#fi)"/>
<rect x="836.2" y="440.8" width="6.5" height="73.5" fill="none" stroke="#7300ff" stroke-width="1.5"/>
<line x1="839.5" y1="440" x2="839.5" y2="515" stroke="#7300ff" stroke-width="1"/>
<line x1="836.5" y1="392" x2="836.5" y2="440" stroke="#7300ff" stroke-width="1.1"/>
<line x1="839.5" y1="392" x2="839.5" y2="440" stroke="#7300ff" stroke-width="1.1"/>
<line x1="842.5" y1="392" x2="842.5" y2="440" stroke="#7300ff" stroke-width="1.1"/>
<rect x="835.5" y="598" width="8.0" height="32" fill="url(#fi)"/>
<rect x="836.2" y="598.8" width="6.5" height="30.5" fill="none" stroke="#7300ff" stroke-width="1.5"/>
<line x1="839.5" y1="598" x2="839.5" y2="630" stroke="#7300ff" stroke-width="1"/>
<line x1="836.5" y1="630" x2="836.5" y2="680" stroke="#7300ff" stroke-width="1.1"/>
<line x1="839.5" y1="630" x2="839.5" y2="680" stroke="#7300ff" stroke-width="1.1"/>
<line x1="842.5" y1="630" x2="842.5" y2="680" stroke="#7300ff" stroke-width="1.1"/>
<rect x="850.2" y="441" width="10.0" height="74" fill="url(#fd)"/>
<rect x="851.2" y="442.0" width="8.0" height="72" fill="none" stroke="#00ffff" stroke-width="2"/>
<rect x="850.2" y="594" width="10.0" height="36" fill="url(#fd)"/>
<rect x="851.2" y="595.0" width="8.0" height="34" fill="none" stroke="#00ffff" stroke-width="2"/>
<line x1="851.7" y1="441" x2="851.7" y2="630" stroke="#00ffff" stroke-width="1.1"/>
<line x1="854.0" y1="441" x2="854.0" y2="630" stroke="#00ffff" stroke-width="1.1"/>
<line x1="856.4" y1="441" x2="856.4" y2="630" stroke="#00ffff" stroke-width="1.1"/>
<line x1="858.7" y1="441" x2="858.7" y2="630" stroke="#00ffff" stroke-width="1.1"/>
<line x1="851.7" y1="515" x2="858.7" y2="530" stroke="#00ffff" stroke-width="0.8"/>
<line x1="851.7" y1="565" x2="858.7" y2="580" stroke="#00ffff" stroke-width="0.8"/>
<line x1="852.2" y1="641" x2="852.2" y2="664" stroke="#7300ff" stroke-width="1"/>
<line x1="858.2" y1="641" x2="858.2" y2="664" stroke="#7300ff" stroke-width="1"/>
<rect x="866.4" y="438.5" width="9.0" height="78" fill="none" stroke="#00ff00" stroke-width="1"/>
<rect x="866.4" y="594.5" width="9.0" height="39" fill="none" stroke="#00ff00" stroke-width="1"/>
<rect x="866.9" y="440" width="8.0" height="75" fill="url(#fi)"/>
<rect x="867.6" y="440.8" width="6.5" height="73.5" fill="none" stroke="#7300ff" stroke-width="1.5"/>
<line x1="870.9" y1="440" x2="870.9" y2="515" stroke="#7300ff" stroke-width="1"/>
<line x1="867.9" y1="392" x2="867.9" y2="440" stroke="#7300ff" stroke-width="1.1"/>
<line x1="870.9" y1="392" x2="870.9" y2="440" stroke="#7300ff" stroke-width="1.1"/>
<line x1="873.9" y1="392" x2="873.9" y2="440" stroke="#7300ff" stroke-width="1.1"/>
<rect x="866.9" y="598" width="8.0" height="32" fill="url(#fi)"/>
<rect x="867.6" y="598.8" width="6.5" height="30.5" fill="none" stroke="#7300ff" stroke-width="1.5"/>
<line x1="870.9" y1="598" x2="870.9" y2="630" stroke="#7300ff" stroke-width="1"/>
<line x1="867.9" y1="630" x2="867.9" y2="680" stroke="#7300ff" stroke-width="1.1"/>
<line x1="870.9" y1="630" x2="870.9" y2="680" stroke="#7300ff" stroke-width="1.1"/>
<line x1="873.9" y1="630" x2="873.9" y2="680" stroke="#7300ff" stroke-width="1.1"/>
<rect x="881.6" y="441" width="10.0" height="74" fill="url(#fd)"/>
<rect x="882.6" y="442.0" width="8.0" height="72" fill="none" stroke="#00ffff" stroke-width="2"/>
<rect x="881.6" y="594" width="10.0" height="36" fill="url(#fd)"/>
<rect x="882.6" y="595.0" width="8.0" height="34" fill="none" stroke="#00ffff" stroke-width="2"/>
<line x1="883.1" y1="441" x2="883.1" y2="630" stroke="#00ffff" stroke-width="1.1"/>
<line x1="885.4" y1="441" x2="885.4" y2="630" stroke="#00ffff" stroke-width="1.1"/>
<line x1="887.8" y1="441" x2="887.8" y2="630" stroke="#00ffff" stroke-width="1.1"/>
<line x1="890.1" y1="441" x2="890.1" y2="630" stroke="#00ffff" stroke-width="1.1"/>
<line x1="883.1" y1="515" x2="890.1" y2="530" stroke="#00ffff" stroke-width="0.8"/>
<line x1="883.1" y1="565" x2="890.1" y2="580" stroke="#00ffff" stroke-width="0.8"/>
<line x1="883.6" y1="641" x2="883.6" y2="664" stroke="#7300ff" stroke-width="1"/>
<line x1="889.6" y1="641" x2="889.6" y2="664" stroke="#7300ff" stroke-width="1"/>
<rect x="898.3" y="440" width="8.0" height="75" fill="url(#fi)"/>
<rect x="899.0" y="440.8" width="6.5" height="73.5" fill="none" stroke="#7300ff" stroke-width="1.5"/>
<line x1="902.3" y1="440" x2="902.3" y2="515" stroke="#7300ff" stroke-width="1"/>
<line x1="899.3" y1="392" x2="899.3" y2="440" stroke="#7300ff" stroke-width="1.1"/>
<line x1="902.3" y1="392" x2="902.3" y2="440" stroke="#7300ff" stroke-width="1.1"/>
<line x1="905.3" y1="392" x2="905.3" y2="440" stroke="#7300ff" stroke-width="1.1"/>
<rect x="898.3" y="598" width="8.0" height="32" fill="url(#fi)"/>
<rect x="899.0" y="598.8" width="6.5" height="30.5" fill="none" stroke="#7300ff" stroke-width="1.5"/>
<line x1="902.3" y1="598" x2="902.3" y2="630" stroke="#7300ff" stroke-width="1"/>
<line x1="899.3" y1="630" x2="899.3" y2="680" stroke="#7300ff" stroke-width="1.1"/>
<line x1="902.3" y1="630" x2="902.3" y2="680" stroke="#7300ff" stroke-width="1.1"/>
<line x1="905.3" y1="630" x2="905.3" y2="680" stroke="#7300ff" stroke-width="1.1"/>
<rect x="913.0" y="441" width="10.0" height="74" fill="url(#fd)"/>
<rect x="914.0" y="442.0" width="8.0" height="72" fill="none" stroke="#00ffff" stroke-width="2"/>
<rect x="913.0" y="594" width="10.0" height="36" fill="url(#fd)"/>
<rect x="914.0" y="595.0" width="8.0" height="34" fill="none" stroke="#00ffff" stroke-width="2"/>
<line x1="914.5" y1="441" x2="914.5" y2="630" stroke="#00ffff" stroke-width="1.1"/>
<line x1="916.8" y1="441" x2="916.8" y2="630" stroke="#00ffff" stroke-width="1.1"/>
<line x1="919.2" y1="441" x2="919.2" y2="630" stroke="#00ffff" stroke-width="1.1"/>
<line x1="921.5" y1="441" x2="921.5" y2="630" stroke="#00ffff" stroke-width="1.1"/>
<line x1="914.5" y1="515" x2="921.5" y2="530" stroke="#00ffff" stroke-width="0.8"/>
<line x1="914.5" y1="565" x2="921.5" y2="580" stroke="#00ffff" stroke-width="0.8"/>
<line x1="915.0" y1="641" x2="915.0" y2="664" stroke="#7300ff" stroke-width="1"/>
<line x1="921.0" y1="641" x2="921.0" y2="664" stroke="#7300ff" stroke-width="1"/>
<rect x="929.2" y="438.5" width="9.0" height="78" fill="none" stroke="#00ff00" stroke-width="1"/>
<rect x="929.2" y="594.5" width="9.0" height="39" fill="none" stroke="#00ff00" stroke-width="1"/>
<rect x="929.7" y="440" width="8.0" height="75" fill="url(#fi)"/>
<rect x="930.5" y="440.8" width="6.5" height="73.5" fill="none" stroke="#7300ff" stroke-width="1.5"/>
<line x1="933.7" y1="440" x2="933.7" y2="515" stroke="#7300ff" stroke-width="1"/>
<line x1="930.7" y1="392" x2="930.7" y2="440" stroke="#7300ff" stroke-width="1.1"/>
<line x1="933.7" y1="392" x2="933.7" y2="440" stroke="#7300ff" stroke-width="1.1"/>
<line x1="936.7" y1="392" x2="936.7" y2="440" stroke="#7300ff" stroke-width="1.1"/>
<rect x="929.7" y="598" width="8.0" height="32" fill="url(#fi)"/>
<rect x="930.5" y="598.8" width="6.5" height="30.5" fill="none" stroke="#7300ff" stroke-width="1.5"/>
<line x1="933.7" y1="598" x2="933.7" y2="630" stroke="#7300ff" stroke-width="1"/>
<line x1="930.7" y1="630" x2="930.7" y2="680" stroke="#7300ff" stroke-width="1.1"/>
<line x1="933.7" y1="630" x2="933.7" y2="680" stroke="#7300ff" stroke-width="1.1"/>
<line x1="936.7" y1="630" x2="936.7" y2="680" stroke="#7300ff" stroke-width="1.1"/>
<rect x="944.4" y="441" width="10.0" height="74" fill="url(#fd)"/>
<rect x="945.4" y="442.0" width="8.0" height="72" fill="none" stroke="#00ffff" stroke-width="2"/>
<rect x="944.4" y="594" width="10.0" height="36" fill="url(#fd)"/>
<rect x="945.4" y="595.0" width="8.0" height="34" fill="none" stroke="#00ffff" stroke-width="2"/>
<line x1="945.9" y1="441" x2="945.9" y2="630" stroke="#00ffff" stroke-width="1.1"/>
<line x1="948.2" y1="441" x2="948.2" y2="630" stroke="#00ffff" stroke-width="1.1"/>
<line x1="950.6" y1="441" x2="950.6" y2="630" stroke="#00ffff" stroke-width="1.1"/>
<line x1="952.9" y1="441" x2="952.9" y2="630" stroke="#00ffff" stroke-width="1.1"/>
<line x1="945.9" y1="515" x2="952.9" y2="530" stroke="#00ffff" stroke-width="0.8"/>
<line x1="945.9" y1="565" x2="952.9" y2="580" stroke="#00ffff" stroke-width="0.8"/>
<line x1="946.4" y1="641" x2="946.4" y2="664" stroke="#7300ff" stroke-width="1"/>
<line x1="952.4" y1="641" x2="952.4" y2="664" stroke="#7300ff" stroke-width="1"/>
<rect x="961.1" y="440" width="8.0" height="75" fill="url(#fi)"/>
<rect x="961.8" y="440.8" width="6.5" height="73.5" fill="none" stroke="#7300ff" stroke-width="1.5"/>
<line x1="965.1" y1="440" x2="965.1" y2="515" stroke="#7300ff" stroke-width="1"/>
<line x1="962.1" y1="392" x2="962.1" y2="440" stroke="#7300ff" stroke-width="1.1"/>
<line x1="965.1" y1="392" x2="965.1" y2="440" stroke="#7300ff" stroke-width="1.1"/>
<line x1="968.1" y1="392" x2="968.1" y2="440" stroke="#7300ff" stroke-width="1.1"/>
<rect x="961.1" y="598" width="8.0" height="32" fill="url(#fi)"/>
<rect x="961.8" y="598.8" width="6.5" height="30.5" fill="none" stroke="#7300ff" stroke-width="1.5"/>
<line x1="965.1" y1="598" x2="965.1" y2="630" stroke="#7300ff" stroke-width="1"/>
<line x1="962.1" y1="630" x2="962.1" y2="680" stroke="#7300ff" stroke-width="1.1"/>
<line x1="965.1" y1="630" x2="965.1" y2="680" stroke="#7300ff" stroke-width="1.1"/>
<line x1="968.1" y1="630" x2="968.1" y2="680" stroke="#7300ff" stroke-width="1.1"/>
<rect x="975.8" y="441" width="10.0" height="74" fill="url(#fd)"/>
<rect x="976.8" y="442.0" width="8.0" height="72" fill="none" stroke="#00ffff" stroke-width="2"/>
<rect x="975.8" y="594" width="10.0" height="36" fill="url(#fd)"/>
<rect x="976.8" y="595.0" width="8.0" height="34" fill="none" stroke="#00ffff" stroke-width="2"/>
<line x1="977.3" y1="441" x2="977.3" y2="630" stroke="#00ffff" stroke-width="1.1"/>
<line x1="979.6" y1="441" x2="979.6" y2="630" stroke="#00ffff" stroke-width="1.1"/>
<line x1="982.0" y1="441" x2="982.0" y2="630" stroke="#00ffff" stroke-width="1.1"/>
<line x1="984.3" y1="441" x2="984.3" y2="630" stroke="#00ffff" stroke-width="1.1"/>
<line x1="977.3" y1="515" x2="984.3" y2="530" stroke="#00ffff" stroke-width="0.8"/>
<line x1="977.3" y1="565" x2="984.3" y2="580" stroke="#00ffff" stroke-width="0.8"/>
<line x1="977.8" y1="641" x2="977.8" y2="664" stroke="#7300ff" stroke-width="1"/>
<line x1="983.8" y1="641" x2="983.8" y2="664" stroke="#7300ff" stroke-width="1"/>
<rect x="992.0" y="438.5" width="9.0" height="78" fill="none" stroke="#00ff00" stroke-width="1"/>
<rect x="992.0" y="594.5" width="9.0" height="39" fill="none" stroke="#00ff00" stroke-width="1"/>
<rect x="992.5" y="440" width="8.0" height="75" fill="url(#fi)"/>
<rect x="993.2" y="440.8" width="6.5" height="73.5" fill="none" stroke="#7300ff" stroke-width="1.5"/>
<line x1="996.5" y1="440" x2="996.5" y2="515" stroke="#7300ff" stroke-width="1"/>
<line x1="993.5" y1="392" x2="993.5" y2="440" stroke="#7300ff" stroke-width="1.1"/>
<line x1="996.5" y1="392" x2="996.5" y2="440" stroke="#7300ff" stroke-width="1.1"/>
<line x1="999.5" y1="392" x2="999.5" y2="440" stroke="#7300ff" stroke-width="1.1"/>
<rect x="992.5" y="598" width="8.0" height="32" fill="url(#fi)"/>
<rect x="993.2" y="598.8" width="6.5" height="30.5" fill="none" stroke="#7300ff" stroke-width="1.5"/>
<line x1="996.5" y1="598" x2="996.5" y2="630" stroke="#7300ff" stroke-width="1"/>
<line x1="993.5" y1="630" x2="993.5" y2="680" stroke="#7300ff" stroke-width="1.1"/>
<line x1="996.5" y1="630" x2="996.5" y2="680" stroke="#7300ff" stroke-width="1.1"/>
<line x1="999.5" y1="630" x2="999.5" y2="680" stroke="#7300ff" stroke-width="1.1"/>
<rect x="1007.2" y="441" width="10.0" height="74" fill="url(#fd)"/>
<rect x="1008.2" y="442.0" width="8.0" height="72" fill="none" stroke="#00ffff" stroke-width="2"/>
<rect x="1007.2" y="594" width="10.0" height="36" fill="url(#fd)"/>
<rect x="1008.2" y="595.0" width="8.0" height="34" fill="none" stroke="#00ffff" stroke-width="2"/>
<line x1="1008.7" y1="441" x2="1008.7" y2="630" stroke="#00ffff" stroke-width="1.1"/>
<line x1="1011.0" y1="441" x2="1011.0" y2="630" stroke="#00ffff" stroke-width="1.1"/>
<line x1="1013.4" y1="441" x2="1013.4" y2="630" stroke="#00ffff" stroke-width="1.1"/>
<line x1="1015.7" y1="441" x2="1015.7" y2="630" stroke="#00ffff" stroke-width="1.1"/>
<line x1="1008.7" y1="515" x2="1015.7" y2="530" stroke="#00ffff" stroke-width="0.8"/>
<line x1="1008.7" y1="565" x2="1015.7" y2="580" stroke="#00ffff" stroke-width="0.8"/>
<line x1="1009.2" y1="641" x2="1009.2" y2="664" stroke="#7300ff" stroke-width="1"/>
<line x1="1015.2" y1="641" x2="1015.2" y2="664" stroke="#7300ff" stroke-width="1"/>
<rect x="1023.9" y="440" width="8.0" height="75" fill="url(#fi)"/>
<rect x="1024.7" y="440.8" width="6.5" height="73.5" fill="none" stroke="#7300ff" stroke-width="1.5"/>
<line x1="1027.9" y1="440" x2="1027.9" y2="515" stroke="#7300ff" stroke-width="1"/>
<line x1="1024.9" y1="392" x2="1024.9" y2="440" stroke="#7300ff" stroke-width="1.1"/>
<line x1="1027.9" y1="392" x2="1027.9" y2="440" stroke="#7300ff" stroke-width="1.1"/>
<line x1="1030.9" y1="392" x2="1030.9" y2="440" stroke="#7300ff" stroke-width="1.1"/>
<rect x="1023.9" y="598" width="8.0" height="32" fill="url(#fi)"/>
<rect x="1024.7" y="598.8" width="6.5" height="30.5" fill="none" stroke="#7300ff" stroke-width="1.5"/>
<line x1="1027.9" y1="598" x2="1027.9" y2="630" stroke="#7300ff" stroke-width="1"/>
<line x1="1024.9" y1="630" x2="1024.9" y2="680" stroke="#7300ff" stroke-width="1.1"/>
<line x1="1027.9" y1="630" x2="1027.9" y2="680" stroke="#7300ff" stroke-width="1.1"/>
<line x1="1030.9" y1="630" x2="1030.9" y2="680" stroke="#7300ff" stroke-width="1.1"/>
<rect x="1038.6" y="441" width="10.0" height="74" fill="url(#fd)"/>
<rect x="1039.6" y="442.0" width="8.0" height="72" fill="none" stroke="#00ffff" stroke-width="2"/>
<rect x="1038.6" y="594" width="10.0" height="36" fill="url(#fd)"/>
<rect x="1039.6" y="595.0" width="8.0" height="34" fill="none" stroke="#00ffff" stroke-width="2"/>
<line x1="1040.1" y1="441" x2="1040.1" y2="630" stroke="#00ffff" stroke-width="1.1"/>
<line x1="1042.4" y1="441" x2="1042.4" y2="630" stroke="#00ffff" stroke-width="1.1"/>
<line x1="1044.8" y1="441" x2="1044.8" y2="630" stroke="#00ffff" stroke-width="1.1"/>
<line x1="1047.1" y1="441" x2="1047.1" y2="630" stroke="#00ffff" stroke-width="1.1"/>
<line x1="1040.1" y1="515" x2="1047.1" y2="530" stroke="#00ffff" stroke-width="0.8"/>
<line x1="1040.1" y1="565" x2="1047.1" y2="580" stroke="#00ffff" stroke-width="0.8"/>
<line x1="1040.6" y1="641" x2="1040.6" y2="664" stroke="#7300ff" stroke-width="1"/>
<line x1="1046.6" y1="641" x2="1046.6" y2="664" stroke="#7300ff" stroke-width="1"/>
<rect x="1054.8" y="438.5" width="9.0" height="78" fill="none" stroke="#00ff00" stroke-width="1"/>
<rect x="1054.8" y="594.5" width="9.0" height="39" fill="none" stroke="#00ff00" stroke-width="1"/>
<rect x="1055.3" y="440" width="8.0" height="75" fill="url(#fi)"/>
<rect x="1056.0" y="440.8" width="6.5" height="73.5" fill="none" stroke="#7300ff" stroke-width="1.5"/>
<line x1="1059.3" y1="440" x2="1059.3" y2="515" stroke="#7300ff" stroke-width="1"/>
<line x1="1056.3" y1="392" x2="1056.3" y2="440" stroke="#7300ff" stroke-width="1.1"/>
<line x1="1059.3" y1="392" x2="1059.3" y2="440" stroke="#7300ff" stroke-width="1.1"/>
<line x1="1062.3" y1="392" x2="1062.3" y2="440" stroke="#7300ff" stroke-width="1.1"/>
<rect x="1055.3" y="598" width="8.0" height="32" fill="url(#fi)"/>
<rect x="1056.0" y="598.8" width="6.5" height="30.5" fill="none" stroke="#7300ff" stroke-width="1.5"/>
<line x1="1059.3" y1="598" x2="1059.3" y2="630" stroke="#7300ff" stroke-width="1"/>
<line x1="1056.3" y1="630" x2="1056.3" y2="680" stroke="#7300ff" stroke-width="1.1"/>
<line x1="1059.3" y1="630" x2="1059.3" y2="680" stroke="#7300ff" stroke-width="1.1"/>
<line x1="1062.3" y1="630" x2="1062.3" y2="680" stroke="#7300ff" stroke-width="1.1"/>
<rect x="1070.0" y="441" width="10.0" height="74" fill="url(#fd)"/>
<rect x="1071.0" y="442.0" width="8.0" height="72" fill="none" stroke="#00ffff" stroke-width="2"/>
<rect x="1070.0" y="594" width="10.0" height="36" fill="url(#fd)"/>
<rect x="1071.0" y="595.0" width="8.0" height="34" fill="none" stroke="#00ffff" stroke-width="2"/>
<line x1="1071.5" y1="441" x2="1071.5" y2="630" stroke="#00ffff" stroke-width="1.1"/>
<line x1="1073.8" y1="441" x2="1073.8" y2="630" stroke="#00ffff" stroke-width="1.1"/>
<line x1="1076.2" y1="441" x2="1076.2" y2="630" stroke="#00ffff" stroke-width="1.1"/>
<line x1="1078.5" y1="441" x2="1078.5" y2="630" stroke="#00ffff" stroke-width="1.1"/>
<line x1="1071.5" y1="515" x2="1078.5" y2="530" stroke="#00ffff" stroke-width="0.8"/>
<line x1="1071.5" y1="565" x2="1078.5" y2="580" stroke="#00ffff" stroke-width="0.8"/>
<line x1="1072.0" y1="641" x2="1072.0" y2="664" stroke="#7300ff" stroke-width="1"/>
<line x1="1078.0" y1="641" x2="1078.0" y2="664" stroke="#7300ff" stroke-width="1"/>
<rect x="1086.7" y="440" width="8.0" height="75" fill="url(#fi)"/>
<rect x="1087.5" y="440.8" width="6.5" height="73.5" fill="none" stroke="#7300ff" stroke-width="1.5"/>
<line x1="1090.7" y1="440" x2="1090.7" y2="515" stroke="#7300ff" stroke-width="1"/>
<line x1="1087.7" y1="392" x2="1087.7" y2="440" stroke="#7300ff" stroke-width="1.1"/>
<line x1="1090.7" y1="392" x2="1090.7" y2="440" stroke="#7300ff" stroke-width="1.1"/>
<line x1="1093.7" y1="392" x2="1093.7" y2="440" stroke="#7300ff" stroke-width="1.1"/>
<rect x="1086.7" y="598" width="8.0" height="32" fill="url(#fi)"/>
<rect x="1087.5" y="598.8" width="6.5" height="30.5" fill="none" stroke="#7300ff" stroke-width="1.5"/>
<line x1="1090.7" y1="598" x2="1090.7" y2="630" stroke="#7300ff" stroke-width="1"/>
<line x1="1087.7" y1="630" x2="1087.7" y2="680" stroke="#7300ff" stroke-width="1.1"/>
<line x1="1090.7" y1="630" x2="1090.7" y2="680" stroke="#7300ff" stroke-width="1.1"/>
<line x1="1093.7" y1="630" x2="1093.7" y2="680" stroke="#7300ff" stroke-width="1.1"/>
<rect x="1101.4" y="441" width="10.0" height="74" fill="url(#fd)"/>
<rect x="1102.4" y="442.0" width="8.0" height="72" fill="none" stroke="#00ffff" stroke-width="2"/>
<rect x="1101.4" y="594" width="10.0" height="36" fill="url(#fd)"/>
<rect x="1102.4" y="595.0" width="8.0" height="34" fill="none" stroke="#00ffff" stroke-width="2"/>
<line x1="1102.9" y1="441" x2="1102.9" y2="630" stroke="#00ffff" stroke-width="1.1"/>
<line x1="1105.2" y1="441" x2="1105.2" y2="630" stroke="#00ffff" stroke-width="1.1"/>
<line x1="1107.6" y1="441" x2="1107.6" y2="630" stroke="#00ffff" stroke-width="1.1"/>
<line x1="1109.9" y1="441" x2="1109.9" y2="630" stroke="#00ffff" stroke-width="1.1"/>
<line x1="1102.9" y1="515" x2="1109.9" y2="530" stroke="#00ffff" stroke-width="0.8"/>
<line x1="1102.9" y1="565" x2="1109.9" y2="580" stroke="#00ffff" stroke-width="0.8"/>
<line x1="1103.4" y1="641" x2="1103.4" y2="664" stroke="#7300ff" stroke-width="1"/>
<line x1="1109.4" y1="641" x2="1109.4" y2="664" stroke="#7300ff" stroke-width="1"/>
<rect x="1117.6" y="438.5" width="9.0" height="78" fill="none" stroke="#00ff00" stroke-width="1"/>
<rect x="1117.6" y="594.5" width="9.0" height="39" fill="none" stroke="#00ff00" stroke-width="1"/>
<rect x="1118.1" y="440" width="8.0" height="75" fill="url(#fi)"/>
<rect x="1118.8" y="440.8" width="6.5" height="73.5" fill="none" stroke="#7300ff" stroke-width="1.5"/>
<line x1="1122.1" y1="440" x2="1122.1" y2="515" stroke="#7300ff" stroke-width="1"/>
<line x1="1119.1" y1="392" x2="1119.1" y2="440" stroke="#7300ff" stroke-width="1.1"/>
<line x1="1122.1" y1="392" x2="1122.1" y2="440" stroke="#7300ff" stroke-width="1.1"/>
<line x1="1125.1" y1="392" x2="1125.1" y2="440" stroke="#7300ff" stroke-width="1.1"/>
<rect x="1118.1" y="598" width="8.0" height="32" fill="url(#fi)"/>
<rect x="1118.8" y="598.8" width="6.5" height="30.5" fill="none" stroke="#7300ff" stroke-width="1.5"/>
<line x1="1122.1" y1="598" x2="1122.1" y2="630" stroke="#7300ff" stroke-width="1"/>
<line x1="1119.1" y1="630" x2="1119.1" y2="680" stroke="#7300ff" stroke-width="1.1"/>
<line x1="1122.1" y1="630" x2="1122.1" y2="680" stroke="#7300ff" stroke-width="1.1"/>
<line x1="1125.1" y1="630" x2="1125.1" y2="680" stroke="#7300ff" stroke-width="1.1"/>
<rect x="1132.8" y="441" width="10.0" height="74" fill="url(#fd)"/>
<rect x="1133.8" y="442.0" width="8.0" height="72" fill="none" stroke="#00ffff" stroke-width="2"/>
<rect x="1132.8" y="594" width="10.0" height="36" fill="url(#fd)"/>
<rect x="1133.8" y="595.0" width="8.0" height="34" fill="none" stroke="#00ffff" stroke-width="2"/>
<line x1="1134.3" y1="441" x2="1134.3" y2="630" stroke="#00ffff" stroke-width="1.1"/>
<line x1="1136.6" y1="441" x2="1136.6" y2="630" stroke="#00ffff" stroke-width="1.1"/>
<line x1="1139.0" y1="441" x2="1139.0" y2="630" stroke="#00ffff" stroke-width="1.1"/>
<line x1="1141.3" y1="441" x2="1141.3" y2="630" stroke="#00ffff" stroke-width="1.1"/>
<line x1="1134.3" y1="515" x2="1141.3" y2="530" stroke="#00ffff" stroke-width="0.8"/>
<line x1="1134.3" y1="565" x2="1141.3" y2="580" stroke="#00ffff" stroke-width="0.8"/>
<line x1="1134.8" y1="641" x2="1134.8" y2="664" stroke="#7300ff" stroke-width="1"/>
<line x1="1140.8" y1="641" x2="1140.8" y2="664" stroke="#7300ff" stroke-width="1"/>
<rect x="1149.5" y="440" width="8.0" height="75" fill="url(#fi)"/>
<rect x="1150.2" y="440.8" width="6.5" height="73.5" fill="none" stroke="#7300ff" stroke-width="1.5"/>
<line x1="1153.5" y1="440" x2="1153.5" y2="515" stroke="#7300ff" stroke-width="1"/>
<line x1="1150.5" y1="392" x2="1150.5" y2="440" stroke="#7300ff" stroke-width="1.1"/>
<line x1="1153.5" y1="392" x2="1153.5" y2="440" stroke="#7300ff" stroke-width="1.1"/>
<line x1="1156.5" y1="392" x2="1156.5" y2="440" stroke="#7300ff" stroke-width="1.1"/>
<rect x="1149.5" y="598" width="8.0" height="32" fill="url(#fi)"/>
<rect x="1150.2" y="598.8" width="6.5" height="30.5" fill="none" stroke="#7300ff" stroke-width="1.5"/>
<line x1="1153.5" y1="598" x2="1153.5" y2="630" stroke="#7300ff" stroke-width="1"/>
<line x1="1150.5" y1="630" x2="1150.5" y2="680" stroke="#7300ff" stroke-width="1.1"/>
<line x1="1153.5" y1="630" x2="1153.5" y2="680" stroke="#7300ff" stroke-width="1.1"/>
<line x1="1156.5" y1="630" x2="1156.5" y2="680" stroke="#7300ff" stroke-width="1.1"/>
<rect x="1164.2" y="441" width="10.0" height="74" fill="url(#fd)"/>
<rect x="1165.2" y="442.0" width="8.0" height="72" fill="none" stroke="#00ffff" stroke-width="2"/>
<rect x="1164.2" y="594" width="10.0" height="36" fill="url(#fd)"/>
<rect x="1165.2" y="595.0" width="8.0" height="34" fill="none" stroke="#00ffff" stroke-width="2"/>
<line x1="1165.7" y1="441" x2="1165.7" y2="630" stroke="#00ffff" stroke-width="1.1"/>
<line x1="1168.0" y1="441" x2="1168.0" y2="630" stroke="#00ffff" stroke-width="1.1"/>
<line x1="1170.4" y1="441" x2="1170.4" y2="630" stroke="#00ffff" stroke-width="1.1"/>
<line x1="1172.7" y1="441" x2="1172.7" y2="630" stroke="#00ffff" stroke-width="1.1"/>
<line x1="1165.7" y1="515" x2="1172.7" y2="530" stroke="#00ffff" stroke-width="0.8"/>
<line x1="1165.7" y1="565" x2="1172.7" y2="580" stroke="#00ffff" stroke-width="0.8"/>
<line x1="1166.2" y1="641" x2="1166.2" y2="664" stroke="#7300ff" stroke-width="1"/>
<line x1="1172.2" y1="641" x2="1172.2" y2="664" stroke="#7300ff" stroke-width="1"/>
<rect x="1180.4" y="438.5" width="9.0" height="78" fill="none" stroke="#00ff00" stroke-width="1"/>
<rect x="1180.4" y="594.5" width="9.0" height="39" fill="none" stroke="#00ff00" stroke-width="1"/>
<rect x="1180.9" y="440" width="8.0" height="75" fill="url(#fi)"/>
<rect x="1181.7" y="440.8" width="6.5" height="73.5" fill="none" stroke="#7300ff" stroke-width="1.5"/>
<line x1="1184.9" y1="440" x2="1184.9" y2="515" stroke="#7300ff" stroke-width="1"/>
<line x1="1181.9" y1="392" x2="1181.9" y2="440" stroke="#7300ff" stroke-width="1.1"/>
<line x1="1184.9" y1="392" x2="1184.9" y2="440" stroke="#7300ff" stroke-width="1.1"/>
<line x1="1187.9" y1="392" x2="1187.9" y2="440" stroke="#7300ff" stroke-width="1.1"/>
<rect x="1180.9" y="598" width="8.0" height="32" fill="url(#fi)"/>
<rect x="1181.7" y="598.8" width="6.5" height="30.5" fill="none" stroke="#7300ff" stroke-width="1.5"/>
<line x1="1184.9" y1="598" x2="1184.9" y2="630" stroke="#7300ff" stroke-width="1"/>
<line x1="1181.9" y1="630" x2="1181.9" y2="680" stroke="#7300ff" stroke-width="1.1"/>
<line x1="1184.9" y1="630" x2="1184.9" y2="680" stroke="#7300ff" stroke-width="1.1"/>
<line x1="1187.9" y1="630" x2="1187.9" y2="680" stroke="#7300ff" stroke-width="1.1"/>
<rect x="731.6" y="408" width="2.5" height="121" fill="#ff8000"/>
<rect x="757.0" y="408" width="2.5" height="121" fill="#ff8000"/>
<rect x="794.4" y="408" width="2.5" height="121" fill="#ff8000"/>
<rect x="819.8" y="408" width="2.5" height="121" fill="#ff8000"/>
<rect x="857.2" y="408" width="2.5" height="121" fill="#ff8000"/>
<rect x="882.6" y="408" width="2.5" height="121" fill="#ff8000"/>
<rect x="920.0" y="408" width="2.5" height="121" fill="#ff8000"/>
<rect x="945.4" y="408" width="2.5" height="121" fill="#ff8000"/>
<rect x="982.8" y="408" width="2.5" height="121" fill="#ff8000"/>
<rect x="1008.2" y="408" width="2.5" height="121" fill="#ff8000"/>
<rect x="1045.6" y="408" width="2.5" height="121" fill="#ff8000"/>
<rect x="1071.0" y="408" width="2.5" height="121" fill="#ff8000"/>
<rect x="1108.4" y="408" width="2.5" height="121" fill="#ff8000"/>
<rect x="1133.8" y="408" width="2.5" height="121" fill="#ff8000"/>
<line x1="677.0" y1="477.5" x2="688.0" y2="477.5" stroke="#ffffff" stroke-width="1.2"/>
<line x1="682.5" y1="472.0" x2="682.5" y2="483.0" stroke="#ffffff" stroke-width="1.2"/>
<rect x="681.0" y="476.0" width="3.0" height="3.0" fill="#ffffff"/>
<line x1="678.0" y1="613.5" x2="687.0" y2="613.5" stroke="#ffffff" stroke-width="1.2"/>
<text x="682.5" y="616.5" font-family="Liberation Mono" font-weight="bold" font-size="8" fill="#fff" text-anchor="middle">S</text>
<line x1="692.7" y1="477.5" x2="703.7" y2="477.5" stroke="#ffffff" stroke-width="1.2"/>
<line x1="698.2" y1="472.0" x2="698.2" y2="483.0" stroke="#ffffff" stroke-width="1.2"/>
<rect x="696.7" y="476.0" width="3.0" height="3.0" fill="#ffffff"/>
<line x1="693.7" y1="613.5" x2="702.7" y2="613.5" stroke="#ffffff" stroke-width="1.2"/>
<text x="698.2" y="616.5" font-family="Liberation Mono" font-weight="bold" font-size="8" fill="#fff" text-anchor="middle">D</text>
<line x1="708.4" y1="477.5" x2="719.4" y2="477.5" stroke="#ffffff" stroke-width="1.2"/>
<line x1="713.9" y1="472.0" x2="713.9" y2="483.0" stroke="#ffffff" stroke-width="1.2"/>
<rect x="712.4" y="476.0" width="3.0" height="3.0" fill="#ffffff"/>
<line x1="709.4" y1="613.5" x2="718.4" y2="613.5" stroke="#ffffff" stroke-width="1.2"/>
<text x="713.9" y="616.5" font-family="Liberation Mono" font-weight="bold" font-size="8" fill="#fff" text-anchor="middle">S</text>
<line x1="724.1" y1="477.5" x2="735.1" y2="477.5" stroke="#ffffff" stroke-width="1.2"/>
<line x1="729.6" y1="472.0" x2="729.6" y2="483.0" stroke="#ffffff" stroke-width="1.2"/>
<rect x="728.1" y="476.0" width="3.0" height="3.0" fill="#ffffff"/>
<line x1="725.1" y1="613.5" x2="734.1" y2="613.5" stroke="#ffffff" stroke-width="1.2"/>
<text x="729.6" y="616.5" font-family="Liberation Mono" font-weight="bold" font-size="8" fill="#fff" text-anchor="middle">D</text>
<line x1="739.8" y1="477.5" x2="750.8" y2="477.5" stroke="#ffffff" stroke-width="1.2"/>
<line x1="745.3" y1="472.0" x2="745.3" y2="483.0" stroke="#ffffff" stroke-width="1.2"/>
<rect x="743.8" y="476.0" width="3.0" height="3.0" fill="#ffffff"/>
<line x1="740.8" y1="613.5" x2="749.8" y2="613.5" stroke="#ffffff" stroke-width="1.2"/>
<text x="745.3" y="616.5" font-family="Liberation Mono" font-weight="bold" font-size="8" fill="#fff" text-anchor="middle">S</text>
<line x1="755.5" y1="477.5" x2="766.5" y2="477.5" stroke="#ffffff" stroke-width="1.2"/>
<line x1="761.0" y1="472.0" x2="761.0" y2="483.0" stroke="#ffffff" stroke-width="1.2"/>
<rect x="759.5" y="476.0" width="3.0" height="3.0" fill="#ffffff"/>
<line x1="756.5" y1="613.5" x2="765.5" y2="613.5" stroke="#ffffff" stroke-width="1.2"/>
<text x="761.0" y="616.5" font-family="Liberation Mono" font-weight="bold" font-size="8" fill="#fff" text-anchor="middle">D</text>
<line x1="771.2" y1="477.5" x2="782.2" y2="477.5" stroke="#ffffff" stroke-width="1.2"/>
<line x1="776.7" y1="472.0" x2="776.7" y2="483.0" stroke="#ffffff" stroke-width="1.2"/>
<rect x="775.2" y="476.0" width="3.0" height="3.0" fill="#ffffff"/>
<line x1="772.2" y1="613.5" x2="781.2" y2="613.5" stroke="#ffffff" stroke-width="1.2"/>
<text x="776.7" y="616.5" font-family="Liberation Mono" font-weight="bold" font-size="8" fill="#fff" text-anchor="middle">S</text>
<line x1="786.9" y1="477.5" x2="797.9" y2="477.5" stroke="#ffffff" stroke-width="1.2"/>
<line x1="792.4" y1="472.0" x2="792.4" y2="483.0" stroke="#ffffff" stroke-width="1.2"/>
<rect x="790.9" y="476.0" width="3.0" height="3.0" fill="#ffffff"/>
<line x1="787.9" y1="613.5" x2="796.9" y2="613.5" stroke="#ffffff" stroke-width="1.2"/>
<text x="792.4" y="616.5" font-family="Liberation Mono" font-weight="bold" font-size="8" fill="#fff" text-anchor="middle">D</text>
<line x1="802.6" y1="477.5" x2="813.6" y2="477.5" stroke="#ffffff" stroke-width="1.2"/>
<line x1="808.1" y1="472.0" x2="808.1" y2="483.0" stroke="#ffffff" stroke-width="1.2"/>
<rect x="806.6" y="476.0" width="3.0" height="3.0" fill="#ffffff"/>
<line x1="803.6" y1="613.5" x2="812.6" y2="613.5" stroke="#ffffff" stroke-width="1.2"/>
<text x="808.1" y="616.5" font-family="Liberation Mono" font-weight="bold" font-size="8" fill="#fff" text-anchor="middle">S</text>
<line x1="818.3" y1="477.5" x2="829.3" y2="477.5" stroke="#ffffff" stroke-width="1.2"/>
<line x1="823.8" y1="472.0" x2="823.8" y2="483.0" stroke="#ffffff" stroke-width="1.2"/>
<rect x="822.3" y="476.0" width="3.0" height="3.0" fill="#ffffff"/>
<line x1="819.3" y1="613.5" x2="828.3" y2="613.5" stroke="#ffffff" stroke-width="1.2"/>
<text x="823.8" y="616.5" font-family="Liberation Mono" font-weight="bold" font-size="8" fill="#fff" text-anchor="middle">D</text>
<line x1="834.0" y1="477.5" x2="845.0" y2="477.5" stroke="#ffffff" stroke-width="1.2"/>
<line x1="839.5" y1="472.0" x2="839.5" y2="483.0" stroke="#ffffff" stroke-width="1.2"/>
<rect x="838.0" y="476.0" width="3.0" height="3.0" fill="#ffffff"/>
<line x1="835.0" y1="613.5" x2="844.0" y2="613.5" stroke="#ffffff" stroke-width="1.2"/>
<text x="839.5" y="616.5" font-family="Liberation Mono" font-weight="bold" font-size="8" fill="#fff" text-anchor="middle">S</text>
<line x1="849.7" y1="477.5" x2="860.7" y2="477.5" stroke="#ffffff" stroke-width="1.2"/>
<line x1="855.2" y1="472.0" x2="855.2" y2="483.0" stroke="#ffffff" stroke-width="1.2"/>
<rect x="853.7" y="476.0" width="3.0" height="3.0" fill="#ffffff"/>
<line x1="850.7" y1="613.5" x2="859.7" y2="613.5" stroke="#ffffff" stroke-width="1.2"/>
<text x="855.2" y="616.5" font-family="Liberation Mono" font-weight="bold" font-size="8" fill="#fff" text-anchor="middle">D</text>
<line x1="865.4" y1="477.5" x2="876.4" y2="477.5" stroke="#ffffff" stroke-width="1.2"/>
<line x1="870.9" y1="472.0" x2="870.9" y2="483.0" stroke="#ffffff" stroke-width="1.2"/>
<rect x="869.4" y="476.0" width="3.0" height="3.0" fill="#ffffff"/>
<line x1="866.4" y1="613.5" x2="875.4" y2="613.5" stroke="#ffffff" stroke-width="1.2"/>
<text x="870.9" y="616.5" font-family="Liberation Mono" font-weight="bold" font-size="8" fill="#fff" text-anchor="middle">S</text>
<line x1="881.1" y1="477.5" x2="892.1" y2="477.5" stroke="#ffffff" stroke-width="1.2"/>
<line x1="886.6" y1="472.0" x2="886.6" y2="483.0" stroke="#ffffff" stroke-width="1.2"/>
<rect x="885.1" y="476.0" width="3.0" height="3.0" fill="#ffffff"/>
<line x1="882.1" y1="613.5" x2="891.1" y2="613.5" stroke="#ffffff" stroke-width="1.2"/>
<text x="886.6" y="616.5" font-family="Liberation Mono" font-weight="bold" font-size="8" fill="#fff" text-anchor="middle">D</text>
<line x1="896.8" y1="477.5" x2="907.8" y2="477.5" stroke="#ffffff" stroke-width="1.2"/>
<line x1="902.3" y1="472.0" x2="902.3" y2="483.0" stroke="#ffffff" stroke-width="1.2"/>
<rect x="900.8" y="476.0" width="3.0" height="3.0" fill="#ffffff"/>
<line x1="897.8" y1="613.5" x2="906.8" y2="613.5" stroke="#ffffff" stroke-width="1.2"/>
<text x="902.3" y="616.5" font-family="Liberation Mono" font-weight="bold" font-size="8" fill="#fff" text-anchor="middle">S</text>
<line x1="912.5" y1="477.5" x2="923.5" y2="477.5" stroke="#ffffff" stroke-width="1.2"/>
<line x1="918.0" y1="472.0" x2="918.0" y2="483.0" stroke="#ffffff" stroke-width="1.2"/>
<rect x="916.5" y="476.0" width="3.0" height="3.0" fill="#ffffff"/>
<line x1="913.5" y1="613.5" x2="922.5" y2="613.5" stroke="#ffffff" stroke-width="1.2"/>
<text x="918.0" y="616.5" font-family="Liberation Mono" font-weight="bold" font-size="8" fill="#fff" text-anchor="middle">D</text>
<line x1="928.2" y1="477.5" x2="939.2" y2="477.5" stroke="#ffffff" stroke-width="1.2"/>
<line x1="933.7" y1="472.0" x2="933.7" y2="483.0" stroke="#ffffff" stroke-width="1.2"/>
<rect x="932.2" y="476.0" width="3.0" height="3.0" fill="#ffffff"/>
<line x1="929.2" y1="613.5" x2="938.2" y2="613.5" stroke="#ffffff" stroke-width="1.2"/>
<text x="933.7" y="616.5" font-family="Liberation Mono" font-weight="bold" font-size="8" fill="#fff" text-anchor="middle">S</text>
<line x1="943.9" y1="477.5" x2="954.9" y2="477.5" stroke="#ffffff" stroke-width="1.2"/>
<line x1="949.4" y1="472.0" x2="949.4" y2="483.0" stroke="#ffffff" stroke-width="1.2"/>
<rect x="947.9" y="476.0" width="3.0" height="3.0" fill="#ffffff"/>
<line x1="944.9" y1="613.5" x2="953.9" y2="613.5" stroke="#ffffff" stroke-width="1.2"/>
<text x="949.4" y="616.5" font-family="Liberation Mono" font-weight="bold" font-size="8" fill="#fff" text-anchor="middle">D</text>
<line x1="959.6" y1="477.5" x2="970.6" y2="477.5" stroke="#ffffff" stroke-width="1.2"/>
<line x1="965.1" y1="472.0" x2="965.1" y2="483.0" stroke="#ffffff" stroke-width="1.2"/>
<rect x="963.6" y="476.0" width="3.0" height="3.0" fill="#ffffff"/>
<line x1="960.6" y1="613.5" x2="969.6" y2="613.5" stroke="#ffffff" stroke-width="1.2"/>
<text x="965.1" y="616.5" font-family="Liberation Mono" font-weight="bold" font-size="8" fill="#fff" text-anchor="middle">S</text>
<line x1="975.3" y1="477.5" x2="986.3" y2="477.5" stroke="#ffffff" stroke-width="1.2"/>
<line x1="980.8" y1="472.0" x2="980.8" y2="483.0" stroke="#ffffff" stroke-width="1.2"/>
<rect x="979.3" y="476.0" width="3.0" height="3.0" fill="#ffffff"/>
<line x1="976.3" y1="613.5" x2="985.3" y2="613.5" stroke="#ffffff" stroke-width="1.2"/>
<text x="980.8" y="616.5" font-family="Liberation Mono" font-weight="bold" font-size="8" fill="#fff" text-anchor="middle">D</text>
<line x1="991.0" y1="477.5" x2="1002.0" y2="477.5" stroke="#ffffff" stroke-width="1.2"/>
<line x1="996.5" y1="472.0" x2="996.5" y2="483.0" stroke="#ffffff" stroke-width="1.2"/>
<rect x="995.0" y="476.0" width="3.0" height="3.0" fill="#ffffff"/>
<line x1="992.0" y1="613.5" x2="1001.0" y2="613.5" stroke="#ffffff" stroke-width="1.2"/>
<text x="996.5" y="616.5" font-family="Liberation Mono" font-weight="bold" font-size="8" fill="#fff" text-anchor="middle">S</text>
<line x1="1006.7" y1="477.5" x2="1017.7" y2="477.5" stroke="#ffffff" stroke-width="1.2"/>
<line x1="1012.2" y1="472.0" x2="1012.2" y2="483.0" stroke="#ffffff" stroke-width="1.2"/>
<rect x="1010.7" y="476.0" width="3.0" height="3.0" fill="#ffffff"/>
<line x1="1007.7" y1="613.5" x2="1016.7" y2="613.5" stroke="#ffffff" stroke-width="1.2"/>
<text x="1012.2" y="616.5" font-family="Liberation Mono" font-weight="bold" font-size="8" fill="#fff" text-anchor="middle">D</text>
<line x1="1022.4" y1="477.5" x2="1033.4" y2="477.5" stroke="#ffffff" stroke-width="1.2"/>
<line x1="1027.9" y1="472.0" x2="1027.9" y2="483.0" stroke="#ffffff" stroke-width="1.2"/>
<rect x="1026.4" y="476.0" width="3.0" height="3.0" fill="#ffffff"/>
<line x1="1023.4" y1="613.5" x2="1032.4" y2="613.5" stroke="#ffffff" stroke-width="1.2"/>
<text x="1027.9" y="616.5" font-family="Liberation Mono" font-weight="bold" font-size="8" fill="#fff" text-anchor="middle">S</text>
<line x1="1038.1" y1="477.5" x2="1049.1" y2="477.5" stroke="#ffffff" stroke-width="1.2"/>
<line x1="1043.6" y1="472.0" x2="1043.6" y2="483.0" stroke="#ffffff" stroke-width="1.2"/>
<rect x="1042.1" y="476.0" width="3.0" height="3.0" fill="#ffffff"/>
<line x1="1039.1" y1="613.5" x2="1048.1" y2="613.5" stroke="#ffffff" stroke-width="1.2"/>
<text x="1043.6" y="616.5" font-family="Liberation Mono" font-weight="bold" font-size="8" fill="#fff" text-anchor="middle">D</text>
<line x1="1053.8" y1="477.5" x2="1064.8" y2="477.5" stroke="#ffffff" stroke-width="1.2"/>
<line x1="1059.3" y1="472.0" x2="1059.3" y2="483.0" stroke="#ffffff" stroke-width="1.2"/>
<rect x="1057.8" y="476.0" width="3.0" height="3.0" fill="#ffffff"/>
<line x1="1054.8" y1="613.5" x2="1063.8" y2="613.5" stroke="#ffffff" stroke-width="1.2"/>
<text x="1059.3" y="616.5" font-family="Liberation Mono" font-weight="bold" font-size="8" fill="#fff" text-anchor="middle">S</text>
<line x1="1069.5" y1="477.5" x2="1080.5" y2="477.5" stroke="#ffffff" stroke-width="1.2"/>
<line x1="1075.0" y1="472.0" x2="1075.0" y2="483.0" stroke="#ffffff" stroke-width="1.2"/>
<rect x="1073.5" y="476.0" width="3.0" height="3.0" fill="#ffffff"/>
<line x1="1070.5" y1="613.5" x2="1079.5" y2="613.5" stroke="#ffffff" stroke-width="1.2"/>
<text x="1075.0" y="616.5" font-family="Liberation Mono" font-weight="bold" font-size="8" fill="#fff" text-anchor="middle">D</text>
<line x1="1085.2" y1="477.5" x2="1096.2" y2="477.5" stroke="#ffffff" stroke-width="1.2"/>
<line x1="1090.7" y1="472.0" x2="1090.7" y2="483.0" stroke="#ffffff" stroke-width="1.2"/>
<rect x="1089.2" y="476.0" width="3.0" height="3.0" fill="#ffffff"/>
<line x1="1086.2" y1="613.5" x2="1095.2" y2="613.5" stroke="#ffffff" stroke-width="1.2"/>
<text x="1090.7" y="616.5" font-family="Liberation Mono" font-weight="bold" font-size="8" fill="#fff" text-anchor="middle">S</text>
<line x1="1100.9" y1="477.5" x2="1111.9" y2="477.5" stroke="#ffffff" stroke-width="1.2"/>
<line x1="1106.4" y1="472.0" x2="1106.4" y2="483.0" stroke="#ffffff" stroke-width="1.2"/>
<rect x="1104.9" y="476.0" width="3.0" height="3.0" fill="#ffffff"/>
<line x1="1101.9" y1="613.5" x2="1110.9" y2="613.5" stroke="#ffffff" stroke-width="1.2"/>
<text x="1106.4" y="616.5" font-family="Liberation Mono" font-weight="bold" font-size="8" fill="#fff" text-anchor="middle">D</text>
<line x1="1116.6" y1="477.5" x2="1127.6" y2="477.5" stroke="#ffffff" stroke-width="1.2"/>
<line x1="1122.1" y1="472.0" x2="1122.1" y2="483.0" stroke="#ffffff" stroke-width="1.2"/>
<rect x="1120.6" y="476.0" width="3.0" height="3.0" fill="#ffffff"/>
<line x1="1117.6" y1="613.5" x2="1126.6" y2="613.5" stroke="#ffffff" stroke-width="1.2"/>
<text x="1122.1" y="616.5" font-family="Liberation Mono" font-weight="bold" font-size="8" fill="#fff" text-anchor="middle">S</text>
<line x1="1132.3" y1="477.5" x2="1143.3" y2="477.5" stroke="#ffffff" stroke-width="1.2"/>
<line x1="1137.8" y1="472.0" x2="1137.8" y2="483.0" stroke="#ffffff" stroke-width="1.2"/>
<rect x="1136.3" y="476.0" width="3.0" height="3.0" fill="#ffffff"/>
<line x1="1133.3" y1="613.5" x2="1142.3" y2="613.5" stroke="#ffffff" stroke-width="1.2"/>
<text x="1137.8" y="616.5" font-family="Liberation Mono" font-weight="bold" font-size="8" fill="#fff" text-anchor="middle">D</text>
<line x1="1148.0" y1="477.5" x2="1159.0" y2="477.5" stroke="#ffffff" stroke-width="1.2"/>
<line x1="1153.5" y1="472.0" x2="1153.5" y2="483.0" stroke="#ffffff" stroke-width="1.2"/>
<rect x="1152.0" y="476.0" width="3.0" height="3.0" fill="#ffffff"/>
<line x1="1149.0" y1="613.5" x2="1158.0" y2="613.5" stroke="#ffffff" stroke-width="1.2"/>
<text x="1153.5" y="616.5" font-family="Liberation Mono" font-weight="bold" font-size="8" fill="#fff" text-anchor="middle">S</text>
<line x1="1163.7" y1="477.5" x2="1174.7" y2="477.5" stroke="#ffffff" stroke-width="1.2"/>
<line x1="1169.2" y1="472.0" x2="1169.2" y2="483.0" stroke="#ffffff" stroke-width="1.2"/>
<rect x="1167.7" y="476.0" width="3.0" height="3.0" fill="#ffffff"/>
<line x1="1164.7" y1="613.5" x2="1173.7" y2="613.5" stroke="#ffffff" stroke-width="1.2"/>
<text x="1169.2" y="616.5" font-family="Liberation Mono" font-weight="bold" font-size="8" fill="#fff" text-anchor="middle">D</text>
<line x1="1179.4" y1="477.5" x2="1190.4" y2="477.5" stroke="#ffffff" stroke-width="1.2"/>
<line x1="1184.9" y1="472.0" x2="1184.9" y2="483.0" stroke="#ffffff" stroke-width="1.2"/>
<rect x="1183.4" y="476.0" width="3.0" height="3.0" fill="#ffffff"/>
<line x1="1180.4" y1="613.5" x2="1189.4" y2="613.5" stroke="#ffffff" stroke-width="1.2"/>
<text x="1184.9" y="616.5" font-family="Liberation Mono" font-weight="bold" font-size="8" fill="#fff" text-anchor="middle">S</text>
<rect x="113" y="546" width="21" height="16" fill="url(#hp)"/>
<rect x="113" y="546" width="21" height="16" fill="url(#dpu)"/>
<rect x="113.7" y="546.6" width="19.7" height="14.7" fill="none" stroke="#7300ff" stroke-width="1.3"/>
<line x1="113" y1="553.5" x2="134" y2="553.5" stroke="#7300ff" stroke-width="1"/>
<line x1="131.5" y1="546" x2="131.5" y2="562" stroke="#7300ff" stroke-width="1"/>
<path d="M120 552l6 3M120 555l6 -3" stroke="#7300ff" stroke-width="1.5"/>
<rect x="169" y="546" width="52" height="16" fill="url(#hc)"/>
<rect x="169.8" y="546.8" width="50.5" height="14.5" fill="none" stroke="#00ffff" stroke-width="1.5"/>
<line x1="169" y1="554" x2="221" y2="554" stroke="#00ffff" stroke-width="1"/>
<rect x="239" y="546" width="146" height="16" fill="url(#hc)"/>
<rect x="239.8" y="546.8" width="144.5" height="14.5" fill="none" stroke="#00ffff" stroke-width="1.5"/>
<line x1="239" y1="554" x2="385" y2="554" stroke="#00ffff" stroke-width="1"/>
<rect x="406" y="546" width="269" height="16" fill="url(#hc)"/>
<rect x="406.8" y="546.8" width="267.5" height="14.5" fill="none" stroke="#00ffff" stroke-width="1.5"/>
<line x1="406" y1="554" x2="675" y2="554" stroke="#00ffff" stroke-width="1"/>
<rect x="696" y="546" width="514" height="16" fill="url(#hc)"/>
<rect x="696.8" y="546.8" width="512.5" height="14.5" fill="none" stroke="#00ffff" stroke-width="1.5"/>
<line x1="696" y1="554" x2="1210" y2="554" stroke="#00ffff" stroke-width="1"/>
<rect x="199.8" y="542.8" width="20.5" height="21.5" fill="none" stroke="#00ffff" stroke-width="1.5"/>
<line x1="199" y1="542" x2="221" y2="565" stroke="#00ffff" stroke-width="1"/>
<line x1="199" y1="565" x2="221" y2="542" stroke="#00ffff" stroke-width="1"/>
<rect x="363.8" y="542.8" width="20.5" height="21.5" fill="none" stroke="#00ffff" stroke-width="1.5"/>
<line x1="363" y1="542" x2="385" y2="565" stroke="#00ffff" stroke-width="1"/>
<line x1="363" y1="565" x2="385" y2="542" stroke="#00ffff" stroke-width="1"/>
<rect x="653.8" y="542.8" width="20.5" height="21.5" fill="none" stroke="#00ffff" stroke-width="1.5"/>
<line x1="653" y1="542" x2="675" y2="565" stroke="#00ffff" stroke-width="1"/>
<line x1="653" y1="565" x2="675" y2="542" stroke="#00ffff" stroke-width="1"/>
<rect x="1195" y="547" width="14" height="14" fill="#000"/>
<rect x="1195" y="547" width="14" height="14" fill="url(#dcy)"/>
<line x1="1195.5" y1="546" x2="1195.5" y2="562" stroke="#00ffff" stroke-width="1"/>
</svg></div></body></html>
